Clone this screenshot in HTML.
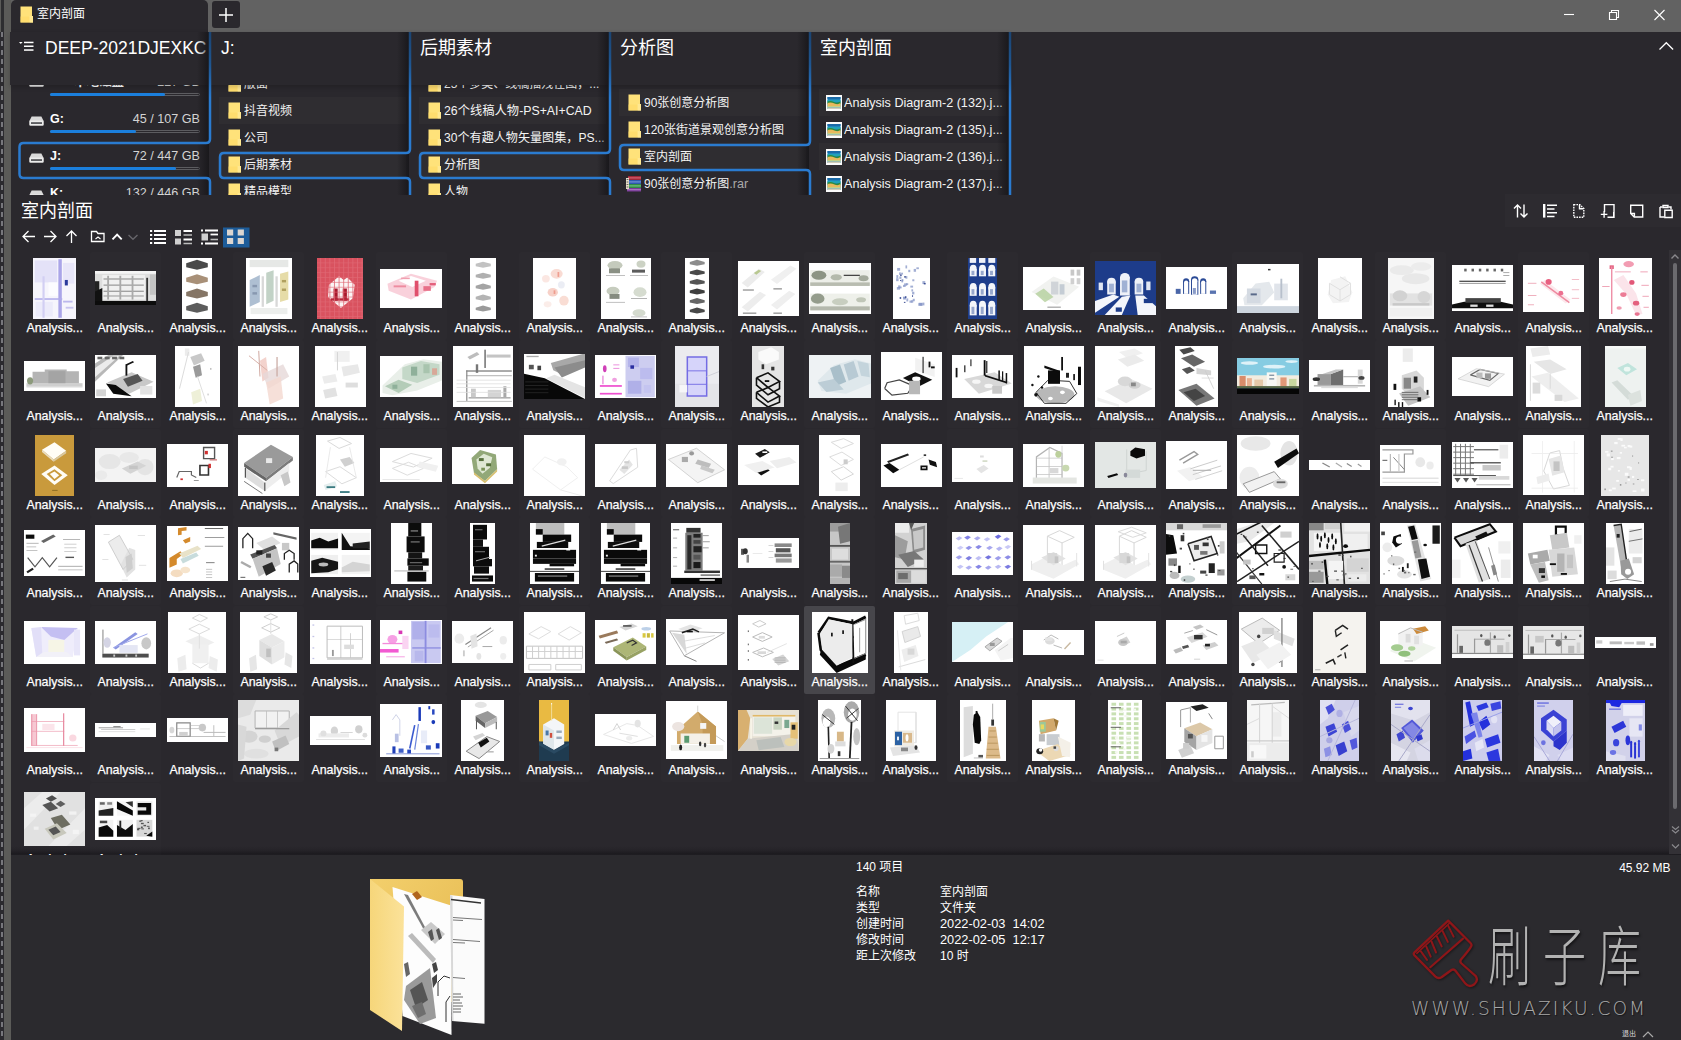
<!DOCTYPE html>
<html lang="zh"><head><meta charset="utf-8"><title>室内剖面</title>
<style>
*{box-sizing:border-box}
html,body{margin:0;padding:0}
body{width:1681px;height:1040px;background:#2a282d;position:relative;overflow:hidden;font-family:"Liberation Sans","Noto Sans CJK SC",sans-serif;color:#fff}
.ab{position:absolute;display:block}
#titlebar{position:absolute;left:0;top:0;width:1681px;height:32px;background:#626262}
#lstrip{position:absolute;left:0;top:0;width:11px;height:1040px;background:#5b5b58}
#lstrip i{position:absolute;left:0;top:32px;width:4px;height:1008px;background:#2b2a2e}
#lstrip b{position:absolute;left:1px;top:32px;width:1.5px;height:1008px;background:repeating-linear-gradient(#77777c 0 5px,#2b2a2e 5px 9px)}
#lstrip u{position:absolute;left:1px;top:0;width:2.5px;height:32px;background:#2e2e30}
#tab{position:absolute;left:11px;top:0;width:197px;height:33px;background:#2a282d;border-radius:5px 5px 0 0}
#tab span{position:absolute;left:26px;top:6px;font-size:12px;line-height:16px;color:#fff}
#plus{position:absolute;left:212px;top:1px;width:28px;height:27px;background:#2a282d;border-radius:3px}
#cols{position:absolute;left:0;top:85px;width:1681px;height:110px;overflow:hidden}
#cols>*{margin-top:-85px}
.crow{position:absolute;width:187px;height:27px}
.crow.z{background:rgba(255,255,255,.025)}
.ctext{position:absolute;font-size:12.6px;line-height:20px;height:20px;white-space:nowrap;overflow:hidden;color:#f4f4f4}
.chead{position:absolute;top:32px;height:53px;background:#2a282d;box-shadow:0 2px 5px rgba(0,0,0,.2)}
.ctitle{position:absolute;top:36px;font-size:17.5px;line-height:24px;white-space:nowrap;color:#fff}
.cshadow{position:absolute;top:32px;width:12px;height:163px;background:linear-gradient(90deg,rgba(20,19,22,0),rgba(20,19,22,.75))}
.dname{position:absolute;font-size:12.5px;font-weight:bold;line-height:16px;color:#fff}
.dsize{position:absolute;font-size:12.6px;line-height:16px;text-align:right;color:#d4d4d4;white-space:nowrap}
.dbar{position:absolute;width:150px;height:3.5px;border:1px solid #5c5c60;border-radius:2px;background:#2a282d}
.dbar i{position:absolute;left:-1px;top:-1px;height:3.5px;background:#1b7fdc;border-radius:2px}
#sectitle{position:absolute;left:21px;top:199px;font-size:18px;line-height:24px}
#grid{position:absolute;left:0;top:250px;width:1668px;height:605px;overflow:hidden}
.cell{position:absolute;width:71.39px;height:88px;border-radius:2px}
.cell.alt{background:rgba(255,255,255,.012)}
.cell.sel{background:#47464b}
.th{position:absolute;display:block}
.lb{position:absolute;left:0;width:100%;top:67px;text-align:center;font-size:12.4px;line-height:18px;color:#fff;white-space:nowrap;-webkit-text-stroke:.25px #fff}
#bottom{position:absolute;left:11px;top:855px;width:1670px;height:185px;background:#2b2a2e}
.info{position:absolute;font-size:12px;line-height:16px;white-space:nowrap;color:#fff}
</style></head>
<body>
<div id="titlebar"></div>
<div id="lstrip"><u></u><i></i><b></b></div>
<div id="tab"><svg class="ab" style="left:9px;top:5.5px" width="14" height="17" viewBox="0 0 14 17"><path d="M0.5 0.5h11.5v9.5h1v6.5h-12.500z" fill="#ffe27a"/><path d="M9.5 10h3.500v6.5h-3.500z" fill="#ffe892"/><path d="M0.5 10.5h9v6h-9z" fill="#ffdc6a" opacity=".7"/></svg><span>室内剖面</span></div>
<div id="plus"><svg class="ab" style="left:0;top:0" width="28" height="27" viewBox="0 0 28 27" stroke="#fff" stroke-width="1.5"><path d="M14 7v14M7 14h14"/></svg></div>
<svg class="ab" style="left:1550px;top:0" width="131" height="32" viewBox="1550 0 131 32" fill="none" stroke="#fff" stroke-width="1.1"><path d="M1564 14.500h10"/><path d="M1609.500 12.500h7v7h-7zM1611.500 12.500v-2h7v7h-2"/><path d="M1654.500 10l10 10M1664.500 10l-10 10"/></svg>
<svg class="ab" style="left:1655px;top:38px" width="22" height="16" viewBox="1655 38 22 16" fill="none" stroke="#fff" stroke-width="1.3"><path d="M1659.500 49.500l6.800-6.800 6.800 6.800"/></svg>
<div id="cols">
<svg class="ab" style="left:29px;top:77px" width="15" height="10" viewBox="0 0 15 10"><path d="M2.6 0.6h9.8l2.1 4.2v4.6h-14V4.8z" fill="#d9d9d9"/><rect x="0.5" y="4.6" width="14" height="4.8" rx="0.8" fill="#ececec"/><rect x="2" y="6.3" width="11" height="1.5" fill="#3a3a3e"/></svg>
<div class="dname" style="left:74px;top:74px">本地磁盘</div>
<div class="dsize" style="left:90px;top:74px;width:110px">227 GB</div>
<div class="dbar" style="left:50px;top:92.5px"><i style="width:115px"></i></div>
<svg class="ab" style="left:29px;top:115.5px" width="15" height="10" viewBox="0 0 15 10"><path d="M2.6 0.6h9.8l2.1 4.2v4.6h-14V4.8z" fill="#d9d9d9"/><rect x="0.5" y="4.6" width="14" height="4.8" rx="0.8" fill="#ececec"/><rect x="2" y="6.3" width="11" height="1.5" fill="#3a3a3e"/></svg>
<div class="dname" style="left:50px;top:111px">G:</div>
<div class="dsize" style="left:90px;top:111px;width:110px">45 / 107 GB</div>
<div class="dbar" style="left:50px;top:129.5px"><i style="width:86px"></i></div>
<svg class="ab" style="left:29px;top:152.5px" width="15" height="10" viewBox="0 0 15 10"><path d="M2.6 0.6h9.8l2.1 4.2v4.6h-14V4.8z" fill="#d9d9d9"/><rect x="0.5" y="4.6" width="14" height="4.8" rx="0.8" fill="#ececec"/><rect x="2" y="6.3" width="11" height="1.5" fill="#3a3a3e"/></svg>
<div class="dname" style="left:50px;top:148px">J:</div>
<div class="dsize" style="left:90px;top:148px;width:110px">72 / 447 GB</div>
<div class="dbar" style="left:50px;top:166.5px"><i style="width:126px"></i></div>
<svg class="ab" style="left:29px;top:189.5px" width="15" height="10" viewBox="0 0 15 10"><path d="M2.6 0.6h9.8l2.1 4.2v4.6h-14V4.8z" fill="#d9d9d9"/><rect x="0.5" y="4.6" width="14" height="4.8" rx="0.8" fill="#ececec"/><rect x="2" y="6.3" width="11" height="1.5" fill="#3a3a3e"/></svg>
<div class="dname" style="left:50px;top:185px">K:</div>
<div class="dsize" style="left:90px;top:185px;width:110px">132 / 446 GB</div>
<div class="dbar" style="left:50px;top:203.5px"><i style="width:90px"></i></div>
<div class="crow" style="left:219px;top:70px"></div>
<svg class="ab" style="left:228px;top:75px" width="14" height="17" viewBox="0 0 14 17"><path d="M0.5 0.5h11.5v9.5h1v6.5h-12.500z" fill="#ffe27a"/><path d="M9.5 10h3.500v6.5h-3.500z" fill="#ffe892"/><path d="M0.5 10.5h9v6h-9z" fill="#ffdc6a" opacity=".7"/></svg>
<div class="ctext" style="left:244px;top:73.5px;width:162px;font-size:12px">版面</div>
<div class="crow z" style="left:219px;top:97px"></div>
<svg class="ab" style="left:228px;top:102px" width="14" height="17" viewBox="0 0 14 17"><path d="M0.5 0.5h11.5v9.5h1v6.5h-12.500z" fill="#ffe27a"/><path d="M9.5 10h3.500v6.5h-3.500z" fill="#ffe892"/><path d="M0.5 10.5h9v6h-9z" fill="#ffdc6a" opacity=".7"/></svg>
<div class="ctext" style="left:244px;top:100.5px;width:162px;font-size:12px">抖音视频</div>
<div class="crow" style="left:219px;top:124px"></div>
<svg class="ab" style="left:228px;top:129px" width="14" height="17" viewBox="0 0 14 17"><path d="M0.5 0.5h11.5v9.5h1v6.5h-12.500z" fill="#ffe27a"/><path d="M9.5 10h3.500v6.5h-3.500z" fill="#ffe892"/><path d="M0.5 10.5h9v6h-9z" fill="#ffdc6a" opacity=".7"/></svg>
<div class="ctext" style="left:244px;top:127.5px;width:162px;font-size:12px">公司</div>
<div class="crow z" style="left:219px;top:151px"></div>
<svg class="ab" style="left:228px;top:156px" width="14" height="17" viewBox="0 0 14 17"><path d="M0.5 0.5h11.5v9.5h1v6.5h-12.500z" fill="#ffe27a"/><path d="M9.5 10h3.500v6.5h-3.500z" fill="#ffe892"/><path d="M0.5 10.5h9v6h-9z" fill="#ffdc6a" opacity=".7"/></svg>
<div class="ctext" style="left:244px;top:154.5px;width:162px;font-size:12px">后期素材</div>
<div class="crow" style="left:219px;top:178px"></div>
<svg class="ab" style="left:228px;top:183px" width="14" height="17" viewBox="0 0 14 17"><path d="M0.5 0.5h11.5v9.5h1v6.5h-12.500z" fill="#ffe27a"/><path d="M9.5 10h3.500v6.5h-3.500z" fill="#ffe892"/><path d="M0.5 10.5h9v6h-9z" fill="#ffdc6a" opacity=".7"/></svg>
<div class="ctext" style="left:244px;top:181.5px;width:162px;font-size:12px">精品模型</div>
<div class="crow" style="left:419px;top:70px"></div>
<svg class="ab" style="left:428px;top:75px" width="14" height="17" viewBox="0 0 14 17"><path d="M0.5 0.5h11.5v9.5h1v6.5h-12.500z" fill="#ffe27a"/><path d="M9.5 10h3.500v6.5h-3.500z" fill="#ffe892"/><path d="M0.5 10.5h9v6h-9z" fill="#ffdc6a" opacity=".7"/></svg>
<div class="ctext" style="left:444px;top:73.5px;width:162px;font-size:12px">25个多类、线稿插残在图，...</div>
<div class="crow z" style="left:419px;top:97px"></div>
<svg class="ab" style="left:428px;top:102px" width="14" height="17" viewBox="0 0 14 17"><path d="M0.5 0.5h11.5v9.5h1v6.5h-12.500z" fill="#ffe27a"/><path d="M9.5 10h3.500v6.5h-3.500z" fill="#ffe892"/><path d="M0.5 10.5h9v6h-9z" fill="#ffdc6a" opacity=".7"/></svg>
<div class="ctext" style="left:444px;top:100.5px;width:162px;font-size:12.3px">26个线稿人物-PS+AI+CAD</div>
<div class="crow" style="left:419px;top:124px"></div>
<svg class="ab" style="left:428px;top:129px" width="14" height="17" viewBox="0 0 14 17"><path d="M0.5 0.5h11.5v9.5h1v6.5h-12.500z" fill="#ffe27a"/><path d="M9.5 10h3.500v6.5h-3.500z" fill="#ffe892"/><path d="M0.5 10.5h9v6h-9z" fill="#ffdc6a" opacity=".7"/></svg>
<div class="ctext" style="left:444px;top:127.5px;width:162px;font-size:12.1px">30个有趣人物矢量图集，PS...</div>
<div class="crow z" style="left:419px;top:151px"></div>
<svg class="ab" style="left:428px;top:156px" width="14" height="17" viewBox="0 0 14 17"><path d="M0.5 0.5h11.5v9.5h1v6.5h-12.500z" fill="#ffe27a"/><path d="M9.5 10h3.500v6.5h-3.500z" fill="#ffe892"/><path d="M0.5 10.5h9v6h-9z" fill="#ffdc6a" opacity=".7"/></svg>
<div class="ctext" style="left:444px;top:154.5px;width:162px;font-size:12px">分析图</div>
<div class="crow" style="left:419px;top:178px"></div>
<svg class="ab" style="left:428px;top:183px" width="14" height="17" viewBox="0 0 14 17"><path d="M0.5 0.5h11.5v9.5h1v6.5h-12.500z" fill="#ffe27a"/><path d="M9.5 10h3.500v6.5h-3.500z" fill="#ffe892"/><path d="M0.5 10.5h9v6h-9z" fill="#ffdc6a" opacity=".7"/></svg>
<div class="ctext" style="left:444px;top:181.5px;width:162px;font-size:12px">人物</div>
<div class="crow z" style="left:619px;top:89px"></div>
<svg class="ab" style="left:628px;top:94px" width="14" height="17" viewBox="0 0 14 17"><path d="M0.5 0.5h11.5v9.5h1v6.5h-12.500z" fill="#ffe27a"/><path d="M9.5 10h3.500v6.5h-3.500z" fill="#ffe892"/><path d="M0.5 10.5h9v6h-9z" fill="#ffdc6a" opacity=".7"/></svg>
<div class="ctext" style="left:644px;top:92.5px;width:162px;font-size:12px">90张创意分析图</div>
<div class="crow" style="left:619px;top:116px"></div>
<svg class="ab" style="left:628px;top:121px" width="14" height="17" viewBox="0 0 14 17"><path d="M0.5 0.5h11.5v9.5h1v6.5h-12.500z" fill="#ffe27a"/><path d="M9.5 10h3.500v6.5h-3.500z" fill="#ffe892"/><path d="M0.5 10.5h9v6h-9z" fill="#ffdc6a" opacity=".7"/></svg>
<div class="ctext" style="left:644px;top:119.5px;width:162px;font-size:12px">120张街道景观创意分析图</div>
<div class="crow z" style="left:619px;top:143px"></div>
<svg class="ab" style="left:628px;top:148px" width="14" height="17" viewBox="0 0 14 17"><path d="M0.5 0.5h11.5v9.5h1v6.5h-12.500z" fill="#ffe27a"/><path d="M9.5 10h3.500v6.5h-3.500z" fill="#ffe892"/><path d="M0.5 10.5h9v6h-9z" fill="#ffdc6a" opacity=".7"/></svg>
<div class="ctext" style="left:644px;top:146.5px;width:162px;font-size:12px">室内剖面</div>
<div class="crow" style="left:619px;top:170px"></div>
<svg class="ab" style="left:626px;top:174.5px" width="16" height="17" viewBox="0 0 16 17"><rect x="2" y="1" width="13" height="4" fill="#a02838"/><rect x="2" y="2.3" width="13" height="1.2" fill="#d86070"/><rect x="1" y="5" width="14" height="4" fill="#3058b0"/><rect x="1" y="6.3" width="14" height="1.2" fill="#7090d8"/><rect x="2" y="9" width="13" height="4" fill="#2f8a48"/><rect x="2" y="10.3" width="13" height="1.2" fill="#70c080"/><rect x="1" y="13" width="14" height="3.5" fill="#7a3a98"/><rect x="1" y="14.2" width="14" height="1" fill="#b080c8"/><rect x="0" y="3" width="3" height="11" fill="#e8e0c8"/><rect x="0.6" y="4" width="1.8" height="1" fill="#666"/><rect x="0.6" y="6.5" width="1.8" height="1" fill="#666"/><rect x="0.6" y="9" width="1.8" height="1" fill="#666"/><rect x="0.6" y="11.5" width="1.8" height="1" fill="#666"/></svg>
<div class="ctext" style="left:644px;top:173.5px;width:162px;font-size:12px">90张创意分析图<span style="color:#aaa;font-size:12.6px">.rar</span></div>
<div class="crow z" style="left:819px;top:89px"></div>
<svg class="ab" style="left:826px;top:95px" width="16" height="16" viewBox="0 0 16 16"><rect x="0" y="0" width="16" height="16" fill="#fbfbfb"/><rect x="1.5" y="2" width="13" height="12" fill="#1f86bd"/><rect x="1.5" y="2" width="13" height="2" fill="#1a6aa8"/><rect x="1.5" y="5" width="13" height="2" fill="#20a2b8"/><path d="M1.5 6.500Q5 5.500 8 7T14.500 6.500V9H1.500z" fill="#2d8c3c"/><path d="M1.5 8Q5 7 8.500 8.500T14.500 8V12H1.500z" fill="#e9b95c"/><rect x="1.5" y="11.300" width="13" height="1.200" fill="#b4dc98"/><rect x="1.5" y="12.500" width="13" height="1.500" fill="#d2ccb8"/></svg>
<div class="ctext" style="left:844px;top:92.5px;width:162px;font-size:12.6px">Analysis Diagram-2 (132).j...</div>
<div class="crow" style="left:819px;top:116px"></div>
<svg class="ab" style="left:826px;top:122px" width="16" height="16" viewBox="0 0 16 16"><rect x="0" y="0" width="16" height="16" fill="#fbfbfb"/><rect x="1.5" y="2" width="13" height="12" fill="#1f86bd"/><rect x="1.5" y="2" width="13" height="2" fill="#1a6aa8"/><rect x="1.5" y="5" width="13" height="2" fill="#20a2b8"/><path d="M1.5 6.500Q5 5.500 8 7T14.500 6.500V9H1.500z" fill="#2d8c3c"/><path d="M1.5 8Q5 7 8.500 8.500T14.500 8V12H1.500z" fill="#e9b95c"/><rect x="1.5" y="11.300" width="13" height="1.200" fill="#b4dc98"/><rect x="1.5" y="12.500" width="13" height="1.500" fill="#d2ccb8"/></svg>
<div class="ctext" style="left:844px;top:119.5px;width:162px;font-size:12.6px">Analysis Diagram-2 (135).j...</div>
<div class="crow z" style="left:819px;top:143px"></div>
<svg class="ab" style="left:826px;top:149px" width="16" height="16" viewBox="0 0 16 16"><rect x="0" y="0" width="16" height="16" fill="#fbfbfb"/><rect x="1.5" y="2" width="13" height="12" fill="#1f86bd"/><rect x="1.5" y="2" width="13" height="2" fill="#1a6aa8"/><rect x="1.5" y="5" width="13" height="2" fill="#20a2b8"/><path d="M1.5 6.500Q5 5.500 8 7T14.500 6.500V9H1.500z" fill="#2d8c3c"/><path d="M1.5 8Q5 7 8.500 8.500T14.500 8V12H1.500z" fill="#e9b95c"/><rect x="1.5" y="11.300" width="13" height="1.200" fill="#b4dc98"/><rect x="1.5" y="12.500" width="13" height="1.500" fill="#d2ccb8"/></svg>
<div class="ctext" style="left:844px;top:146.5px;width:162px;font-size:12.6px">Analysis Diagram-2 (136).j...</div>
<div class="crow" style="left:819px;top:170px"></div>
<svg class="ab" style="left:826px;top:176px" width="16" height="16" viewBox="0 0 16 16"><rect x="0" y="0" width="16" height="16" fill="#fbfbfb"/><rect x="1.5" y="2" width="13" height="12" fill="#1f86bd"/><rect x="1.5" y="2" width="13" height="2" fill="#1a6aa8"/><rect x="1.5" y="5" width="13" height="2" fill="#20a2b8"/><path d="M1.5 6.500Q5 5.500 8 7T14.500 6.500V9H1.500z" fill="#2d8c3c"/><path d="M1.5 8Q5 7 8.500 8.500T14.500 8V12H1.500z" fill="#e9b95c"/><rect x="1.5" y="11.300" width="13" height="1.200" fill="#b4dc98"/><rect x="1.5" y="12.500" width="13" height="1.500" fill="#d2ccb8"/></svg>
<div class="ctext" style="left:844px;top:173.5px;width:162px;font-size:12.6px">Analysis Diagram-2 (137).j...</div>
</div>
<div class="chead" style="left:10px;width:200px"></div>
<div class="chead" style="left:210px;width:200px"></div>
<div class="chead" style="left:410px;width:200px"></div>
<div class="chead" style="left:610px;width:200px"></div>
<div class="chead" style="left:810px;width:200px"></div>
<div class="ctitle" style="left:45px;font-size:17.5px">DEEP-2021DJEXKC</div>
<div class="ctitle" style="left:221px;font-size:17.5px">J:</div>
<div class="ctitle" style="left:420px;font-size:18px">后期素材</div>
<div class="ctitle" style="left:620px;font-size:18px">分析图</div>
<div class="ctitle" style="left:820px;font-size:18px">室内剖面</div>
<svg class="ab" style="left:17px;top:38px" width="20" height="16" viewBox="17 38 20 16" fill="#fff"><path d="M19 42h3.600l-1.800 2z"/><rect x="24" y="41.700" width="9.500" height="1.500"/><rect x="24" y="45.500" width="9.500" height="1.500"/><rect x="24" y="49.300" width="9.500" height="1.500"/></svg>
<div class="cshadow" style="left:197px"></div>
<div class="cshadow" style="left:397px"></div>
<div class="cshadow" style="left:597px"></div>
<div class="cshadow" style="left:797px"></div>
<div class="cshadow" style="left:997px"></div>
<svg class="ab" style="left:0;top:32px" width="1020" height="163" viewBox="0 32 1020 163" fill="none" stroke="url(#bl)" stroke-width="2.5"><defs><linearGradient id="bl" gradientUnits="userSpaceOnUse" x1="0" y1="32" x2="0" y2="196"><stop offset="0" stop-color="#1b4472"/><stop offset=".2" stop-color="#1f5690"/><stop offset=".4" stop-color="#2a7bd0"/><stop offset="1" stop-color="#2a7bd0"/></linearGradient></defs><path d="M210 32V139Q210 143 206 143H23.5Q19.5 143 19.5 147V174Q19.5 178 23.5 178H206Q210 178 210 182V196"/><path d="M410 32V149Q410 153 406 153H224Q220 153 220 157V174Q220 178 224 178H406Q410 178 410 182V196"/><path d="M610 32V149Q610 153 606 153H424Q420 153 420 157V174Q420 178 424 178H606Q610 178 610 182V196"/><path d="M810 32V141Q810 145 806 145H624Q620 145 620 149V166Q620 170 624 170H806Q810 170 810 174V196"/><path d="M1010 32V196"/></svg>
<div id="sectitle">室内剖面</div>
<svg class="ab" style="left:18px;top:224px" width="236" height="26" viewBox="18 224 236 26" fill="none" stroke="#fff" stroke-width="1.3">
<path d="M35 236.5H23M28.5 231l-5.5 5.5 5.5 5.5"/>
<path d="M44 236.5H56M50.5 231l5.5 5.5-5.5 5.5"/>
<path d="M71.5 243V231M66.5 236l5-5 5 5"/>
<path d="M91.5 231.5h5l1.5 2h6v8h-12.5z"/><path d="M95.5 239l2.5-2 2.5 2" stroke-width="1.1"/>
<path d="M112.5 239.3l4.6-4.6 4.6 4.6" stroke-width="1.9"/>
<path d="M128.5 235l4.5 4.3 4.5-4.3" stroke="#66656a" stroke-width="1.4"/>
<path d="M150 231h2.2M154 231h12" stroke-width="2"/>
<path d="M150 235h2.2M154 235h12" stroke-width="2"/>
<path d="M150 239h2.2M154 239h12" stroke-width="2"/>
<path d="M150 243h2.2M154 243h12" stroke-width="2"/>
<rect x="175" y="230" width="6" height="6" fill="#d0d0d0" stroke="none"/><rect x="175" y="238.5" width="6" height="6" fill="#d0d0d0" stroke="none"/>
<path d="M183.5 231h8.5M183.5 239.5h8.5" stroke-width="1.8"/><path d="M183.5 235h8.5M183.5 243.5h8.5" stroke="#bdbdbd" stroke-width="1.6"/>
<path d="M201 230.5h2M205 230.5h13M201 243.5h2M205 243.5h13" stroke-width="2"/><rect x="201.5" y="233.5" width="6.5" height="7" fill="#cfcfcf" stroke="none"/><path d="M210.5 234.5h7.5" stroke-width="1.8"/><path d="M210.5 239.5h7.5" stroke="#bdbdbd" stroke-width="1.6"/>
<rect x="223" y="227.5" width="26.5" height="20" fill="#1d5c99" stroke="none"/>
<rect x="227" y="229.5" width="6.2" height="6" fill="#dcd6d0" stroke="none"/>
<rect x="237.7" y="229.5" width="6.2" height="6" fill="#dcd6d0" stroke="none"/>
<rect x="227" y="238" width="6.2" height="6" fill="#dcd6d0" stroke="none"/>
<rect x="237.7" y="238" width="6.2" height="6" fill="#dcd6d0" stroke="none"/>
</svg>
<div class="ab" style="left:1505px;top:194px;width:176px;height:33px;background:rgba(255,255,255,.015)"></div>
<svg class="ab" style="left:1508px;top:200px" width="170" height="22" viewBox="1508 200 170 22" fill="none" stroke="#fff" stroke-width="1.4">
<path d="M1517.5 217.5V205M1514 208.5l3.5-3.5 3.5 3.5M1524 204.5V217M1520.500 213.5l3.5 3.5 3.5-3.5"/>
<path d="M1544.2 204v13.6" stroke-width="2.4"/><path d="M1547 205.200h10M1547 209h7.5M1547 212.800h10M1547 216.600h7.500" stroke-width="1.5"/>
<path d="M1573.8 204.600h6l4 4v8.600h-10z" stroke-dasharray="1.6 1"/><path d="M1579.500 204.800v4h4"/>
<path d="M1604.500 212V204.600h9.500v12.600h-6.500M1600.800 214.400h6.600M1604.100 211.100v6.600"/><path d="M1613.500 212v5" stroke-width="1"/>
<path d="M1630.700 205.200h12v11.800h-8.500l-3.500-3.500z"/><path d="M1631 213.500h3.400v3.300"/>
<path d="M1660 207h2.500M1668.500 207h2.500v2.500M1660 207v10h4"/><path d="M1663 207.500v-2h5v2z"/><path d="M1664.800 210.200h7.400v7.300h-7.400z"/>
</svg>
<div class="ab" style="left:11px;top:846px;width:1670px;height:9px;background:linear-gradient(rgba(24,23,27,0),rgba(24,23,27,.25) 45%,rgba(24,23,27,.8) 88%,rgba(24,23,27,.55))"></div>
<div id="grid">
<div class="cell" style="left:19px;top:2px"><svg class="th" style="left:14px;top:6px;background:#f6f5fc" width="43" height="61" viewBox="0 0 100 100" preserveAspectRatio="none"><rect x="4" y="4" width="52" height="36" fill="#e4e2f8"/><rect x="70" y="8" width="26" height="34" fill="#e8e6f9"/><rect x="6" y="72" width="40" height="24" fill="#ecebfa"/><rect x="36" y="40" width="22" height="22" fill="#fcfcff"/><rect x="59" y="2" width="8" height="96" fill="#aaa5e8"/><rect x="4" y="66" width="64" height="2.5" fill="#b0abea"/><rect x="22" y="30" width="5" height="68" fill="#d2cff3"/><rect x="74" y="36" width="7" height="9" fill="#2b3a9a"/><rect x="70" y="70" width="22" height="3" fill="#bcb8ec"/><rect x="76" y="80" width="18" height="3" fill="#c8c4f0"/></svg><span class="lb">Analysis...</span></div>
<div class="cell alt" style="left:90px;top:2px"><svg class="th" style="left:5px;top:19px;background:#dedede" width="61" height="34" viewBox="0 0 100 100" preserveAspectRatio="none"><rect x="0" y="0" width="100" height="8" fill="#f4f4f4"/><rect x="0" y="30" width="7" height="70" fill="#222"/><rect x="12" y="12" width="70" height="72" fill="#f0f0f0"/><rect x="14" y="22" width="66" height="3" fill="#888"/><rect x="14" y="40" width="66" height="3" fill="#888"/><rect x="14" y="58" width="66" height="3" fill="#888"/><rect x="14" y="72" width="66" height="3" fill="#999"/><rect x="84" y="20" width="3" height="68" fill="#333"/><rect x="90" y="10" width="10" height="60" fill="#c4c4c4"/><rect x="0" y="88" width="100" height="12" fill="#0c0c0c"/><polygon points="0,60 12,50 12,88 0,88" fill="#111"/><rect x="20" y="14" width="3" height="70" fill="#aaa"/><rect x="40" y="14" width="3" height="70" fill="#aaa"/><rect x="60" y="14" width="3" height="70" fill="#aaa"/></svg><span class="lb">Analysis...</span></div>
<div class="cell" style="left:162px;top:2px"><svg class="th" style="left:20px;top:6px;background:#ffffff" width="30" height="61" viewBox="0 0 100 100" preserveAspectRatio="none"><polygon points="50,3.0 86,8.7575 86,15.337499999999999 50,19.45 14,15.337499999999999 14,8.7575" fill="#4a4a4a"/><polygon points="50,26.5 86,32.2575 86,38.8375 50,42.95 14,38.8375 14,32.2575" fill="#a89078"/><polygon points="50,50.0 86,55.7575 86,62.3375 50,66.45 14,62.3375 14,55.7575" fill="#857565"/><polygon points="50,73.5 86,79.2575 86,85.8375 50,89.95 14,85.8375 14,79.2575" fill="#5c5c5c"/></svg><span class="lb">Analysis...</span></div>
<div class="cell alt" style="left:233px;top:2px"><svg class="th" style="left:13px;top:6px;background:#ffffff" width="46" height="61" viewBox="0 0 100 100" preserveAspectRatio="none"><rect x="8" y="3" width="84" height="12" fill="#e6e8e6"/><polygon points="8,36 30,28 30,72 8,80" fill="#aebfd2"/><polygon points="44,24 60,20 60,70 44,76" fill="#c2d2c6"/><polygon points="74,26 92,22 92,68 74,72" fill="#e6dca8"/><rect x="10" y="82" width="80" height="10" fill="#eceeec"/><rect x="34" y="30" width="5" height="50" fill="#d8d8d8"/><rect x="64" y="30" width="5" height="50" fill="#d8d8d8"/><rect x="14" y="44" width="10" height="4" fill="#8898b0"/><rect x="14" y="56" width="10" height="4" fill="#8898b0"/><rect x="78" y="36" width="9" height="4" fill="#b0a060"/><rect x="78" y="50" width="9" height="4" fill="#b0a060"/></svg><span class="lb">Analysis...</span></div>
<div class="cell" style="left:304px;top:2px"><svg class="th" style="left:13px;top:6px;background:#d9525f" width="46" height="61" viewBox="0 0 100 100" preserveAspectRatio="none"><polygon points="26,44 48,30 58,36 66,32 82,44 78,66 52,82 24,64" fill="#fbf4f4"/><rect x="36" y="50" width="9" height="20" fill="#a8182c"/><rect x="56" y="50" width="9" height="20" fill="#a8182c"/><rect x="30" y="66" width="40" height="4" fill="#b8283c"/><line x1="0" y1="8" x2="100" y2="8" stroke="#e06a76" stroke-width="0.6" vector-effect="non-scaling-stroke"/><line x1="0" y1="16" x2="100" y2="16" stroke="#e06a76" stroke-width="0.6" vector-effect="non-scaling-stroke"/><line x1="0" y1="24" x2="100" y2="24" stroke="#e06a76" stroke-width="0.6" vector-effect="non-scaling-stroke"/><line x1="0" y1="32" x2="100" y2="32" stroke="#e06a76" stroke-width="0.6" vector-effect="non-scaling-stroke"/><line x1="0" y1="40" x2="100" y2="40" stroke="#e06a76" stroke-width="0.6" vector-effect="non-scaling-stroke"/><line x1="0" y1="48" x2="100" y2="48" stroke="#e06a76" stroke-width="0.6" vector-effect="non-scaling-stroke"/><line x1="0" y1="56" x2="100" y2="56" stroke="#e06a76" stroke-width="0.6" vector-effect="non-scaling-stroke"/><line x1="0" y1="64" x2="100" y2="64" stroke="#e06a76" stroke-width="0.6" vector-effect="non-scaling-stroke"/><line x1="0" y1="72" x2="100" y2="72" stroke="#e06a76" stroke-width="0.6" vector-effect="non-scaling-stroke"/><line x1="0" y1="80" x2="100" y2="80" stroke="#e06a76" stroke-width="0.6" vector-effect="non-scaling-stroke"/><line x1="0" y1="88" x2="100" y2="88" stroke="#e06a76" stroke-width="0.6" vector-effect="non-scaling-stroke"/><line x1="0" y1="96" x2="100" y2="96" stroke="#e06a76" stroke-width="0.6" vector-effect="non-scaling-stroke"/><line x1="8" y1="0" x2="8" y2="100" stroke="#e06a76" stroke-width="0.8" vector-effect="non-scaling-stroke"/><line x1="18" y1="0" x2="18" y2="100" stroke="#e06a76" stroke-width="0.8" vector-effect="non-scaling-stroke"/><line x1="28" y1="0" x2="28" y2="100" stroke="#e06a76" stroke-width="0.8" vector-effect="non-scaling-stroke"/><line x1="38" y1="0" x2="38" y2="100" stroke="#e06a76" stroke-width="0.8" vector-effect="non-scaling-stroke"/><line x1="48" y1="0" x2="48" y2="100" stroke="#e06a76" stroke-width="0.8" vector-effect="non-scaling-stroke"/><line x1="58" y1="0" x2="58" y2="100" stroke="#e06a76" stroke-width="0.8" vector-effect="non-scaling-stroke"/><line x1="68" y1="0" x2="68" y2="100" stroke="#e06a76" stroke-width="0.8" vector-effect="non-scaling-stroke"/><line x1="78" y1="0" x2="78" y2="100" stroke="#e06a76" stroke-width="0.8" vector-effect="non-scaling-stroke"/><line x1="88" y1="0" x2="88" y2="100" stroke="#e06a76" stroke-width="0.8" vector-effect="non-scaling-stroke"/><line x1="98" y1="0" x2="98" y2="100" stroke="#e06a76" stroke-width="0.8" vector-effect="non-scaling-stroke"/></svg><span class="lb">Analysis...</span></div>
<div class="cell alt" style="left:376px;top:2px"><svg class="th" style="left:4px;top:17px;background:#ffffff" width="62" height="39" viewBox="0 0 100 100" preserveAspectRatio="none"><polygon points="12,38 50,12 92,30 88,46 50,78 14,56" fill="#f7c6d2" opacity="0.8"/><polygon points="30,30 50,18 74,30 52,46" fill="#ffffff"/><rect x="56" y="30" width="6" height="40" fill="#e0506c"/><rect x="70" y="44" width="12" height="12" fill="#e87088"/><rect x="22" y="42" width="20" height="5" fill="#ee8ca0"/><rect x="34" y="22" width="14" height="4" fill="#f0a0b0"/><rect x="80" y="36" width="10" height="6" fill="#e4607c"/></svg><span class="lb">Analysis...</span></div>
<div class="cell" style="left:447px;top:2px"><svg class="th" style="left:23px;top:6px;background:#ffffff" width="26" height="61" viewBox="0 0 100 100" preserveAspectRatio="none"><polygon points="50,6.0 80,9.465 80,13.425 50,15.9 22,13.425 22,9.465" fill="#c2c2c2"/><polygon points="50,24.0 80,27.465 80,31.425 50,33.9 22,31.425 22,27.465" fill="#b0b0b0"/><polygon points="50,42.0 80,45.465 80,49.425 50,51.9 22,49.425 22,45.465" fill="#a4a4a4"/><polygon points="50,60.0 80,63.465 80,67.425 50,69.9 22,67.425 22,63.465" fill="#b4b4b4"/><polygon points="50,78.0 80,81.465 80,85.425 50,87.9 22,85.425 22,81.465" fill="#9a9a9a"/></svg><span class="lb">Analysis...</span></div>
<div class="cell alt" style="left:519px;top:2px"><svg class="th" style="left:14px;top:6px;background:#ffffff" width="43" height="61" viewBox="0 0 100 100" preserveAspectRatio="none"><ellipse cx="55" cy="26" rx="14" ry="8" fill="#f6ccc0" opacity="0.7"/><ellipse cx="30" cy="34" rx="9" ry="6" fill="#f9ddd6" opacity="0.7"/><ellipse cx="46" cy="56" rx="12" ry="7" fill="#f4beb0" opacity="0.7"/><ellipse cx="72" cy="70" rx="11" ry="8" fill="#f6cec2" opacity="0.7"/><ellipse cx="34" cy="76" rx="9" ry="5" fill="#fae6e0" opacity="0.7"/><ellipse cx="66" cy="44" rx="8" ry="6" fill="#e2e6f0" opacity="0.7"/><rect x="57" y="23" width="4" height="8" fill="#ec9080" opacity="0.8"/><rect x="48" y="53" width="4" height="6" fill="#ec9080" opacity="0.8"/></svg><span class="lb">Analysis...</span></div>
<div class="cell" style="left:590px;top:2px"><svg class="th" style="left:11px;top:6px;background:#ffffff" width="50" height="61" viewBox="0 0 100 100" preserveAspectRatio="none"><ellipse cx="28" cy="12" rx="15" ry="7" fill="#c4cabc"/><rect x="16" y="17" width="22" height="8" fill="#8a9084"/><rect x="10" y="28" width="38" height="1.2" fill="#aaa"/><ellipse cx="80" cy="10" rx="9" ry="6" fill="#ccd2c4"/><rect x="62" y="19" width="26" height="5" fill="#5c5c5c"/><rect x="58" y="28" width="36" height="1.2" fill="#aaa"/><ellipse cx="24" cy="54" rx="13" ry="7" fill="#c6ccbe"/><rect x="17" y="59" width="20" height="8" fill="#868c80"/><rect x="10" y="72" width="38" height="1.2" fill="#aaa"/><ellipse cx="78" cy="56" rx="13" ry="8" fill="#d6dcd0"/><rect x="60" y="66" width="32" height="1.2" fill="#999"/><ellipse cx="76" cy="90" rx="13" ry="6" fill="#d4dace"/><rect x="60" y="96" width="32" height="1.2" fill="#aaa"/></svg><span class="lb">Analysis...</span></div>
<div class="cell alt" style="left:661px;top:2px"><svg class="th" style="left:24px;top:6px;background:#ffffff" width="24" height="61" viewBox="0 0 100 100" preserveAspectRatio="none"><polygon points="50,3.0 82,6.399666666666667 82,10.285 50,12.713333333333333 20,10.285 20,6.399666666666667" fill="#8c8c8c"/><polygon points="50,18.666666666666664 82,22.06633333333333 82,25.951666666666664 50,28.379999999999995 20,25.951666666666664 20,22.06633333333333" fill="#4a4a4a"/><polygon points="50,34.33333333333333 82,37.733 82,41.618333333333325 50,44.04666666666666 20,41.618333333333325 20,37.733" fill="#555"/><polygon points="50,50.0 82,53.39966666666667 82,57.285 50,59.71333333333333 20,57.285 20,53.39966666666667" fill="#3e3e3e"/><polygon points="50,65.66666666666666 82,69.06633333333332 82,72.95166666666665 50,75.38 20,72.95166666666665 20,69.06633333333332" fill="#666"/><polygon points="50,81.33333333333333 82,84.73299999999999 82,88.61833333333333 50,91.04666666666667 20,88.61833333333333 20,84.73299999999999" fill="#484848"/></svg><span class="lb">Analysis...</span></div>
<div class="cell" style="left:733px;top:2px"><svg class="th" style="left:5px;top:9px;background:#ffffff" width="61" height="55" viewBox="0 0 100 100" preserveAspectRatio="none"><polygon points="6,40 34,14 44,20 16,48" fill="#ececec"/><polygon points="26,22 34,16 38,18 30,25" fill="#b8c890"/><polygon points="54,34 86,8 96,14 64,42" fill="#f0f0f0"/><polygon points="6,84 36,56 46,62 16,92" fill="#ededed"/><polygon points="54,80 84,54 94,60 64,88" fill="#efefef"/><rect x="8" y="52" width="18" height="1.5" fill="#555"/><rect x="58" y="50" width="14" height="1.5" fill="#555"/><rect x="8" y="94" width="22" height="1.5" fill="#555"/><rect x="58" y="94" width="14" height="1.5" fill="#555"/></svg><span class="lb">Analysis...</span></div>
<div class="cell alt" style="left:804px;top:2px"><svg class="th" style="left:5px;top:11px;background:#ffffff" width="62" height="51" viewBox="0 0 100 100" preserveAspectRatio="none"><rect x="2" y="14" width="96" height="30" fill="#eceee8"/><ellipse cx="16" cy="24" rx="12" ry="9" fill="#8c9484"/><ellipse cx="44" cy="28" rx="9" ry="6" fill="#b4baac"/><rect x="56" y="23" width="26" height="2.5" fill="#444"/><ellipse cx="88" cy="30" rx="8" ry="6" fill="#a4aa9c"/><rect x="2" y="38" width="96" height="7" fill="#b8bcb0"/><rect x="2" y="60" width="96" height="32" fill="#eef0ea"/><ellipse cx="14" cy="70" rx="11" ry="10" fill="#949c8c"/><ellipse cx="50" cy="76" rx="13" ry="7" fill="#c8cec0"/><rect x="2" y="85" width="96" height="8" fill="#b4b8ac"/><ellipse cx="84" cy="72" rx="8" ry="5" fill="#c0c6b8"/></svg><span class="lb">Analysis...</span></div>
<div class="cell" style="left:875px;top:2px"><svg class="th" style="left:18px;top:6px;background:#ffffff" width="37" height="61" viewBox="0 0 100 100" preserveAspectRatio="none"><rect x="27.4" y="63.6" width="7.6" height="4.6" fill="#8494c6" opacity="0.75"/><rect x="21.9" y="24.1" width="5.2" height="3.1" fill="#8494c6" opacity="0.75"/><rect x="63.1" y="15.3" width="6.9" height="3" fill="#8494c6" opacity="0.75"/><rect x="30.1" y="41.5" width="8.3" height="4" fill="#8494c6" opacity="0.75"/><rect x="9.1" y="28" width="5.2" height="4.7" fill="#8494c6" opacity="0.75"/><rect x="68.7" y="74.1" width="8.2" height="4.4" fill="#8494c6" opacity="0.75"/><rect x="79.2" y="73.1" width="5.7" height="4.6" fill="#8494c6" opacity="0.75"/><rect x="44.5" y="69.7" width="7" height="3.6" fill="#8494c6" opacity="0.75"/><rect x="35.3" y="41.4" width="5.9" height="2.8" fill="#8494c6" opacity="0.75"/><rect x="69.5" y="73.4" width="8.9" height="4.2" fill="#8494c6" opacity="0.75"/><rect x="49.6" y="69.1" width="5.1" height="4.2" fill="#8494c6" opacity="0.75"/><rect x="41.3" y="19.4" width="5.4" height="3.8" fill="#8494c6" opacity="0.75"/><rect x="27" y="44" width="7.2" height="3.5" fill="#8494c6" opacity="0.75"/><rect x="17.8" y="46.7" width="5.6" height="3.1" fill="#8494c6" opacity="0.75"/><rect x="22.6" y="35.9" width="4.8" height="4.1" fill="#8494c6" opacity="0.75"/><rect x="79.5" y="37.9" width="7.7" height="4.8" fill="#8494c6" opacity="0.75"/><rect x="11.2" y="16.3" width="8.1" height="4.6" fill="#8494c6" opacity="0.75"/><rect x="55.9" y="17.9" width="6.4" height="4.7" fill="#8494c6" opacity="0.75"/><rect x="74.5" y="73.9" width="5.4" height="4.6" fill="#8494c6" opacity="0.75"/><rect x="36.1" y="66.3" width="5.1" height="4.9" fill="#8494c6" opacity="0.75"/><rect x="53.3" y="66.9" width="5.5" height="4" fill="#8494c6" opacity="0.75"/><rect x="51.6" y="55.4" width="6.1" height="4.3" fill="#8494c6" opacity="0.75"/><rect x="33.6" y="29.7" width="5.2" height="4.2" fill="#8494c6" opacity="0.75"/><rect x="16.4" y="23.6" width="4.8" height="4.1" fill="#8494c6" opacity="0.75"/><rect x="49.7" y="51.3" width="4.7" height="3.6" fill="#8494c6" opacity="0.75"/><rect x="33.7" y="12.1" width="4.5" height="5" fill="#8494c6" opacity="0.75"/><rect x="17.1" y="30.2" width="5.7" height="4" fill="#8494c6" opacity="0.75"/><rect x="13.8" y="44.9" width="6.2" height="4.6" fill="#8494c6" opacity="0.75"/><rect x="8.4" y="33.1" width="6.7" height="4.9" fill="#8494c6" opacity="0.75"/><rect x="46.8" y="45.3" width="7.5" height="3.2" fill="#8494c6" opacity="0.75"/><rect x="10.4" y="47.6" width="8.6" height="4.3" fill="#8494c6" opacity="0.75"/><rect x="27.4" y="63.5" width="8.3" height="3.1" fill="#8494c6" opacity="0.75"/><rect x="52.1" y="34.9" width="5.6" height="3.2" fill="#8494c6" opacity="0.75"/><rect x="23.3" y="34.5" width="4.7" height="3.5" fill="#8494c6" opacity="0.75"/><rect x="18" y="64.1" width="4.1" height="2.9" fill="#2a3e8a" opacity="0.9"/><rect x="30.3" y="29.7" width="4.3" height="2.5" fill="#2a3e8a" opacity="0.9"/><rect x="32.7" y="62.7" width="3.5" height="2.7" fill="#2a3e8a" opacity="0.9"/><rect x="18.9" y="27.2" width="4.8" height="2" fill="#2a3e8a" opacity="0.9"/><rect x="29.5" y="71.9" width="4.1" height="1.7" fill="#2a3e8a" opacity="0.9"/><rect x="51.3" y="61.1" width="2.9" height="2.5" fill="#2a3e8a" opacity="0.9"/><rect x="19.2" y="36" width="2.7" height="1.8" fill="#2a3e8a" opacity="0.9"/><rect x="83.3" y="41.1" width="5" height="2.2" fill="#2a3e8a" opacity="0.9"/></svg><span class="lb">Analysis...</span></div>
<div class="cell alt" style="left:947px;top:2px"><svg class="th" style="left:21px;top:6px;background:#1e3e8c" width="29" height="61" viewBox="0 0 100 100" preserveAspectRatio="none"><rect x="6" y="0" width="22" height="8" fill="#f0f2f8"/><rect x="38" y="0" width="22" height="8" fill="#f0f2f8"/><rect x="70" y="0" width="24" height="8" fill="#f0f2f8"/><ellipse cx="18" cy="18" rx="12" ry="7" fill="#f4f6fa"/><rect x="6" y="18" width="24" height="12" fill="#f4f6fa"/><rect x="12" y="21" width="10" height="7" fill="#6f86b8" opacity="0.7"/><ellipse cx="50" cy="18" rx="12" ry="7" fill="#f4f6fa"/><rect x="38" y="18" width="24" height="12" fill="#f4f6fa"/><rect x="44" y="21" width="10" height="7" fill="#6f86b8" opacity="0.7"/><ellipse cx="82" cy="18" rx="12" ry="7" fill="#f4f6fa"/><rect x="70" y="18" width="24" height="12" fill="#f4f6fa"/><rect x="76" y="21" width="10" height="7" fill="#6f86b8" opacity="0.7"/><ellipse cx="18" cy="48" rx="12" ry="7" fill="#f4f6fa"/><rect x="6" y="48" width="24" height="14" fill="#f4f6fa"/><rect x="12" y="51" width="10" height="9" fill="#6f86b8" opacity="0.7"/><ellipse cx="50" cy="48" rx="12" ry="7" fill="#f4f6fa"/><rect x="38" y="48" width="24" height="14" fill="#f4f6fa"/><rect x="44" y="51" width="10" height="9" fill="#6f86b8" opacity="0.7"/><ellipse cx="82" cy="48" rx="12" ry="7" fill="#f4f6fa"/><rect x="70" y="48" width="24" height="14" fill="#f4f6fa"/><rect x="76" y="51" width="10" height="9" fill="#6f86b8" opacity="0.7"/><ellipse cx="18" cy="77" rx="12" ry="7" fill="#f4f6fa"/><rect x="6" y="77" width="24" height="17" fill="#f4f6fa"/><rect x="12" y="80" width="10" height="12" fill="#6f86b8" opacity="0.7"/><ellipse cx="50" cy="77" rx="12" ry="7" fill="#f4f6fa"/><rect x="38" y="77" width="24" height="17" fill="#f4f6fa"/><rect x="44" y="80" width="10" height="12" fill="#6f86b8" opacity="0.7"/><ellipse cx="82" cy="77" rx="12" ry="7" fill="#f4f6fa"/><rect x="70" y="77" width="24" height="17" fill="#f4f6fa"/><rect x="76" y="80" width="10" height="12" fill="#6f86b8" opacity="0.7"/></svg><span class="lb">Analysis...</span></div>
<div class="cell" style="left:1018px;top:2px"><svg class="th" style="left:5px;top:15px;background:#ffffff" width="61" height="43" viewBox="0 0 100 100" preserveAspectRatio="none"><polygon points="14,58 50,22 92,46 56,88" fill="#f1f2f0"/><polygon points="20,62 34,50 50,70 36,82" fill="#b4d09c" opacity="0.8"/><rect x="46" y="34" width="12" height="30" fill="#d0d4d8"/><rect x="60" y="40" width="8" height="24" fill="#c4ccd4"/><rect x="78" y="6" width="6" height="14" fill="#c8c8c8"/><rect x="88" y="6" width="6" height="14" fill="#c8c8c8"/><rect x="78" y="26" width="6" height="14" fill="#d0d0d0"/><rect x="88" y="26" width="6" height="14" fill="#d0d0d0"/><rect x="40" y="92" width="22" height="3" fill="#aaa"/></svg><span class="lb">Analysis...</span></div>
<div class="cell alt" style="left:1090px;top:2px"><svg class="th" style="left:5px;top:9px;background:#1d3c8a" width="61" height="54" viewBox="0 0 100 100" preserveAspectRatio="none"><ellipse cx="27" cy="38" rx="7" ry="7" fill="#eef1f8"/><rect x="20" y="38" width="14" height="24" fill="#eef1f8"/><ellipse cx="49" cy="30" rx="8" ry="8" fill="#eef1f8"/><rect x="41" y="30" width="16" height="34" fill="#eef1f8"/><ellipse cx="72" cy="38" rx="7" ry="7" fill="#eef1f8"/><rect x="65" y="38" width="14" height="24" fill="#eef1f8"/><rect x="84" y="38" width="7" height="16" fill="#dfe5f2"/><rect x="6" y="40" width="7" height="14" fill="#dfe5f2"/><polygon points="0,74 30,62 40,66 0,96" fill="#f4f6fb"/><polygon points="44,66 58,64 44,100 16,100" fill="#f4f6fb"/><polygon points="66,64 80,64 100,84 100,100 70,100" fill="#f4f6fb"/><rect x="44" y="36" width="9" height="22" fill="#7f95c4" opacity="0.7"/><rect x="23" y="42" width="8" height="16" fill="#7f95c4" opacity="0.7"/><rect x="68" y="42" width="8" height="16" fill="#7f95c4" opacity="0.7"/><rect x="80" y="70" width="14" height="8" fill="#1d3c8a"/><rect x="34" y="86" width="10" height="8" fill="#1d3c8a"/></svg><span class="lb">Analysis...</span></div>
<div class="cell" style="left:1161px;top:2px"><svg class="th" style="left:5px;top:15px;background:#ffffff" width="61" height="42" viewBox="0 0 100 100" preserveAspectRatio="none"><ellipse cx="33" cy="34" rx="5" ry="7" fill="#2a4a96"/><rect x="28" y="34" width="10" height="30" fill="#2a4a96"/><ellipse cx="33" cy="37" rx="3.4" ry="5" fill="#fff"/><rect x="29.6" y="37" width="6.8" height="27" fill="#fff"/><ellipse cx="47" cy="30" rx="6" ry="8" fill="#2a4a96"/><rect x="41" y="30" width="12" height="36" fill="#2a4a96"/><ellipse cx="47" cy="33" rx="4.4" ry="6" fill="#fff"/><rect x="42.6" y="33" width="8.8" height="33" fill="#fff"/><ellipse cx="61" cy="34" rx="5" ry="7" fill="#2a4a96"/><rect x="56" y="34" width="10" height="30" fill="#2a4a96"/><ellipse cx="61" cy="37" rx="3.4" ry="5" fill="#fff"/><rect x="57.6" y="37" width="6.8" height="27" fill="#fff"/><rect x="16" y="52" width="8" height="12" fill="#4a66a8"/><rect x="72" y="56" width="10" height="8" fill="#5a74b0"/><rect x="44" y="50" width="5" height="14" fill="#8a9cc8"/></svg><span class="lb">Analysis...</span></div>
<div class="cell alt" style="left:1232px;top:2px"><svg class="th" style="left:5px;top:12px;background:#ffffff" width="62" height="49" viewBox="0 0 100 100" preserveAspectRatio="none"><rect x="0" y="86" width="100" height="14" fill="#cdd5de"/><polygon points="10,70 30,40 52,36 60,58 40,84 12,84" fill="#e4e8ec"/><rect x="16" y="50" width="22" height="30" fill="#d4dae2"/><rect x="60" y="40" width="22" height="34" fill="#e0e4ea"/><rect x="70" y="30" width="3" height="40" fill="#b8c0cc"/><rect x="22" y="60" width="10" height="4" fill="#5a6a8a"/><rect x="50" y="10" width="4" height="3" fill="#333"/></svg><span class="lb">Analysis...</span></div>
<div class="cell" style="left:1304px;top:2px"><svg class="th" style="left:14px;top:6px;background:#ffffff" width="44" height="61" viewBox="0 0 100 100" preserveAspectRatio="none"><polygon points="30,36 62,30 78,56 70,72 34,74 22,60" fill="#f3f3f3"/><polyline points="50,30.879999999999995 74,41.44 50,52 26,41.44" fill="none" stroke="#e0e0e0" stroke-width="1" vector-effect="non-scaling-stroke"/><polyline points="26,41.44 26,59.92 50,70.48 50,52" fill="none" stroke="#e0e0e0" stroke-width="1" vector-effect="non-scaling-stroke"/><polyline points="74,41.44 74,59.92 50,70.48" fill="none" stroke="#e0e0e0" stroke-width="1" vector-effect="non-scaling-stroke"/></svg><span class="lb">Analysis...</span></div>
<div class="cell alt" style="left:1375px;top:2px"><svg class="th" style="left:13px;top:6px;background:#f6f6f6" width="46" height="61" viewBox="0 0 100 100" preserveAspectRatio="none"><ellipse cx="30" cy="20" rx="26" ry="8" fill="#eaeaea"/><ellipse cx="72" cy="14" rx="22" ry="7" fill="#ececec"/><ellipse cx="60" cy="34" rx="30" ry="9" fill="#e8e8e8"/><rect x="4" y="58" width="92" height="20" fill="#e2e2e2"/><ellipse cx="26" cy="62" rx="16" ry="9" fill="#d2d2d2"/><ellipse cx="78" cy="64" rx="14" ry="10" fill="#d6d6d6"/><rect x="10" y="74" width="80" height="4" fill="#c8c8c8"/><rect x="4" y="82" width="92" height="14" fill="#f0f0f0"/></svg><span class="lb">Analysis...</span></div>
<div class="cell" style="left:1447px;top:2px"><svg class="th" style="left:5px;top:13px;background:#ffffff" width="61" height="46" viewBox="0 0 100 100" preserveAspectRatio="none"><rect x="20" y="8" width="4" height="6" fill="#666"/><rect x="32" y="8" width="4" height="6" fill="#666"/><rect x="44" y="8" width="4" height="6" fill="#666"/><rect x="56" y="8" width="4" height="6" fill="#666"/><rect x="68" y="8" width="4" height="6" fill="#666"/><rect x="80" y="8" width="4" height="6" fill="#666"/><rect x="12" y="34" width="76" height="3" fill="#555"/><rect x="12" y="39" width="76" height="2" fill="#999"/><rect x="84" y="16" width="10" height="1.5" fill="#888"/><rect x="84" y="22" width="10" height="1.5" fill="#888"/><polygon points="0,86 20,80 80,80 100,86 100,94 0,94" fill="#0e0e0e"/><rect x="22" y="72" width="58" height="10" fill="#444"/><rect x="30" y="86" width="12" height="5" fill="#ddd"/><rect x="56" y="86" width="12" height="5" fill="#ddd"/></svg><span class="lb">Analysis...</span></div>
<div class="cell alt" style="left:1518px;top:2px"><svg class="th" style="left:5px;top:13px;background:#ffffff" width="61" height="47" viewBox="0 0 100 100" preserveAspectRatio="none"><polygon points="28,40 36,32 78,74 70,82" fill="#fce8ec"/><line x1="30" y1="36" x2="76" y2="80" stroke="#ee8aa0" stroke-width="1.5" vector-effect="non-scaling-stroke"/><ellipse cx="42" cy="36" rx="5" ry="6" fill="#e86080"/><ellipse cx="62" cy="60" rx="4" ry="5" fill="#ec7090"/><rect x="8" y="38" width="14" height="1.5" fill="#e890a4"/><rect x="8" y="64" width="14" height="1.5" fill="#e890a4"/><rect x="8" y="84" width="10" height="1.5" fill="#e890a4"/><rect x="80" y="30" width="12" height="1.5" fill="#eea0b0"/><rect x="80" y="52" width="12" height="1.5" fill="#eea0b0"/><rect x="80" y="70" width="12" height="1.5" fill="#eea0b0"/></svg><span class="lb">Analysis...</span></div>
<div class="cell" style="left:1589px;top:2px"><svg class="th" style="left:10px;top:6px;background:#ffffff" width="53" height="61" viewBox="0 0 100 100" preserveAspectRatio="none"><ellipse cx="56" cy="10" rx="10" ry="5" fill="#f29cb2"/><rect x="20" y="12" width="8" height="6" fill="#e46482"/><line x1="24" y1="14" x2="24" y2="92" stroke="#ee8ea6" stroke-width="1.4" vector-effect="non-scaling-stroke"/><polygon points="28,36 46,28 70,58 82,92 70,94 52,60" fill="#fbe4ea"/><ellipse cx="62" cy="40" rx="5" ry="4" fill="#e25878"/><ellipse cx="46" cy="60" rx="6" ry="4" fill="#ec7c96"/><ellipse cx="70" cy="74" rx="6" ry="4" fill="#e4607e"/><ellipse cx="38" cy="82" rx="5" ry="3" fill="#f09cb0"/><ellipse cx="72" cy="92" rx="5" ry="3" fill="#e87490"/><rect x="78" y="22" width="14" height="1.5" fill="#ee9eb2"/><rect x="80" y="44" width="14" height="1.5" fill="#ee9eb2"/><rect x="82" y="62" width="12" height="1.5" fill="#ee9eb2"/><rect x="84" y="80" width="10" height="1.5" fill="#ee9eb2"/><rect x="30" y="22" width="30" height="1.5" fill="#f0a8ba"/><rect x="6" y="46" width="14" height="1.5" fill="#ee9eb2"/></svg><span class="lb">Analysis...</span></div>
<div class="cell" style="left:19px;top:90px"><svg class="th" style="left:5px;top:21px;background:#ffffff" width="61" height="30" viewBox="0 0 100 100" preserveAspectRatio="none"><rect x="4" y="74" width="92" height="12" fill="#cfcfcf"/><polygon points="14,74 14,36 34,36 34,28 70,28 70,34 90,34 90,74" fill="#b4b4b4"/><rect x="40" y="34" width="28" height="40" fill="#a4a4a4"/><ellipse cx="10" cy="66" rx="5" ry="12" fill="#8c9a7c"/><rect x="4" y="86" width="92" height="3" fill="#e4e4e4"/></svg><span class="lb">Analysis...</span></div>
<div class="cell alt" style="left:90px;top:90px"><svg class="th" style="left:5px;top:15px;background:#ffffff" width="61" height="43" viewBox="0 0 100 100" preserveAspectRatio="none"><polygon points="0,20 22,0 46,0 0,62" fill="#b8b8b8"/><polygon points="0,30 30,2 40,2 0,52" fill="#ececec"/><polygon points="20,64 60,40 96,62 56,90" fill="#c8c8c8"/><rect x="50" y="22" width="3" height="26" fill="#111"/><polygon points="50,22 62,14 64,17 52,25" fill="#111"/><polygon points="46,56 70,44 78,60 54,74" fill="#555"/><polygon points="18,66 34,70 60,96 30,90" fill="#0a0a0a"/><rect x="4" y="4" width="8" height="6" fill="#666"/><rect x="16" y="4" width="8" height="6" fill="#666"/><rect x="28" y="4" width="8" height="6" fill="#666"/><rect x="40" y="4" width="8" height="6" fill="#666"/><rect x="74" y="72" width="20" height="20" fill="#e2e2e2"/><rect x="2" y="80" width="16" height="16" fill="#d4d4d4"/></svg><span class="lb">Analysis...</span></div>
<div class="cell" style="left:162px;top:90px"><svg class="th" style="left:13px;top:6px;background:#ffffff" width="45" height="61" viewBox="0 0 100 100" preserveAspectRatio="none"><rect x="22" y="4" width="10" height="12" fill="#ececec"/><polygon points="34,18 58,12 66,24 42,32" fill="#c8c8c8"/><polygon points="40,34 56,30 60,48 46,52" fill="#9a9a9a"/><line x1="30" y1="10" x2="10" y2="70" stroke="#dcdcdc" stroke-width="1" vector-effect="non-scaling-stroke"/><line x1="50" y1="50" x2="70" y2="94" stroke="#e0e0e0" stroke-width="1" vector-effect="non-scaling-stroke"/><polygon points="36,76 56,70 60,90 40,96" fill="#eef0d8"/><rect x="78" y="36" width="3" height="3" fill="#bbb"/><rect x="72" y="78" width="3" height="3" fill="#ccc"/></svg><span class="lb">Analysis...</span></div>
<div class="cell alt" style="left:233px;top:90px"><svg class="th" style="left:5px;top:6px;background:#ffffff" width="61" height="61" viewBox="0 0 100 100" preserveAspectRatio="none"><polygon points="36,24 46,18 50,52 40,58" fill="#f0c8c0" opacity="0.8"/><polygon points="40,46 74,30 84,50 50,70" fill="#e6d8d8" opacity="0.8"/><polygon points="46,60 70,50 74,86 52,96" fill="#f4d8d0" opacity="0.8"/><line x1="18" y1="16" x2="48" y2="40" stroke="#d8b0a8" stroke-width="1" vector-effect="non-scaling-stroke"/><line x1="64" y1="18" x2="64" y2="50" stroke="#c8a8a0" stroke-width="1.2" vector-effect="non-scaling-stroke"/><line x1="34" y1="8" x2="36" y2="50" stroke="#d0a8a0" stroke-width="1" vector-effect="non-scaling-stroke"/></svg><span class="lb">Analysis...</span></div>
<div class="cell" style="left:304px;top:90px"><svg class="th" style="left:11px;top:6px;background:#ffffff" width="51" height="61" viewBox="0 0 100 100" preserveAspectRatio="none"><rect x="38" y="8" width="30" height="18" fill="#f0f0f0"/><polygon points="52,34 84,30 88,44 56,50" fill="#e8e8e8"/><polygon points="14,50 40,46 44,58 18,62" fill="#ececec"/><polygon points="16,72 40,68 44,82 20,86" fill="#e2e2e2"/><rect x="60" y="60" width="24" height="8" fill="#dedede"/><line x1="44" y1="10" x2="44" y2="40" stroke="#d4d4d4" stroke-width="1" vector-effect="non-scaling-stroke"/></svg><span class="lb">Analysis...</span></div>
<div class="cell alt" style="left:376px;top:90px"><svg class="th" style="left:4px;top:16px;background:#ffffff" width="62" height="41" viewBox="0 0 100 100" preserveAspectRatio="none"><polygon points="4,72 40,20 70,8 100,14 100,60 60,84 20,96 4,90" fill="#e9efe9"/><polygon points="36,28 66,12 96,20 96,46 60,66 36,56" fill="#c4d8c8"/><polygon points="8,74 30,58 52,70 30,90" fill="#b4ccb8"/><rect x="50" y="26" width="10" height="22" fill="#8fb09a"/><rect x="70" y="20" width="10" height="22" fill="#a8c4ae"/><rect x="20" y="70" width="8" height="10" fill="#8fb09a"/><rect x="84" y="30" width="8" height="16" fill="#d8a898"/></svg><span class="lb">Analysis...</span></div>
<div class="cell" style="left:447px;top:90px"><svg class="th" style="left:6px;top:6px;background:#ffffff" width="60" height="61" viewBox="0 0 100 100" preserveAspectRatio="none"><rect x="52" y="6" width="3" height="30" fill="#888"/><rect x="56" y="14" width="40" height="5" fill="#c4c4c4"/><rect x="22" y="40" width="76" height="2" fill="#777"/><rect x="22" y="48" width="76" height="1.5" fill="#aaa"/><rect x="22" y="40" width="2" height="50" fill="#888"/><polygon points="24,18 40,10 44,14 28,22" fill="#bdbdbd"/><rect x="38" y="30" width="4" height="14" fill="#777"/><rect x="26" y="84" width="70" height="2" fill="#999"/><rect x="6" y="90" width="92" height="1.5" fill="#bbb"/><rect x="30" y="70" width="8" height="14" fill="#c8c8c8"/><rect x="58" y="72" width="22" height="12" fill="#d4d4d4"/><rect x="84" y="66" width="5" height="18" fill="#aaa"/><line x1="6" y1="56" x2="96" y2="56" stroke="#dedede" stroke-width="0.8" vector-effect="non-scaling-stroke"/><line x1="6" y1="62" x2="96" y2="62" stroke="#dedede" stroke-width="0.8" vector-effect="non-scaling-stroke"/><line x1="6" y1="68" x2="96" y2="68" stroke="#dedede" stroke-width="0.8" vector-effect="non-scaling-stroke"/><line x1="6" y1="76" x2="96" y2="76" stroke="#dedede" stroke-width="0.8" vector-effect="non-scaling-stroke"/></svg><span class="lb">Analysis...</span></div>
<div class="cell alt" style="left:519px;top:90px"><svg class="th" style="left:5px;top:14px;background:#ffffff" width="61" height="45" viewBox="0 0 100 100" preserveAspectRatio="none"><polygon points="44,20 96,0 100,0 100,20 60,44 48,36" fill="#a8a8a8"/><polygon points="50,30 100,14 100,30 62,52" fill="#8c8c8c"/><polygon points="0,44 34,54 100,100 0,100" fill="#080808"/><polygon points="36,54 50,46 100,74 100,98" fill="#e4e4e4"/><rect x="8" y="24" width="8" height="10" fill="#555"/><rect x="22" y="26" width="6" height="10" fill="#444"/><rect x="4" y="4" width="20" height="3" fill="#aaa"/><line x1="2" y1="62" x2="40" y2="62" stroke="#2a2a2a" stroke-width="0.8" vector-effect="non-scaling-stroke"/><line x1="2" y1="70" x2="40" y2="70" stroke="#2a2a2a" stroke-width="0.8" vector-effect="non-scaling-stroke"/><line x1="2" y1="78" x2="40" y2="78" stroke="#2a2a2a" stroke-width="0.8" vector-effect="non-scaling-stroke"/><line x1="2" y1="86" x2="40" y2="86" stroke="#2a2a2a" stroke-width="0.8" vector-effect="non-scaling-stroke"/></svg><span class="lb">Analysis...</span></div>
<div class="cell" style="left:590px;top:90px"><svg class="th" style="left:5px;top:15px;background:#ffffff" width="61" height="43" viewBox="0 0 100 100" preserveAspectRatio="none"><rect x="50" y="2" width="48" height="96" fill="#cdcdf0"/><rect x="54" y="6" width="18" height="22" fill="#b4b4ea"/><rect x="74" y="30" width="20" height="26" fill="#bcbcee"/><rect x="54" y="60" width="22" height="30" fill="#b0b0e8"/><rect x="58" y="24" width="6" height="8" fill="#2a2ea0"/><rect x="80" y="70" width="12" height="18" fill="#c4c4f0"/><rect x="8" y="70" width="36" height="4" fill="#ee50d0"/><rect x="8" y="88" width="36" height="4" fill="#ee50d0"/><ellipse cx="16" cy="32" rx="3" ry="8" fill="#d040b8"/><rect x="12" y="48" width="2" height="20" fill="#e880d8"/><rect x="30" y="22" width="10" height="2" fill="#e880d8"/><rect x="30" y="30" width="10" height="2" fill="#e880d8"/><ellipse cx="32" cy="58" rx="4" ry="5" fill="#f0a0e0"/></svg><span class="lb">Analysis...</span></div>
<div class="cell alt" style="left:661px;top:90px"><svg class="th" style="left:14px;top:6px;background:#ebebef" width="44" height="61" viewBox="0 0 100 100" preserveAspectRatio="none"><rect x="0" y="62" width="100" height="38" fill="#e4e4e8"/><rect x="28" y="18" width="44" height="64" fill="#d6d4fa"/><rect x="28" y="18" width="44" height="64" fill="none" stroke="#746ce4" stroke-width="1.5" vector-effect="non-scaling-stroke"/><rect x="28" y="40" width="44" height="1.5" fill="#746ce4"/><rect x="28" y="62" width="44" height="1.5" fill="#746ce4"/><rect x="10" y="64" width="18" height="12" fill="#f6f6f8"/><line x1="72" y1="50" x2="100" y2="42" stroke="#d0d0d8" stroke-width="1" vector-effect="non-scaling-stroke"/></svg><span class="lb">Analysis...</span></div>
<div class="cell" style="left:733px;top:90px"><svg class="th" style="left:19px;top:6px;background:#e5e5e5" width="32" height="61" viewBox="0 0 100 100" preserveAspectRatio="none"><polygon points="20,10 60,2 84,10 84,22 44,30 20,22" fill="#fafafa"/><polyline points="14,52 50,44 86,58 50,68 14,52" fill="none" stroke="#111" stroke-width="1.6" vector-effect="non-scaling-stroke"/><polyline points="14,52 14,64 50,80 86,70 86,58" fill="none" stroke="#111" stroke-width="1.6" vector-effect="non-scaling-stroke"/><polyline points="14,76 50,68 86,82 50,92 14,76" fill="none" stroke="#111" stroke-width="1.6" vector-effect="non-scaling-stroke"/><polyline points="14,76 14,86 50,100 86,92 86,82" fill="none" stroke="#111" stroke-width="1.6" vector-effect="non-scaling-stroke"/><rect x="30" y="30" width="8" height="8" fill="#333"/><rect x="60" y="34" width="10" height="6" fill="#333"/><rect x="40" y="56" width="14" height="3" fill="#111"/></svg><span class="lb">Analysis...</span></div>
<div class="cell alt" style="left:804px;top:90px"><svg class="th" style="left:5px;top:15px;background:#eef2f4" width="62" height="43" viewBox="0 0 100 100" preserveAspectRatio="none"><polygon points="14,60 40,24 74,10 100,20 100,66 60,90 20,84" fill="#dfe8ec"/><polygon points="34,30 50,22 60,62 44,72" fill="#a9bfca"/><polygon points="56,22 72,14 80,50 64,60" fill="#b8cad4"/><polygon points="78,14 96,20 98,52 84,48" fill="#c4d4dc"/><polygon points="14,64 40,56 56,80 28,86" fill="#bccdd6"/></svg><span class="lb">Analysis...</span></div>
<div class="cell" style="left:875px;top:90px"><svg class="th" style="left:6px;top:12px;background:#ffffff" width="61" height="48" viewBox="0 0 100 100" preserveAspectRatio="none"><ellipse cx="34" cy="70" rx="30" ry="18" fill="#ffffff"/><polyline points="6,76 10,64 30,58 52,70 44,86 18,90 6,76" fill="none" stroke="#444" stroke-width="1.2" vector-effect="non-scaling-stroke"/><polygon points="36,54 56,42 84,58 62,72" fill="#111"/><ellipse cx="58" cy="56" rx="7" ry="5" fill="#fff"/><rect x="46" y="60" width="18" height="28" fill="#b8b8b8"/><polygon points="56,12 88,26 88,52 56,38" fill="#f2f2f2"/><rect x="68" y="10" width="2" height="34" fill="#333"/><rect x="78" y="20" width="3" height="12" fill="#111"/><rect x="82" y="30" width="6" height="4" fill="#111"/></svg><span class="lb">Analysis...</span></div>
<div class="cell alt" style="left:947px;top:90px"><svg class="th" style="left:5px;top:15px;background:#ffffff" width="61" height="43" viewBox="0 0 100 100" preserveAspectRatio="none"><polygon points="20,56 70,40 98,66 44,90" fill="#d8d8d8"/><rect x="6" y="30" width="3" height="22" fill="#111"/><rect x="20" y="24" width="2" height="16" fill="#222"/><rect x="30" y="10" width="2" height="16" fill="#333"/><rect x="52" y="12" width="3" height="36" fill="#0a0a0a"/><rect x="56" y="14" width="2" height="28" fill="#222"/><rect x="76" y="36" width="2.5" height="22" fill="#111"/><rect x="82" y="38" width="2" height="22" fill="#111"/><rect x="88" y="42" width="2.5" height="24" fill="#111"/><polygon points="54,46 90,62 90,66 54,50" fill="#111"/><ellipse cx="40" cy="62" rx="7" ry="5" fill="#f6f6f6"/><ellipse cx="60" cy="72" rx="7" ry="5" fill="#f6f6f6"/><rect x="66" y="72" width="16" height="18" fill="#c8c8c8"/></svg><span class="lb">Analysis...</span></div>
<div class="cell" style="left:1018px;top:90px"><svg class="th" style="left:6px;top:6px;background:#ffffff" width="60" height="61" viewBox="0 0 100 100" preserveAspectRatio="none"><ellipse cx="52" cy="80" rx="32" ry="14" fill="#b8b8b8"/><polyline points="20,76 40,56 76,58 88,78 70,94 34,94 20,76" fill="none" stroke="#333" stroke-width="1" vector-effect="non-scaling-stroke"/><rect x="40" y="40" width="20" height="22" fill="#0c0c0c"/><polygon points="34,32 58,40 58,44 34,36" fill="#0c0c0c"/><rect x="62" y="18" width="3" height="22" fill="#111"/><rect x="90" y="34" width="5" height="30" fill="#0c0c0c"/><rect x="70" y="44" width="5" height="8" fill="#222"/><rect x="82" y="46" width="3" height="10" fill="#222"/><ellipse cx="24" cy="50" rx="2" ry="2" fill="#111"/><ellipse cx="14" cy="64" rx="2" ry="2" fill="#111"/><ellipse cx="30" cy="68" rx="2" ry="2" fill="#111"/><ellipse cx="20" cy="80" rx="3" ry="3" fill="#111"/><ellipse cx="44" cy="86" rx="4" ry="3" fill="#fff"/><ellipse cx="64" cy="76" rx="4" ry="3" fill="#fff"/></svg><span class="lb">Analysis...</span></div>
<div class="cell alt" style="left:1090px;top:90px"><svg class="th" style="left:5px;top:6px;background:#ffffff" width="60" height="61" viewBox="0 0 100 100" preserveAspectRatio="none"><polygon points="40,10 66,4 80,12 54,20" fill="#f0f0f0"/><polygon points="38,22 66,14 82,24 54,34" fill="#ebebeb"/><polygon points="16,74 60,54 96,70 52,94" fill="#e8e8e8"/><ellipse cx="50" cy="58" rx="12" ry="8" fill="#d8d8d8"/><ellipse cx="66" cy="64" rx="10" ry="6" fill="#cfcfcf"/><rect x="60" y="60" width="8" height="6" fill="#888"/><polygon points="4,84 40,96 40,100 4,90" fill="#f0f0f0"/></svg><span class="lb">Analysis...</span></div>
<div class="cell" style="left:1161px;top:90px"><svg class="th" style="left:14px;top:6px;background:#ffffff" width="43" height="61" viewBox="0 0 100 100" preserveAspectRatio="none"><polygon points="10,6 36,2 46,8 20,14" fill="#4a4a4a"/><polygon points="14,20 40,14 70,26 44,34" fill="#666"/><polygon points="16,38 34,34 46,40 28,46" fill="#555"/><polygon points="50,36 84,40 84,48 50,46" fill="#d4d4d4"/><polygon points="8,72 50,62 92,86 50,98" fill="#777"/><polygon points="20,76 48,70 70,82 44,90" fill="#444"/><line x1="70" y1="40" x2="90" y2="70" stroke="#ccc" stroke-width="0.8" vector-effect="non-scaling-stroke"/><rect x="62" y="52" width="28" height="1" fill="#ccc"/></svg><span class="lb">Analysis...</span></div>
<div class="cell alt" style="left:1232px;top:90px"><svg class="th" style="left:5px;top:18px;background:#86cce2" width="62" height="36" viewBox="0 0 100 100" preserveAspectRatio="none"><ellipse cx="20" cy="14" rx="14" ry="5" fill="#dff2f8"/><ellipse cx="60" cy="24" rx="18" ry="5" fill="#dff2f8"/><ellipse cx="88" cy="10" rx="10" ry="4" fill="#dff2f8"/><rect x="0" y="48" width="100" height="34" fill="#f2ece0"/><rect x="4" y="50" width="10" height="30" fill="#d88c6a"/><rect x="16" y="56" width="8" height="24" fill="#e8b090"/><rect x="48" y="40" width="16" height="40" fill="#f8f8f4"/><rect x="52" y="46" width="8" height="4" fill="#8a9aa8"/><rect x="52" y="56" width="8" height="4" fill="#8a9aa8"/><rect x="70" y="54" width="10" height="26" fill="#e09878"/><rect x="84" y="58" width="12" height="22" fill="#c8d8a0"/><rect x="28" y="60" width="14" height="20" fill="#e4c8a8"/><rect x="0" y="78" width="100" height="6" fill="#586848"/><rect x="0" y="84" width="100" height="16" fill="#060606"/></svg><span class="lb">Analysis...</span></div>
<div class="cell" style="left:1304px;top:90px"><svg class="th" style="left:5px;top:20px;background:#ffffff" width="61" height="32" viewBox="0 0 100 100" preserveAspectRatio="none"><polygon points="14,44 36,44 36,78 14,78" fill="#9a9a9a"/><polygon points="36,44 56,30 56,78 36,78" fill="#6e6e6e"/><polygon points="22,44 44,30 56,30 36,44" fill="#c4c4c4"/><rect x="56" y="50" width="30" height="4" fill="#bbb"/><rect x="80" y="30" width="8" height="44" fill="#d8d8d8"/><ellipse cx="12" cy="60" rx="6" ry="6" fill="#333"/><ellipse cx="86" cy="56" rx="5" ry="6" fill="#444"/><rect x="8" y="78" width="84" height="5" fill="#b4b4b4"/><rect x="20" y="84" width="60" height="4" fill="#dcdcdc"/></svg><span class="lb">Analysis...</span></div>
<div class="cell alt" style="left:1375px;top:90px"><svg class="th" style="left:13px;top:6px;background:#ffffff" width="46" height="61" viewBox="0 0 100 100" preserveAspectRatio="none"><rect x="32" y="4" width="22" height="22" fill="#ececec"/><polygon points="30,48 62,40 78,52 78,72 46,82 30,70" fill="#d8d8d8"/><rect x="34" y="52" width="16" height="18" fill="#888"/><rect x="56" y="50" width="8" height="10" fill="#222"/><polygon points="24,78 70,66 92,84 44,98" fill="#c4c4c4"/><rect x="12" y="62" width="6" height="10" fill="#111"/><rect x="64" y="84" width="8" height="7" fill="#111"/><rect x="84" y="72" width="4" height="8" fill="#111"/><rect x="14" y="88" width="3" height="9" fill="#111"/><rect x="22" y="92" width="3" height="8" fill="#111"/><rect x="30" y="92" width="3" height="8" fill="#111"/><line x1="30" y1="76" x2="66" y2="76" stroke="#555" stroke-width="0.8" vector-effect="non-scaling-stroke"/><line x1="30" y1="80" x2="66" y2="80" stroke="#555" stroke-width="0.8" vector-effect="non-scaling-stroke"/><line x1="30" y1="84" x2="66" y2="84" stroke="#555" stroke-width="0.8" vector-effect="non-scaling-stroke"/><line x1="30" y1="88" x2="66" y2="88" stroke="#555" stroke-width="0.8" vector-effect="non-scaling-stroke"/></svg><span class="lb">Analysis...</span></div>
<div class="cell" style="left:1447px;top:90px"><svg class="th" style="left:5px;top:17px;background:#ffffff" width="61" height="39" viewBox="0 0 100 100" preserveAspectRatio="none"><polygon points="10,56 40,30 86,44 60,76" fill="#f2f2f2"/><polyline points="30,46 46,32 76,42 62,60 30,46" fill="none" stroke="#666" stroke-width="1.2" vector-effect="non-scaling-stroke"/><rect x="40" y="40" width="10" height="14" fill="#bbb"/><rect x="54" y="42" width="10" height="14" fill="#999"/><polyline points="10,56 40,30 86,44 60,76 10,56" fill="none" stroke="#d0d0d0" stroke-width="0.8" vector-effect="non-scaling-stroke"/></svg><span class="lb">Analysis...</span></div>
<div class="cell alt" style="left:1518px;top:90px"><svg class="th" style="left:8px;top:6px;background:#ffffff" width="55" height="61" viewBox="0 0 100 100" preserveAspectRatio="none"><polygon points="8,4 40,0 44,14 12,18" fill="#ececec"/><polygon points="14,26 44,22 74,38 44,46" fill="#e6e6e6"/><polygon points="10,50 40,44 96,86 70,92" fill="#eeeeee"/><rect x="12" y="60" width="14" height="18" fill="#dcdcdc"/><rect x="52" y="80" width="14" height="10" fill="#d8d8d8"/><line x1="8" y1="30" x2="8" y2="90" stroke="#dadada" stroke-width="1" vector-effect="non-scaling-stroke"/><line x1="44" y1="46" x2="44" y2="70" stroke="#dadada" stroke-width="1" vector-effect="non-scaling-stroke"/></svg><span class="lb">Analysis...</span></div>
<div class="cell" style="left:1589px;top:90px"><svg class="th" style="left:16px;top:6px;background:#eef2f0" width="41" height="61" viewBox="0 0 100 100" preserveAspectRatio="none"><polygon points="30,36 56,28 78,38 52,48" fill="#c0e4dc"/><ellipse cx="54" cy="38" rx="8" ry="4" fill="#eef8f4"/><polygon points="16,60 30,56 70,82 56,88" fill="#d4dcd8"/><polygon points="56,80 86,72 90,90 62,98" fill="#dce2de"/><rect x="0" y="0" width="100" height="4" fill="#f6f8f6"/></svg><span class="lb">Analysis...</span></div>
<div class="cell" style="left:19px;top:179px"><svg class="th" style="left:16px;top:6px;background:#c99a3c" width="39" height="61" viewBox="0 0 100 100" preserveAspectRatio="none"><polygon points="18,24 50,12 80,26 48,40" fill="#fffdf6"/><polygon points="18,24 48,40 48,44 18,28" fill="#e8dcc0"/><polygon points="48,40 80,26 80,30 48,44" fill="#d8c8a0"/><polygon points="16,64 50,50 84,66 50,82" fill="#fffdf6"/><polygon points="30,64 50,56 70,66 50,76" fill="#c99a3c"/><polygon points="38,64 50,60 62,66 50,72" fill="#fffdf6"/><rect x="44" y="90" width="14" height="1.5" fill="#8a6a20"/></svg><span class="lb">Analysis...</span></div>
<div class="cell alt" style="left:90px;top:179px"><svg class="th" style="left:5px;top:19px;background:#f3f3f3" width="61" height="34" viewBox="0 0 100 100" preserveAspectRatio="none"><ellipse cx="24" cy="40" rx="18" ry="22" fill="#e6e6e6"/><ellipse cx="56" cy="28" rx="16" ry="16" fill="#e8e8e8"/><ellipse cx="82" cy="56" rx="14" ry="24" fill="#e4e4e4"/><polygon points="44,60 70,40 84,52 58,76" fill="#d4d4d4"/><rect x="56" y="52" width="14" height="10" fill="#c4c4c4"/><ellipse cx="10" cy="80" rx="10" ry="14" fill="#eaeaea"/></svg><span class="lb">Analysis...</span></div>
<div class="cell" style="left:162px;top:179px"><svg class="th" style="left:5px;top:15px;background:#ffffff" width="61" height="43" viewBox="0 0 100 100" preserveAspectRatio="none"><rect x="60" y="8" width="18" height="26" fill="none" stroke="#555" stroke-width="1.4" vector-effect="non-scaling-stroke"/><rect x="62" y="16" width="5" height="8" fill="#d03030"/><rect x="54" y="50" width="14" height="22" fill="none" stroke="#333" stroke-width="1.6" vector-effect="non-scaling-stroke"/><rect x="68" y="46" width="4" height="10" fill="#d03030"/><polyline points="16,78 20,64 40,64 40,72 48,78" fill="none" stroke="#666" stroke-width="1.2" vector-effect="non-scaling-stroke"/><rect x="22" y="80" width="4" height="4" fill="#d03030"/><rect x="70" y="36" width="12" height="2" fill="#c04040"/><rect x="44" y="84" width="8" height="2" fill="#888"/></svg><span class="lb">Analysis...</span></div>
<div class="cell alt" style="left:233px;top:179px"><svg class="th" style="left:5px;top:6px;background:#ffffff" width="61" height="61" viewBox="0 0 100 100" preserveAspectRatio="none"><polygon points="10,46 54,16 90,36 46,70" fill="#9a9a9a"/><polygon points="10,46 46,70 46,76 10,52" fill="#666"/><polygon points="46,70 90,36 90,42 46,76" fill="#7c7c7c"/><polygon points="12,54 44,78 44,92 12,70" fill="#dedede"/><polygon points="44,78 84,46 84,60 44,92" fill="#eeeeee"/><rect x="46" y="38" width="10" height="8" fill="#e8e8e8"/><line x1="12" y1="70" x2="12" y2="54" stroke="#333" stroke-width="1" vector-effect="non-scaling-stroke"/><line x1="44" y1="92" x2="44" y2="78" stroke="#333" stroke-width="1" vector-effect="non-scaling-stroke"/><line x1="10" y1="76" x2="40" y2="96" stroke="#555" stroke-width="0.8" vector-effect="non-scaling-stroke"/><polygon points="70,66 82,60 86,78 76,84" fill="#c8c8c8"/></svg><span class="lb">Analysis...</span></div>
<div class="cell" style="left:304px;top:179px"><svg class="th" style="left:12px;top:6px;background:#ffffff" width="48" height="61" viewBox="0 0 100 100" preserveAspectRatio="none"><polyline points="24,10 50,4 74,14 48,22 24,10" fill="none" stroke="#dadada" stroke-width="1" vector-effect="non-scaling-stroke"/><polygon points="50,40 70,36 80,46 60,52" fill="#d0d0d0"/><polyline points="20,60 50,52 84,70 54,80 20,60" fill="none" stroke="#dcdcdc" stroke-width="1" vector-effect="non-scaling-stroke"/><polygon points="16,82 40,76 44,84 20,90" fill="#e4eeee"/><rect x="22" y="84" width="18" height="3" fill="#3a7a80"/><rect x="50" y="92" width="20" height="3" fill="#3a7a80"/><line x1="30" y1="20" x2="20" y2="70" stroke="#e4e4e4" stroke-width="0.8" vector-effect="non-scaling-stroke"/><line x1="70" y1="20" x2="84" y2="70" stroke="#e4e4e4" stroke-width="0.8" vector-effect="non-scaling-stroke"/></svg><span class="lb">Analysis...</span></div>
<div class="cell alt" style="left:376px;top:179px"><svg class="th" style="left:4px;top:19px;background:#ffffff" width="62" height="34" viewBox="0 0 100 100" preserveAspectRatio="none"><polyline points="20,40 50,16 84,30 54,56 20,40" fill="none" stroke="#dcdcdc" stroke-width="1" vector-effect="non-scaling-stroke"/><polyline points="20,60 46,42 70,60 44,80 20,60" fill="none" stroke="#dedede" stroke-width="1" vector-effect="non-scaling-stroke"/><polygon points="64,40 94,52 90,70 60,56" fill="#f0f0f0"/><rect x="4" y="92" width="60" height="2" fill="#ddd"/></svg><span class="lb">Analysis...</span></div>
<div class="cell" style="left:447px;top:179px"><svg class="th" style="left:5px;top:18px;background:#ffffff" width="61" height="37" viewBox="0 0 100 100" preserveAspectRatio="none"><polygon points="32,30 46,8 72,20 74,60 54,92 36,70" fill="#92a878"/><polygon points="40,34 52,18 66,28 62,56 50,72 42,58" fill="#dfe8d4"/><polygon points="36,68 54,92 74,60 74,66 54,98 36,74" fill="#d8c070"/><rect x="44" y="30" width="8" height="8" fill="#56703c"/><rect x="56" y="44" width="8" height="8" fill="#56703c"/><rect x="48" y="56" width="6" height="8" fill="#7a9458"/></svg><span class="lb">Analysis...</span></div>
<div class="cell alt" style="left:519px;top:179px"><svg class="th" style="left:5px;top:6px;background:#ffffff" width="61" height="61" viewBox="0 0 100 100" preserveAspectRatio="none"><polyline points="14,56 34,36 70,52 88,70 60,90 14,56" fill="none" stroke="#f0f0f0" stroke-width="1" vector-effect="non-scaling-stroke"/><ellipse cx="62" cy="44" rx="8" ry="6" fill="#f1f1f1"/><line x1="60" y1="90" x2="96" y2="100" stroke="#ececec" stroke-width="1" vector-effect="non-scaling-stroke"/></svg><span class="lb">Analysis...</span></div>
<div class="cell" style="left:590px;top:179px"><svg class="th" style="left:5px;top:15px;background:#ffffff" width="61" height="43" viewBox="0 0 100 100" preserveAspectRatio="none"><polyline points="24,86 58,14 68,10 70,54 30,92 24,86" fill="none" stroke="#dcdcdc" stroke-width="1" vector-effect="non-scaling-stroke"/><polygon points="40,60 56,36 62,48 48,70" fill="#e4e4e4"/><rect x="44" y="52" width="10" height="6" fill="#c8c8c8"/><rect x="48" y="40" width="8" height="5" fill="#cfcfcf"/></svg><span class="lb">Analysis...</span></div>
<div class="cell alt" style="left:661px;top:179px"><svg class="th" style="left:5px;top:15px;background:#ffffff" width="61" height="43" viewBox="0 0 100 100" preserveAspectRatio="none"><polygon points="4,36 50,10 96,60 52,90" fill="#f4f4f4"/><polyline points="4,36 50,10 96,60 52,90 4,36" fill="none" stroke="#d4d4d4" stroke-width="1" vector-effect="non-scaling-stroke"/><rect x="26" y="30" width="10" height="12" fill="#aaa"/><ellipse cx="42" cy="22" rx="4" ry="5" fill="#999"/><polygon points="52,36 74,46 70,56 48,46" fill="#bdbdbd"/><polygon points="58,50 80,60 76,68 56,58" fill="#c8c8c8"/></svg><span class="lb">Analysis...</span></div>
<div class="cell" style="left:733px;top:179px"><svg class="th" style="left:5px;top:16px;background:#ffffff" width="61" height="40" viewBox="0 0 100 100" preserveAspectRatio="none"><polygon points="28,22 44,10 52,18 36,32" fill="#1a1a1a"/><polygon points="30,66 46,56 52,64 38,76" fill="#111"/><polygon points="10,50 40,40 60,56 30,70" fill="#f0f0f0"/><polygon points="52,40 84,30 96,44 64,58" fill="#eeeeee"/><rect x="40" y="16" width="8" height="4" fill="#fff"/></svg><span class="lb">Analysis...</span></div>
<div class="cell alt" style="left:804px;top:179px"><svg class="th" style="left:15px;top:6px;background:#ffffff" width="41" height="61" viewBox="0 0 100 100" preserveAspectRatio="none"><polyline points="30,12 60,6 84,14 54,22 30,12" fill="none" stroke="#dcdcdc" stroke-width="1" vector-effect="non-scaling-stroke"/><polyline points="26,36 56,28 84,40 54,50 26,36" fill="none" stroke="#dddddd" stroke-width="1" vector-effect="non-scaling-stroke"/><polyline points="30,60 60,52 84,64 54,74 30,60" fill="none" stroke="#d8d8d8" stroke-width="1" vector-effect="non-scaling-stroke"/><rect x="40" y="78" width="30" height="14" fill="#ededed"/><rect x="60" y="40" width="10" height="8" fill="#ccc"/></svg><span class="lb">Analysis...</span></div>
<div class="cell" style="left:875px;top:179px"><svg class="th" style="left:6px;top:15px;background:#ffffff" width="61" height="43" viewBox="0 0 100 100" preserveAspectRatio="none"><polygon points="4,50 14,44 30,60 20,68" fill="#0c0c0c"/><polygon points="10,40 44,22 46,26 12,44" fill="#222"/><polygon points="78,36 90,42 92,54 80,48" fill="#111"/><rect x="66" y="52" width="9" height="7" fill="none" stroke="#111" stroke-width="1.6" vector-effect="non-scaling-stroke"/><rect x="70" y="24" width="4" height="4" fill="#333"/><polyline points="30,60 70,30" fill="none" stroke="#e0e0e0" stroke-width="1" vector-effect="non-scaling-stroke"/></svg><span class="lb">Analysis...</span></div>
<div class="cell alt" style="left:947px;top:179px"><svg class="th" style="left:5px;top:19px;background:#ffffff" width="61" height="34" viewBox="0 0 100 100" preserveAspectRatio="none"><polygon points="40,62 52,50 60,60 48,74" fill="#e4e4e4"/><rect x="46" y="22" width="6" height="6" fill="#ddd"/><rect x="50" y="36" width="8" height="5" fill="#d4dcc8"/><rect x="4" y="88" width="14" height="2" fill="#ddd"/></svg><span class="lb">Analysis...</span></div>
<div class="cell" style="left:1018px;top:179px"><svg class="th" style="left:5px;top:15px;background:#ffffff" width="61" height="43" viewBox="0 0 100 100" preserveAspectRatio="none"><polyline points="22,90 22,30 44,8 64,22 64,90" fill="none" stroke="#b4b4b4" stroke-width="1.2" vector-effect="non-scaling-stroke"/><rect x="22" y="32" width="42" height="1.5" fill="#bbb"/><rect x="22" y="52" width="42" height="1.5" fill="#bbb"/><rect x="22" y="70" width="42" height="1.5" fill="#bbb"/><rect x="42" y="10" width="1.5" height="80" fill="#c4c4c4"/><ellipse cx="58" cy="24" rx="5" ry="8" fill="#bcd09c"/><ellipse cx="70" cy="56" rx="6" ry="8" fill="#c8d8b0"/><rect x="16" y="78" width="72" height="14" fill="#e4e6e2"/><rect x="44" y="56" width="14" height="12" fill="#d8d8d8"/><line x1="64" y1="22" x2="64" y2="4" stroke="#d0d0d0" stroke-width="0.8" vector-effect="non-scaling-stroke"/></svg><span class="lb">Analysis...</span></div>
<div class="cell alt" style="left:1090px;top:179px"><svg class="th" style="left:5px;top:13px;background:#e3e7e5" width="61" height="46" viewBox="0 0 100 100" preserveAspectRatio="none"><polygon points="58,20 66,12 82,16 82,30 68,36 58,30" fill="#0a0a0a"/><polygon points="20,74 36,68 38,72 22,78" fill="#0a0a0a"/><polyline points="52,16 52,70 84,62 84,20" fill="none" stroke="#cfd4d2" stroke-width="1" vector-effect="non-scaling-stroke"/><rect x="50" y="60" width="24" height="18" fill="#d4dad8"/><ellipse cx="50" cy="72" rx="3" ry="5" fill="#889"/></svg><span class="lb">Analysis...</span></div>
<div class="cell" style="left:1161px;top:179px"><svg class="th" style="left:5px;top:12px;background:#ffffff" width="61" height="48" viewBox="0 0 100 100" preserveAspectRatio="none"><polyline points="22,40 46,22 52,28 28,46" fill="none" stroke="#999" stroke-width="1.4" vector-effect="non-scaling-stroke"/><polygon points="18,62 40,54 60,74 38,84" fill="#f2f2f2"/><polyline points="40,58 84,40" fill="none" stroke="#ccc" stroke-width="1" vector-effect="non-scaling-stroke"/><polyline points="44,70 90,52" fill="none" stroke="#ccc" stroke-width="1" vector-effect="non-scaling-stroke"/><polyline points="48,80 92,62" fill="none" stroke="#d4d4d4" stroke-width="1" vector-effect="non-scaling-stroke"/><rect x="44" y="60" width="30" height="2" fill="#aaa"/></svg><span class="lb">Analysis...</span></div>
<div class="cell alt" style="left:1232px;top:179px"><svg class="th" style="left:5px;top:6px;background:#ffffff" width="62" height="61" viewBox="0 0 100 100" preserveAspectRatio="none"><ellipse cx="30" cy="14" rx="24" ry="12" fill="#e8e8e8"/><ellipse cx="84" cy="30" rx="14" ry="20" fill="#e4e4e4"/><ellipse cx="20" cy="70" rx="16" ry="18" fill="#ececec"/><polygon points="60,44 96,22 100,30 66,54" fill="#0c0c0c"/><polygon points="10,80 60,60 70,72 20,94" fill="#f2f2f2"/><polyline points="10,80 60,60 70,72 20,94 10,80" fill="none" stroke="#999" stroke-width="1" vector-effect="non-scaling-stroke"/><ellipse cx="70" cy="80" rx="12" ry="8" fill="#dcdcdc"/><rect x="64" y="76" width="14" height="3" fill="#666"/></svg><span class="lb">Analysis...</span></div>
<div class="cell" style="left:1304px;top:179px"><svg class="th" style="left:5px;top:31px;background:#ffffff" width="61" height="10" viewBox="0 0 100 100" preserveAspectRatio="none"><line x1="22" y1="30" x2="34" y2="70" stroke="#888" stroke-width="1.4" vector-effect="non-scaling-stroke"/><line x1="44" y1="30" x2="54" y2="70" stroke="#aaa" stroke-width="1.2" vector-effect="non-scaling-stroke"/><line x1="62" y1="34" x2="70" y2="66" stroke="#888" stroke-width="1.2" vector-effect="non-scaling-stroke"/><line x1="80" y1="40" x2="86" y2="64" stroke="#999" stroke-width="1.2" vector-effect="non-scaling-stroke"/></svg><span class="lb">Analysis...</span></div>
<div class="cell alt" style="left:1375px;top:179px"><svg class="th" style="left:5px;top:16px;background:#ffffff" width="61" height="41" viewBox="0 0 100 100" preserveAspectRatio="none"><polyline points="4,12 54,12 54,22 40,22 40,66 4,66" fill="none" stroke="#999" stroke-width="1.2" vector-effect="non-scaling-stroke"/><line x1="22" y1="30" x2="40" y2="60" stroke="#888" stroke-width="1" vector-effect="non-scaling-stroke"/><rect x="4" y="36" width="8" height="3" fill="#777"/><ellipse cx="66" cy="42" rx="8" ry="12" fill="#e8e8e8"/><ellipse cx="82" cy="50" rx="6" ry="10" fill="#ececec"/><rect x="4" y="80" width="92" height="1.5" fill="#bbb"/><rect x="4" y="90" width="92" height="1.5" fill="#ccc"/><rect x="16" y="22" width="2" height="44" fill="#bbb"/><rect x="30" y="22" width="2" height="44" fill="#ccc"/></svg><span class="lb">Analysis...</span></div>
<div class="cell" style="left:1447px;top:179px"><svg class="th" style="left:5px;top:13px;background:#ffffff" width="61" height="46" viewBox="0 0 100 100" preserveAspectRatio="none"><line x1="2" y1="10" x2="36" y2="10" stroke="#777" stroke-width="1" vector-effect="non-scaling-stroke"/><line x1="2" y1="22" x2="36" y2="22" stroke="#777" stroke-width="1" vector-effect="non-scaling-stroke"/><line x1="2" y1="34" x2="36" y2="34" stroke="#777" stroke-width="1" vector-effect="non-scaling-stroke"/><line x1="2" y1="46" x2="36" y2="46" stroke="#777" stroke-width="1" vector-effect="non-scaling-stroke"/><line x1="2" y1="58" x2="36" y2="58" stroke="#777" stroke-width="1" vector-effect="non-scaling-stroke"/><line x1="2" y1="70" x2="36" y2="70" stroke="#777" stroke-width="1" vector-effect="non-scaling-stroke"/><line x1="6" y1="4" x2="6" y2="72" stroke="#777" stroke-width="1" vector-effect="non-scaling-stroke"/><line x1="14" y1="4" x2="14" y2="72" stroke="#777" stroke-width="1" vector-effect="non-scaling-stroke"/><line x1="22" y1="4" x2="22" y2="72" stroke="#777" stroke-width="1" vector-effect="non-scaling-stroke"/><line x1="30" y1="4" x2="30" y2="72" stroke="#777" stroke-width="1" vector-effect="non-scaling-stroke"/><rect x="36" y="16" width="40" height="2" fill="#222"/><rect x="30" y="44" width="50" height="2.5" fill="#333"/><rect x="2" y="72" width="70" height="2" fill="#444"/><polygon points="4,78 14,78 9,88" fill="#555"/><polygon points="18,78 28,78 23,88" fill="#555"/><polygon points="32,78 42,78 37,88" fill="#555"/><rect x="50" y="50" width="30" height="12" fill="#c8c8c8"/><rect x="44" y="74" width="50" height="8" fill="#d8d8d8"/><rect x="40" y="92" width="56" height="2" fill="#aaa"/><rect x="78" y="6" width="14" height="30" fill="#ececec"/></svg><span class="lb">Analysis...</span></div>
<div class="cell alt" style="left:1518px;top:179px"><svg class="th" style="left:5px;top:6px;background:#ffffff" width="61" height="60" viewBox="0 0 100 100" preserveAspectRatio="none"><polyline points="44,30 60,26 66,56 76,84 50,90 34,60 44,30" fill="none" stroke="#d8d8d8" stroke-width="1" vector-effect="non-scaling-stroke"/><polygon points="42,40 62,34 68,62 48,68" fill="#e6e6e6"/><rect x="50" y="44" width="10" height="16" fill="#c4c4c4"/><rect x="14" y="30" width="76" height="1" fill="#e4e4e4"/><rect x="14" y="88" width="76" height="1" fill="#e4e4e4"/><line x1="32" y1="10" x2="32" y2="96" stroke="#ececec" stroke-width="0.8" vector-effect="non-scaling-stroke"/><line x1="84" y1="10" x2="84" y2="96" stroke="#ececec" stroke-width="0.8" vector-effect="non-scaling-stroke"/><polygon points="22,70 42,64 44,76 24,82" fill="#ededed"/></svg><span class="lb">Analysis...</span></div>
<div class="cell" style="left:1589px;top:179px"><svg class="th" style="left:12px;top:6px;background:#e7e7e7" width="48" height="61" viewBox="0 0 100 100" preserveAspectRatio="none"><rect x="64.6" y="67.1" width="4.5" height="3.3" fill="#fbfbfb"/><rect x="49.5" y="61.9" width="7.6" height="4.9" fill="#fbfbfb"/><rect x="31.7" y="73.7" width="5.7" height="3" fill="#fbfbfb"/><rect x="8.6" y="26.3" width="6.9" height="2.7" fill="#fbfbfb"/><rect x="39.2" y="28" width="4.6" height="2.6" fill="#fbfbfb"/><rect x="19.7" y="50.5" width="6.4" height="3" fill="#fbfbfb"/><rect x="65.9" y="90.7" width="8" height="2.8" fill="#fbfbfb"/><rect x="27.6" y="11.4" width="7.1" height="3.6" fill="#fbfbfb"/><rect x="21.1" y="37.7" width="5.4" height="3.4" fill="#fbfbfb"/><rect x="16.3" y="89.2" width="6.2" height="2.9" fill="#fbfbfb"/><rect x="23.3" y="86.2" width="7.4" height="3" fill="#fbfbfb"/><rect x="34.7" y="4.9" width="7.6" height="3.2" fill="#fbfbfb"/><rect x="15.1" y="53.8" width="6.2" height="4" fill="#fbfbfb"/><rect x="33" y="36" width="7.7" height="3.5" fill="#fbfbfb"/><rect x="55.2" y="72.1" width="5" height="3.1" fill="#fbfbfb"/><rect x="11.8" y="30.2" width="6.7" height="4.9" fill="#fbfbfb"/><rect x="59.5" y="17.4" width="5.6" height="3.2" fill="#fbfbfb"/><rect x="35.2" y="57.4" width="4.2" height="2.7" fill="#fbfbfb"/><rect x="42.5" y="16.1" width="7.7" height="2.9" fill="#fbfbfb"/><rect x="40.4" y="5.4" width="4.8" height="4.4" fill="#fbfbfb"/><rect x="83.5" y="87.8" width="7.1" height="4.8" fill="#fbfbfb"/><rect x="54.1" y="51.2" width="7.2" height="3.2" fill="#fbfbfb"/><rect x="48" y="19.3" width="5.6" height="2.6" fill="#fbfbfb"/><rect x="83.3" y="72.7" width="6.9" height="3" fill="#fbfbfb"/><rect x="59.5" y="52.4" width="4.6" height="4.8" fill="#fbfbfb"/><rect x="55.4" y="16.4" width="5.8" height="3.5" fill="#fbfbfb"/><rect x="55.6" y="67.8" width="3.9" height="2.2" fill="#9a9a9a"/><rect x="50.9" y="77.8" width="2.1" height="1.9" fill="#9a9a9a"/><rect x="21.6" y="35.4" width="2.7" height="2.4" fill="#9a9a9a"/><rect x="39.3" y="80.4" width="3.1" height="2.7" fill="#9a9a9a"/><rect x="77.1" y="44.9" width="2.3" height="1.8" fill="#9a9a9a"/><rect x="66.2" y="79.5" width="3.3" height="1.6" fill="#9a9a9a"/><rect x="7" y="87.7" width="3.2" height="2.7" fill="#9a9a9a"/><rect x="75.2" y="72.1" width="3.6" height="1.5" fill="#9a9a9a"/><rect x="64.8" y="33.5" width="2.1" height="2" fill="#9a9a9a"/><rect x="20.5" y="25.5" width="3.5" height="2" fill="#9a9a9a"/></svg><span class="lb">Analysis...</span></div>
<div class="cell" style="left:19px;top:267px"><svg class="th" style="left:5px;top:13px;background:#ffffff" width="61" height="46" viewBox="0 0 100 100" preserveAspectRatio="none"><rect x="3" y="10" width="14" height="9" fill="#0c0c0c"/><polygon points="28,24 48,10 52,14 32,28" fill="#666"/><rect x="4" y="28" width="20" height="1.5" fill="#999"/><rect x="4" y="36" width="16" height="1.5" fill="#aaa"/><rect x="4" y="44" width="18" height="1.5" fill="#aaa"/><polyline points="6,60 18,80 30,60 42,80 54,60" fill="none" stroke="#555" stroke-width="1.2" vector-effect="non-scaling-stroke"/><rect x="64" y="20" width="28" height="1.5" fill="#999"/><rect x="66" y="30" width="20" height="1.5" fill="#bbb"/><rect x="66" y="38" width="20" height="1.5" fill="#bbb"/><rect x="66" y="46" width="20" height="1.5" fill="#bbb"/><rect x="68" y="58" width="14" height="3" fill="#555"/><rect x="56" y="78" width="40" height="1.5" fill="#888"/><rect x="56" y="86" width="40" height="1.5" fill="#aaa"/><polygon points="4,90 14,82 16,86 6,94" fill="#222"/></svg><span class="lb">Analysis...</span></div>
<div class="cell alt" style="left:90px;top:267px"><svg class="th" style="left:5px;top:8px;background:#ffffff" width="61" height="57" viewBox="0 0 100 100" preserveAspectRatio="none"><polygon points="22,30 40,18 62,60 46,78" fill="#ececec"/><polygon points="42,70 56,40 66,44 66,78 52,92" fill="#e2e2e2"/><polyline points="22,30 40,18 62,60 46,78 22,30" fill="none" stroke="#cfcfcf" stroke-width="1" vector-effect="non-scaling-stroke"/><rect x="14" y="16" width="10" height="1" fill="#ccc"/><rect x="70" y="18" width="12" height="1" fill="#ccc"/><rect x="12" y="60" width="10" height="1" fill="#ccc"/><rect x="72" y="70" width="12" height="1" fill="#ccc"/><rect x="44" y="96" width="10" height="1" fill="#ccc"/><polygon points="50,56 60,50 62,76 52,84" fill="#cdcdcd"/></svg><span class="lb">Analysis...</span></div>
<div class="cell" style="left:162px;top:267px"><svg class="th" style="left:5px;top:9px;background:#ffffff" width="61" height="55" viewBox="0 0 100 100" preserveAspectRatio="none"><polygon points="18,4 32,2 32,8 24,9 24,16 18,17" fill="#d48a2c"/><polygon points="26,26 38,20 38,28 30,32" fill="#d48a2c"/><polygon points="4,58 22,46 26,52 16,60 16,70 4,76" fill="#d48a2c"/><polygon points="20,50 50,36 56,42 26,58" fill="#e8e2c8"/><polygon points="22,60 48,48 52,54 26,68" fill="#c8dcdc"/><ellipse cx="16" cy="86" rx="10" ry="7" fill="#f4dcc0"/><ellipse cx="30" cy="80" rx="8" ry="6" fill="#f6e4cc"/><rect x="62" y="4" width="30" height="1.5" fill="#444"/><rect x="62" y="20" width="32" height="1.5" fill="#888"/><rect x="62" y="36" width="30" height="1.5" fill="#888"/><rect x="64" y="66" width="14" height="1.5" fill="#666"/><rect x="64" y="78" width="10" height="1.2" fill="#aaa"/><rect x="64" y="83" width="10" height="1.2" fill="#aaa"/><rect x="64" y="88" width="10" height="1.2" fill="#aaa"/><rect x="64" y="93" width="10" height="1.2" fill="#aaa"/></svg><span class="lb">Analysis...</span></div>
<div class="cell alt" style="left:233px;top:267px"><svg class="th" style="left:5px;top:10px;background:#ffffff" width="61" height="53" viewBox="0 0 100 100" preserveAspectRatio="none"><polyline points="8,40 8,22 16,12 24,22 24,40" fill="none" stroke="#222" stroke-width="1.3" vector-effect="non-scaling-stroke"/><polygon points="30,30 56,18 70,30 44,44" fill="#e0e0e0"/><polygon points="20,52 60,34 64,40 24,60" fill="#555"/><polygon points="24,60 64,40 70,70 34,94" fill="#c4c4c4"/><polygon points="40,74 56,66 62,82 46,92" fill="#2a2a2a"/><polygon points="58,10 96,20 96,24 58,14" fill="#666"/><rect x="72" y="30" width="12" height="14" fill="#c8c8c8"/><polyline points="76,62 76,50 84,44 92,50 92,62" fill="none" stroke="#222" stroke-width="1.3" vector-effect="non-scaling-stroke"/><polyline points="84,86 84,70 92,64 98,70 98,86" fill="none" stroke="#222" stroke-width="1.3" vector-effect="non-scaling-stroke"/><polygon points="6,64 22,74 20,78 4,68" fill="#aaa"/><rect x="4" y="94" width="8" height="2" fill="#666"/><rect x="30" y="44" width="10" height="8" fill="#222"/><rect x="46" y="50" width="8" height="8" fill="#444"/></svg><span class="lb">Analysis...</span></div>
<div class="cell" style="left:304px;top:267px"><svg class="th" style="left:6px;top:12px;background:#ffffff" width="61" height="48" viewBox="0 0 100 100" preserveAspectRatio="none"><rect x="2" y="8" width="44" height="36" fill="#f2f2f2"/><polygon points="2,24 16,18 30,26 46,20 46,40 2,40" fill="#0c0c0c"/><rect x="52" y="8" width="46" height="36" fill="#f4f4f4"/><polygon points="52,8 66,36 98,40 98,44 52,44" fill="#111"/><polygon points="70,30 98,26 98,40 70,40" fill="#222"/><rect x="2" y="54" width="44" height="40" fill="#efefef"/><polygon points="2,66 20,60 46,68 46,84 30,90 2,92" fill="#161616"/><ellipse cx="22" cy="74" rx="8" ry="4" fill="#bbb"/><rect x="52" y="54" width="46" height="40" fill="#f3f3f3"/><polygon points="52,80 70,68 98,74 98,88 52,90" fill="#d4d4d4"/></svg><span class="lb">Analysis...</span></div>
<div class="cell alt" style="left:376px;top:267px"><svg class="th" style="left:15px;top:6px;background:#ffffff" width="41" height="61" viewBox="0 0 100 100" preserveAspectRatio="none"><rect x="42" y="0" width="32" height="22" fill="#0c0c0c"/><rect x="38" y="22" width="44" height="26" fill="#0c0c0c"/><rect x="42" y="48" width="34" height="10" fill="#141414"/><rect x="40" y="58" width="52" height="12" fill="#0c0c0c"/><rect x="42" y="70" width="36" height="8" fill="#1c1c1c"/><rect x="40" y="80" width="46" height="16" fill="#0c0c0c"/><rect x="8" y="78" width="84" height="1.2" fill="#999"/><rect x="48" y="12" width="18" height="2" fill="#888"/><rect x="48" y="30" width="22" height="2" fill="#777"/><rect x="46" y="64" width="30" height="2" fill="#666"/></svg><span class="lb">Analysis...</span></div>
<div class="cell" style="left:447px;top:267px"><svg class="th" style="left:23px;top:6px;background:#ffffff" width="25" height="61" viewBox="0 0 100 100" preserveAspectRatio="none"><rect x="12" y="3" width="56" height="24" fill="#0a0a0a"/><rect x="12" y="27" width="40" height="12" fill="#111"/><rect x="12" y="39" width="64" height="20" fill="#0a0a0a"/><rect x="12" y="59" width="76" height="12" fill="#0c0c0c"/><rect x="16" y="71" width="60" height="12" fill="#0e0e0e"/><rect x="8" y="86" width="84" height="10" fill="#0a0a0a"/><rect x="20" y="10" width="30" height="2" fill="#666"/><rect x="20" y="46" width="40" height="2" fill="#666"/><rect x="14" y="90" width="60" height="2" fill="#777"/><line x1="24" y1="62" x2="80" y2="56" stroke="#aaa" stroke-width="1" vector-effect="non-scaling-stroke"/></svg><span class="lb">Analysis...</span></div>
<div class="cell alt" style="left:519px;top:267px"><svg class="th" style="left:11px;top:6px;background:#ffffff" width="49" height="61" viewBox="0 0 100 100" preserveAspectRatio="none"><rect x="12" y="0" width="58" height="19" fill="#bdbdbd"/><rect x="12" y="10" width="14" height="9" fill="#0a0a0a"/><rect x="26" y="19" width="58" height="12" fill="#0a0a0a"/><rect x="14" y="31" width="64" height="10" fill="#0c0c0c"/><rect x="6" y="44" width="88" height="14" fill="#0a0a0a"/><rect x="6" y="58" width="88" height="9" fill="#0e0e0e"/><rect x="40" y="67" width="50" height="4" fill="#0a0a0a"/><line x1="24" y1="38" x2="72" y2="28" stroke="#ddd" stroke-width="1.2" vector-effect="non-scaling-stroke"/><rect x="74" y="42" width="8" height="3" fill="#fff"/><rect x="0" y="78.5" width="100" height="1.5" fill="#333"/><rect x="10" y="82" width="80" height="14" fill="#0a0a0a"/><rect x="16" y="86" width="60" height="2" fill="#888"/><rect x="10" y="52" width="4" height="3" fill="#eee"/><rect x="30" y="74" width="40" height="3" fill="#555"/></svg><span class="lb">Analysis...</span></div>
<div class="cell" style="left:590px;top:267px"><svg class="th" style="left:11px;top:6px;background:#ffffff" width="49" height="61" viewBox="0 0 100 100" preserveAspectRatio="none"><rect x="12" y="0" width="58" height="19" fill="#bdbdbd"/><rect x="12" y="10" width="14" height="9" fill="#0a0a0a"/><rect x="26" y="19" width="58" height="12" fill="#0a0a0a"/><rect x="14" y="31" width="64" height="10" fill="#0c0c0c"/><rect x="6" y="44" width="88" height="14" fill="#0a0a0a"/><rect x="6" y="58" width="88" height="9" fill="#0e0e0e"/><rect x="40" y="67" width="50" height="4" fill="#0a0a0a"/><line x1="24" y1="38" x2="72" y2="28" stroke="#ddd" stroke-width="1.2" vector-effect="non-scaling-stroke"/><rect x="74" y="42" width="8" height="3" fill="#fff"/><rect x="0" y="78.5" width="100" height="1.5" fill="#333"/><rect x="10" y="82" width="80" height="14" fill="#0a0a0a"/><rect x="16" y="86" width="60" height="2" fill="#888"/><rect x="10" y="52" width="4" height="3" fill="#eee"/><rect x="30" y="74" width="40" height="3" fill="#555"/></svg><span class="lb">Analysis...</span></div>
<div class="cell alt" style="left:661px;top:267px"><svg class="th" style="left:10px;top:6px;background:#ffffff" width="51" height="61" viewBox="0 0 100 100" preserveAspectRatio="none"><rect x="30" y="8" width="28" height="8" fill="#333"/><rect x="28" y="16" width="34" height="62" fill="#7c7c7c"/><rect x="32" y="20" width="8" height="56" fill="#2a2a2a"/><rect x="44" y="18" width="14" height="6" fill="#222"/><rect x="44" y="28" width="14" height="6" fill="#444"/><rect x="44" y="38" width="16" height="10" fill="#222"/><rect x="44" y="52" width="14" height="8" fill="#555"/><rect x="44" y="64" width="14" height="10" fill="#1a1a1a"/><rect x="62" y="20" width="12" height="1.5" fill="#999"/><rect x="62" y="30" width="14" height="1.5" fill="#999"/><rect x="62" y="40" width="12" height="1.5" fill="#999"/><rect x="4" y="10" width="12" height="2" fill="#777"/><rect x="4" y="24" width="8" height="1.5" fill="#aaa"/><rect x="4" y="40" width="8" height="1.5" fill="#aaa"/><rect x="4" y="56" width="8" height="1.5" fill="#aaa"/><rect x="4" y="70" width="8" height="1.5" fill="#aaa"/><rect x="26" y="78" width="70" height="4" fill="#333"/><rect x="58" y="84" width="38" height="3" fill="#888"/><rect x="0" y="90" width="100" height="10" fill="#080808"/><rect x="56" y="92" width="30" height="3" fill="#ccc"/></svg><span class="lb">Analysis...</span></div>
<div class="cell" style="left:733px;top:267px"><svg class="th" style="left:5px;top:21px;background:#ffffff" width="61" height="30" viewBox="0 0 100 100" preserveAspectRatio="none"><rect x="5" y="36" width="5" height="20" fill="#555"/><ellipse cx="12" cy="44" rx="4" ry="10" fill="#333"/><rect x="14" y="56" width="4" height="26" fill="#888"/><rect x="60" y="18" width="28" height="12" fill="#888"/><rect x="62" y="34" width="24" height="14" fill="#555"/><rect x="60" y="52" width="28" height="12" fill="#777"/><rect x="62" y="68" width="26" height="14" fill="#999"/><rect x="50" y="24" width="8" height="2" fill="#bbb"/><rect x="50" y="44" width="8" height="2" fill="#bbb"/><rect x="50" y="64" width="8" height="2" fill="#bbb"/><rect x="24" y="50" width="16" height="2" fill="#ddd"/></svg><span class="lb">Analysis...</span></div>
<div class="cell alt" style="left:804px;top:267px"><svg class="th" style="left:26px;top:6px;background:#c6c6c6" width="20" height="61" viewBox="0 0 100 100" preserveAspectRatio="none"><rect x="0" y="0" width="100" height="14" fill="#9c9c9c"/><polygon points="40,6 100,0 100,30 50,34" fill="#777"/><rect x="0" y="36" width="100" height="3" fill="#555"/><rect x="10" y="42" width="80" height="18" fill="#ddd"/><rect x="0" y="62" width="100" height="3" fill="#666"/><rect x="0" y="68" width="60" height="20" fill="#aaa"/><rect x="60" y="70" width="40" height="26" fill="#8a8a8a"/><rect x="0" y="90" width="100" height="10" fill="#b4b4b4"/></svg><span class="lb">Analysis...</span></div>
<div class="cell" style="left:875px;top:267px"><svg class="th" style="left:20px;top:6px;background:#d2d2d2" width="32" height="61" viewBox="0 0 100 100" preserveAspectRatio="none"><polygon points="50,10 94,4 94,44 56,50" fill="#8c8c8c"/><polygon points="56,14 88,10 88,40 60,44" fill="#c8c8c8"/><polygon points="0,20 40,30 30,60 0,56" fill="#9c9c9c"/><polygon points="10,52 60,46 90,60 40,72" fill="#777"/><rect x="0" y="0" width="44" height="16" fill="#ececec"/><rect x="0" y="74" width="100" height="2" fill="#444"/><rect x="4" y="78" width="46" height="20" fill="#a8a8a8"/><rect x="52" y="78" width="44" height="20" fill="#dcdcdc"/><rect x="10" y="82" width="30" height="10" fill="#6c6c6c"/><rect x="60" y="60" width="30" height="12" fill="#eee"/><polygon points="44,0 60,0 50,12" fill="#555"/></svg><span class="lb">Analysis...</span></div>
<div class="cell alt" style="left:947px;top:267px"><svg class="th" style="left:5px;top:15px;background:#ffffff" width="61" height="43" viewBox="0 0 100 100" preserveAspectRatio="none"><polygon points="6,15 12,10 17,14 11,20" fill="#b0b0f0" opacity="0.85"/><polygon points="20,13 26,8 31,12 25,18" fill="#6c6ce0" opacity="0.85"/><polygon points="36,15 42,10 47,14 41,20" fill="#9c9cec" opacity="0.85"/><polygon points="52,17 58,12 63,16 57,22" fill="#b8b8f4" opacity="0.85"/><polygon points="70,11 76,6 81,10 75,16" fill="#5454d8" opacity="0.85"/><polygon points="84,17 90,12 95,16 89,22" fill="#8888e8" opacity="0.85"/><polygon points="8,37 14,32 19,36 13,42" fill="#c4c4f6" opacity="0.85"/><polygon points="22,37 28,32 33,36 27,42" fill="#8080e4" opacity="0.85"/><polygon points="38,35 44,30 49,34 43,40" fill="#7474e0" opacity="0.85"/><polygon points="56,37 62,32 67,36 61,42" fill="#9898ec" opacity="0.85"/><polygon points="72,39 78,34 83,38 77,44" fill="#a8a8f0" opacity="0.85"/><polygon points="86,35 92,30 97,34 91,40" fill="#c0c0f4" opacity="0.85"/><polygon points="6,59 12,54 17,58 11,64" fill="#9090e8" opacity="0.85"/><polygon points="22,61 28,56 33,60 27,66" fill="#6868dc" opacity="0.85"/><polygon points="38,61 44,56 49,60 43,66" fill="#b4b4f2" opacity="0.85"/><polygon points="54,59 60,54 65,58 59,64" fill="#5c5cd8" opacity="0.85"/><polygon points="70,61 76,56 81,60 75,66" fill="#8c8ce8" opacity="0.85"/><polygon points="86,59 92,54 97,58 91,64" fill="#7878e2" opacity="0.85"/><polygon points="8,81 14,76 19,80 13,86" fill="#bcbcf4" opacity="0.85"/><polygon points="22,83 28,78 33,82 27,88" fill="#a0a0ee" opacity="0.85"/><polygon points="38,81 44,76 49,80 43,86" fill="#7070e0" opacity="0.85"/><polygon points="54,83 60,78 65,82 59,88" fill="#9494ea" opacity="0.85"/><polygon points="70,81 76,76 81,80 75,86" fill="#acacf0" opacity="0.85"/><polygon points="86,81 92,76 97,80 91,86" fill="#6464dc" opacity="0.85"/></svg><span class="lb">Analysis...</span></div>
<div class="cell" style="left:1018px;top:267px"><svg class="th" style="left:5px;top:8px;background:#ffffff" width="61" height="56" viewBox="0 0 100 100" preserveAspectRatio="none"><polyline points="40,20 60,10 84,22 64,32 40,20" fill="none" stroke="#d8d8d8" stroke-width="1" vector-effect="non-scaling-stroke"/><polyline points="40,20 40,60" fill="none" stroke="#d8d8d8" stroke-width="1" vector-effect="non-scaling-stroke"/><polyline points="64,32 64,76" fill="none" stroke="#d4d4d4" stroke-width="1" vector-effect="non-scaling-stroke"/><polygon points="14,70 40,56 66,72 86,62 92,70 50,96 14,80" fill="#efefef"/><polygon points="30,58 50,48 70,60 50,72" fill="#e2e2e2"/><rect x="40" y="50" width="16" height="18" fill="#d8d8d8"/><line x1="14" y1="80" x2="14" y2="64" stroke="#e0e0e0" stroke-width="1" vector-effect="non-scaling-stroke"/><line x1="88" y1="74" x2="88" y2="50" stroke="#e4e4e4" stroke-width="1" vector-effect="non-scaling-stroke"/><rect x="52" y="56" width="6" height="12" fill="#c4c4c4"/></svg><span class="lb">Analysis...</span></div>
<div class="cell alt" style="left:1090px;top:267px"><svg class="th" style="left:5px;top:8px;background:#ffffff" width="61" height="56" viewBox="0 0 100 100" preserveAspectRatio="none"><polyline points="40,20 60,10 84,22 64,32 40,20" fill="none" stroke="#d8d8d8" stroke-width="1" vector-effect="non-scaling-stroke"/><polyline points="40,20 40,60" fill="none" stroke="#d8d8d8" stroke-width="1" vector-effect="non-scaling-stroke"/><polyline points="64,32 64,76" fill="none" stroke="#d4d4d4" stroke-width="1" vector-effect="non-scaling-stroke"/><polygon points="14,70 40,56 66,72 86,62 92,70 50,96 14,80" fill="#efefef"/><polygon points="30,58 50,48 70,60 50,72" fill="#e2e2e2"/><rect x="40" y="50" width="16" height="18" fill="#d8d8d8"/><line x1="14" y1="80" x2="14" y2="64" stroke="#e0e0e0" stroke-width="1" vector-effect="non-scaling-stroke"/><line x1="88" y1="74" x2="88" y2="50" stroke="#e4e4e4" stroke-width="1" vector-effect="non-scaling-stroke"/><rect x="52" y="56" width="6" height="12" fill="#c4c4c4"/><polyline points="38,12 60,4 84,14 62,22 38,12" fill="none" stroke="#dcdcdc" stroke-width="1" vector-effect="non-scaling-stroke"/></svg><span class="lb">Analysis...</span></div>
<div class="cell" style="left:1161px;top:267px"><svg class="th" style="left:5px;top:6px;background:#ffffff" width="61" height="61" viewBox="0 0 100 100" preserveAspectRatio="none"><rect x="0" y="0" width="100" height="12" fill="#d8d8d8"/><rect x="18" y="2" width="10" height="8" fill="#666"/><rect x="60" y="2" width="30" height="6" fill="#999"/><polygon points="0,18 12,20 18,50 0,52" fill="#0c0c0c"/><polygon points="36,34 74,22 84,50 46,62" fill="#ececec"/><polyline points="36,34 74,22 84,50 46,62 36,34" fill="none" stroke="#222" stroke-width="1.5" vector-effect="non-scaling-stroke"/><rect x="46" y="36" width="8" height="8" fill="#555"/><rect x="60" y="32" width="10" height="6" fill="#333"/><rect x="56" y="46" width="12" height="6" fill="#777"/><ellipse cx="36" cy="92" rx="12" ry="6" fill="#c4d0d0"/><rect x="4" y="58" width="14" height="12" fill="#888"/><rect x="70" y="66" width="10" height="16" fill="#222"/><rect x="20" y="70" width="4" height="12" fill="#111"/><rect x="84" y="76" width="12" height="10" fill="#999"/><ellipse cx="14" cy="86" rx="8" ry="6" fill="#bbb"/><rect x="56" y="78" width="10" height="5" fill="#444"/><rect x="24" y="20" width="6" height="10" fill="#333"/><rect x="88" y="30" width="8" height="20" fill="#ccc"/><rect x="85.9" y="77.3" width="3.4" height="1.6" fill="#444"/><rect x="38.1" y="66.3" width="2.1" height="1.5" fill="#444"/><rect x="44.7" y="74.7" width="2.2" height="2" fill="#444"/><rect x="4.5" y="20.5" width="2.5" height="2" fill="#444"/><rect x="83.7" y="51.1" width="2.1" height="2.4" fill="#444"/><rect x="65.8" y="22.8" width="3" height="2.1" fill="#444"/><rect x="67" y="25.7" width="2.8" height="2.3" fill="#444"/><rect x="85" y="36.1" width="2.7" height="2.7" fill="#444"/><rect x="29.1" y="92.2" width="2.4" height="2.7" fill="#444"/><rect x="6.7" y="78.5" width="3.5" height="2.3" fill="#444"/><rect x="27.4" y="16.2" width="2.7" height="2.5" fill="#444"/><rect x="22.4" y="40.5" width="3.8" height="3" fill="#444"/><rect x="64.6" y="84.4" width="3.5" height="2" fill="#444"/><rect x="12.9" y="67.6" width="2.6" height="3" fill="#444"/></svg><span class="lb">Analysis...</span></div>
<div class="cell alt" style="left:1232px;top:267px"><svg class="th" style="left:5px;top:6px;background:#ffffff" width="62" height="61" viewBox="0 0 100 100" preserveAspectRatio="none"><polygon points="0,10 30,0 60,0 20,30 0,34" fill="#e8e8e8"/><polyline points="-4,20 44,-4" fill="none" stroke="#111" stroke-width="1.6" vector-effect="non-scaling-stroke"/><polyline points="-4,60 70,4" fill="none" stroke="#111" stroke-width="2" vector-effect="non-scaling-stroke"/><polyline points="0,96 100,30" fill="none" stroke="#222" stroke-width="1.4" vector-effect="non-scaling-stroke"/><polyline points="10,20 50,70" fill="none" stroke="#222" stroke-width="1.4" vector-effect="non-scaling-stroke"/><polyline points="40,4 100,76" fill="none" stroke="#222" stroke-width="1.6" vector-effect="non-scaling-stroke"/><polyline points="-4,44 40,100" fill="none" stroke="#333" stroke-width="1.2" vector-effect="non-scaling-stroke"/><rect x="30" y="36" width="18" height="14" fill="none" stroke="#111" stroke-width="1.4" vector-effect="non-scaling-stroke"/><rect x="60" y="50" width="16" height="14" fill="none" stroke="#222" stroke-width="1.2" vector-effect="non-scaling-stroke"/><rect x="36" y="82" width="8" height="4" fill="#111"/><rect x="20" y="86" width="10" height="6" fill="#555"/><ellipse cx="76" cy="72" rx="3" ry="3" fill="#111"/><rect x="70" y="14" width="18" height="10" fill="#d0d0d0"/><rect x="10" y="60" width="12" height="8" fill="#c4c4c4"/><rect x="78" y="84" width="16" height="10" fill="#d8d8d8"/><rect x="32.1" y="14.2" width="2.9" height="1.7" fill="#333"/><rect x="24.3" y="74.3" width="2.6" height="1.4" fill="#333"/><rect x="75.2" y="57.2" width="3.3" height="1.9" fill="#333"/><rect x="59.3" y="52.9" width="2.5" height="1.1" fill="#333"/><rect x="81.3" y="87.9" width="2.7" height="1.6" fill="#333"/><rect x="5.8" y="17.7" width="2.8" height="1.8" fill="#333"/><rect x="91" y="70.7" width="3.1" height="1.1" fill="#333"/><rect x="66.7" y="43.3" width="4.9" height="2" fill="#333"/><rect x="10.7" y="22.4" width="5" height="1.2" fill="#333"/><rect x="86.1" y="75.1" width="4.4" height="1.2" fill="#333"/></svg><span class="lb">Analysis...</span></div>
<div class="cell" style="left:1304px;top:267px"><svg class="th" style="left:5px;top:6px;background:#e2e2e2" width="61" height="61" viewBox="0 0 100 100" preserveAspectRatio="none"><rect x="0" y="0" width="24" height="12" fill="#888"/><rect x="26" y="0" width="28" height="10" fill="#cfcfcf"/><rect x="58" y="0" width="42" height="14" fill="#f2f2f2"/><rect x="8" y="16" width="44" height="30" fill="#f6f6f6"/><rect x="56" y="18" width="40" height="28" fill="#f0f0f0"/><polyline points="0,54 100,44" fill="none" stroke="#0c0c0c" stroke-width="2.4" vector-effect="non-scaling-stroke"/><polyline points="26,60 30,100" fill="none" stroke="#0c0c0c" stroke-width="2.4" vector-effect="non-scaling-stroke"/><polyline points="52,0 58,100" fill="none" stroke="#222" stroke-width="1.6" vector-effect="non-scaling-stroke"/><rect x="32" y="62" width="24" height="30" fill="#f4f4f4"/><rect x="62" y="58" width="36" height="22" fill="#d4d4d4"/><rect x="0" y="62" width="24" height="14" fill="#bdbdbd"/><rect x="0" y="80" width="24" height="18" fill="#999"/><ellipse cx="60" cy="38" rx="4" ry="3" fill="#0a0a0a"/><rect x="64" y="84" width="30" height="12" fill="#ececec"/><ellipse cx="14" cy="22" rx="1.6" ry="5" fill="#0c0c0c"/><ellipse cx="20" cy="26" rx="1.6" ry="5" fill="#0c0c0c"/><ellipse cx="26" cy="20" rx="1.6" ry="5" fill="#0c0c0c"/><ellipse cx="32" cy="28" rx="1.6" ry="5" fill="#0c0c0c"/><ellipse cx="38" cy="22" rx="1.6" ry="5" fill="#0c0c0c"/><ellipse cx="44" cy="30" rx="1.6" ry="5" fill="#0c0c0c"/><ellipse cx="18" cy="36" rx="1.6" ry="5" fill="#0c0c0c"/><ellipse cx="30" cy="38" rx="1.6" ry="5" fill="#0c0c0c"/><ellipse cx="40" cy="40" rx="1.6" ry="5" fill="#0c0c0c"/><rect x="58.8" y="82.5" width="2.8" height="1.9" fill="#555"/><rect x="67.2" y="53.7" width="2.5" height="2.7" fill="#555"/><rect x="85.4" y="73.4" width="2.7" height="1.9" fill="#555"/><rect x="5.2" y="94.9" width="2.5" height="1.6" fill="#555"/><rect x="28.6" y="86.6" width="3.7" height="2" fill="#555"/><rect x="64.9" y="89.8" width="4.1" height="1.8" fill="#555"/><rect x="20.6" y="62.9" width="2.8" height="2.5" fill="#555"/><rect x="54.7" y="52.3" width="2.5" height="1.9" fill="#555"/><rect x="78.7" y="89" width="3.3" height="2.8" fill="#555"/><rect x="55" y="84.4" width="4.5" height="1.5" fill="#555"/><rect x="44.8" y="92.4" width="4" height="1.7" fill="#555"/><rect x="41.1" y="77.8" width="4.8" height="2.2" fill="#555"/><rect x="15.2" y="78" width="3.7" height="1.8" fill="#555"/><rect x="3.6" y="65.5" width="2.7" height="2.7" fill="#555"/><rect x="52.9" y="78" width="4" height="1.9" fill="#555"/><rect x="48.1" y="51.1" width="4" height="2.8" fill="#555"/></svg><span class="lb">Analysis...</span></div>
<div class="cell alt" style="left:1375px;top:267px"><svg class="th" style="left:5px;top:6px;background:#ffffff" width="61" height="61" viewBox="0 0 100 100" preserveAspectRatio="none"><polygon points="44,4 58,2 84,92 66,96" fill="#e4e4e4"/><polygon points="46,6 56,4 62,26 52,28" fill="#0c0c0c"/><polygon points="62,60 76,58 82,88 68,92" fill="#111"/><polygon points="52,30 62,28 68,56 58,58" fill="#999"/><polygon points="22,22 34,18 36,34 26,40 20,32" fill="#0c0c0c"/><ellipse cx="32" cy="28" rx="6" ry="6" fill="#fff"/><rect x="86" y="4" width="12" height="30" fill="#1c1c1c"/><ellipse cx="26" cy="62" rx="14" ry="8" fill="#dcdcdc"/><ellipse cx="40" cy="84" rx="12" ry="7" fill="#e4e4e4"/><ellipse cx="12" cy="40" rx="8" ry="8" fill="#ececec"/><rect x="36" y="72" width="3" height="8" fill="#111"/><rect x="44" y="66" width="3" height="8" fill="#222"/><ellipse cx="74" cy="36" rx="3" ry="2" fill="#111"/><rect x="2" y="14" width="6" height="6" fill="#444"/><rect x="5.4" y="82.7" width="2.5" height="1.6" fill="#666"/><rect x="38.5" y="76.8" width="2.1" height="2" fill="#666"/><rect x="55.9" y="46.9" width="3.6" height="1.7" fill="#666"/><rect x="21.2" y="66.3" width="2.2" height="2.9" fill="#666"/><rect x="18.1" y="52.9" width="2.2" height="1.9" fill="#666"/><rect x="13.6" y="77.4" width="2.5" height="1.5" fill="#666"/><rect x="54.5" y="83.4" width="3.9" height="2.3" fill="#666"/><rect x="39.2" y="79.7" width="3.8" height="3" fill="#666"/><rect x="30.3" y="73.3" width="2.6" height="2.3" fill="#666"/><rect x="45.8" y="80.8" width="2.8" height="1.5" fill="#666"/></svg><span class="lb">Analysis...</span></div>
<div class="cell" style="left:1447px;top:267px"><svg class="th" style="left:5px;top:6px;background:#ffffff" width="61" height="61" viewBox="0 0 100 100" preserveAspectRatio="none"><polygon points="4,24 62,2 72,14 14,38" fill="#d8d8d8"/><polyline points="4,24 62,2 72,14 14,38 4,24" fill="none" stroke="#0c0c0c" stroke-width="2" vector-effect="non-scaling-stroke"/><polygon points="22,34 40,28 62,92 44,98" fill="#e0e0e0"/><polyline points="28,36 50,96" fill="none" stroke="#333" stroke-width="1.2" vector-effect="non-scaling-stroke"/><polyline points="38,30 62,92" fill="none" stroke="#555" stroke-width="1" vector-effect="non-scaling-stroke"/><polygon points="38,22 56,14 60,20 42,28" fill="#111"/><rect x="76" y="30" width="20" height="20" fill="#f0f0f0"/><rect x="80" y="60" width="16" height="30" fill="#ececec"/><polyline points="60,40 76,96" fill="none" stroke="#999" stroke-width="1" vector-effect="non-scaling-stroke"/><polygon points="64,70 70,68 74,84 68,86" fill="#888"/><rect x="0" y="60" width="14" height="30" fill="#f2f2f2"/></svg><span class="lb">Analysis...</span></div>
<div class="cell alt" style="left:1518px;top:267px"><svg class="th" style="left:5px;top:6px;background:#ffffff" width="61" height="61" viewBox="0 0 100 100" preserveAspectRatio="none"><rect x="54" y="6" width="16" height="14" fill="none" stroke="#0c0c0c" stroke-width="2.2" vector-effect="non-scaling-stroke"/><polygon points="44,20 72,16 76,40 48,44" fill="#c8c8c8"/><polygon points="8,50 40,44 44,62 12,68" fill="#aaaaaa"/><polygon points="42,44 84,40 90,84 48,88" fill="#d8d8d8"/><rect x="56" y="50" width="12" height="30" fill="#b4b4b4"/><rect x="72" y="52" width="10" height="22" fill="#c4c4c4"/><polygon points="12,68 36,64 42,94 26,98" fill="#bdbdbd"/><rect x="16" y="52" width="8" height="6" fill="#fff"/><rect x="44" y="66" width="10" height="3" fill="#111"/><rect x="62" y="82" width="10" height="3" fill="#111"/><rect x="30" y="86" width="6" height="4" fill="#0c0c0c"/><rect x="26" y="74" width="10" height="8" fill="#333"/><rect x="84" y="20" width="12" height="14" fill="#f0f0f0"/></svg><span class="lb">Analysis...</span></div>
<div class="cell" style="left:1589px;top:267px"><svg class="th" style="left:17px;top:6px;background:#ffffff" width="38" height="61" viewBox="0 0 100 100" preserveAspectRatio="none"><polygon points="20,4 40,2 56,70 40,74" fill="#b8b8b8"/><polyline points="20,4 40,2 56,70" fill="none" stroke="#222" stroke-width="1.4" vector-effect="non-scaling-stroke"/><polygon points="38,62 60,58 74,84 56,92 40,84" fill="#999"/><ellipse cx="58" cy="80" rx="8" ry="5" fill="#fff"/><rect x="60" y="10" width="36" height="40" fill="#ececec"/><polyline points="62,14 94,10" fill="none" stroke="#666" stroke-width="1" vector-effect="non-scaling-stroke"/><polyline points="60,30 96,26" fill="none" stroke="#777" stroke-width="1" vector-effect="non-scaling-stroke"/><rect x="0" y="40" width="22" height="30" fill="#e4e4e4"/><rect x="28" y="18" width="8" height="6" fill="#222"/><rect x="70" y="56" width="24" height="10" fill="#d4d4d4"/><polyline points="10,96 50,92 94,96" fill="none" stroke="#888" stroke-width="1" vector-effect="non-scaling-stroke"/><rect x="4" y="78" width="24" height="14" fill="#dcdcdc"/></svg><span class="lb">Analysis...</span></div>
<div class="cell" style="left:19px;top:356px"><svg class="th" style="left:5px;top:15px;background:#ffffff" width="61" height="43" viewBox="0 0 100 100" preserveAspectRatio="none"><polygon points="12,16 88,16 80,84 20,84" fill="#efedfb"/><polygon points="28,14 88,16 66,44 44,36" fill="#c4bff2"/><polygon points="12,16 28,14 30,78 20,84" fill="#e2dff8"/><polygon points="40,44 66,44 66,72 40,72" fill="#f6f5e6"/><rect x="82" y="20" width="10" height="60" fill="#e8e6f9"/><polygon points="20,84 80,84 70,72 32,72" fill="#f2f1f8"/></svg><span class="lb">Analysis...</span></div>
<div class="cell alt" style="left:90px;top:356px"><svg class="th" style="left:5px;top:15px;background:#ffffff" width="61" height="43" viewBox="0 0 100 100" preserveAspectRatio="none"><polygon points="30,62 66,26 70,30 34,66" fill="#8a94e0"/><polyline points="30,62 86,30" fill="none" stroke="#a4acec" stroke-width="1" vector-effect="non-scaling-stroke"/><rect x="12" y="20" width="2" height="56" fill="#9a9a9a"/><ellipse cx="84" cy="52" rx="8" ry="14" fill="#c8c8c8"/><ellipse cx="20" cy="50" rx="6" ry="12" fill="#d4d4e4"/><rect x="12" y="76" width="76" height="9" fill="#4e4e4e"/><rect x="30" y="78" width="3" height="5" fill="#ccc"/><rect x="50" y="78" width="3" height="5" fill="#ccc"/><rect x="66" y="78" width="3" height="5" fill="#ccc"/><rect x="40" y="56" width="30" height="18" fill="#e4e6f4"/></svg><span class="lb">Analysis...</span></div>
<div class="cell" style="left:162px;top:356px"><svg class="th" style="left:6px;top:6px;background:#ffffff" width="58" height="61" viewBox="0 0 100 100" preserveAspectRatio="none"><polyline points="42,10 54,4 68,10 56,16 42,10" fill="none" stroke="#d8d8d8" stroke-width="1" vector-effect="non-scaling-stroke"/><polyline points="36,28 54,20 72,28 54,36 36,28" fill="none" stroke="#dcdcdc" stroke-width="1" vector-effect="non-scaling-stroke"/><polygon points="30,48 54,38 80,50 56,60" fill="#eeeeee"/><rect x="42" y="54" width="28" height="30" fill="#f0f0f0"/><polygon points="16,76 30,70 32,94 18,98" fill="#ececec"/><polygon points="72,72 86,78 84,98 70,92" fill="#ececec"/><line x1="54" y1="36" x2="54" y2="60" stroke="#e0e0e0" stroke-width="1" vector-effect="non-scaling-stroke"/><polyline points="42,84 56,92 70,84" fill="none" stroke="#dcdcdc" stroke-width="1" vector-effect="non-scaling-stroke"/></svg><span class="lb">Analysis...</span></div>
<div class="cell alt" style="left:233px;top:356px"><svg class="th" style="left:7px;top:6px;background:#ffffff" width="57" height="61" viewBox="0 0 100 100" preserveAspectRatio="none"><polyline points="42,8 54,3 66,8 54,13 42,8" fill="none" stroke="#cfcfcf" stroke-width="1" vector-effect="non-scaling-stroke"/><polyline points="38,26 54,19 70,26 54,33 38,26" fill="none" stroke="#d0d0d0" stroke-width="1" vector-effect="non-scaling-stroke"/><polygon points="34,46 56,36 78,48 56,58" fill="#e8e8e8"/><polygon points="34,46 56,58 56,86 34,72" fill="#dedede"/><polygon points="56,58 78,48 78,74 56,86" fill="#ebebeb"/><rect x="46" y="60" width="8" height="14" fill="#c0c0c0"/><polygon points="16,76 28,70 30,94 18,98" fill="#e6e6e6"/><polygon points="80,66 92,72 90,92 78,86" fill="#e6e6e6"/><line x1="54" y1="13" x2="54" y2="36" stroke="#dcdcdc" stroke-width="0.8" vector-effect="non-scaling-stroke"/></svg><span class="lb">Analysis...</span></div>
<div class="cell" style="left:304px;top:356px"><svg class="th" style="left:6px;top:14px;background:#ffffff" width="61" height="44" viewBox="0 0 100 100" preserveAspectRatio="none"><rect x="28" y="14" width="58" height="72" fill="none" stroke="#bdbdbd" stroke-width="1" vector-effect="non-scaling-stroke"/><rect x="28" y="44" width="58" height="1.2" fill="#bbb"/><rect x="50" y="14" width="1.2" height="72" fill="#bbb"/><rect x="66" y="30" width="1.2" height="56" fill="#c4c4c4"/><rect x="56" y="56" width="16" height="10" fill="#ddd"/><rect x="4" y="10" width="3" height="3" fill="#c4c4e8"/><rect x="4" y="36" width="3" height="3" fill="#c4c4e8"/><rect x="4" y="62" width="3" height="3" fill="#c4c4e8"/><rect x="4" y="86" width="3" height="3" fill="#c4c4e8"/><rect x="36" y="68" width="3" height="14" fill="#999"/><rect x="28" y="88" width="58" height="1.5" fill="#999"/></svg><span class="lb">Analysis...</span></div>
<div class="cell alt" style="left:376px;top:356px"><svg class="th" style="left:4px;top:14px;background:#ffffff" width="62" height="44" viewBox="0 0 100 100" preserveAspectRatio="none"><rect x="50" y="2" width="48" height="96" fill="#c9c9f1"/><rect x="52" y="4" width="20" height="40" fill="#b0b0ea"/><rect x="72" y="2" width="3" height="96" fill="#8c8ce0"/><rect x="52" y="62" width="46" height="3" fill="#8c8ce0"/><rect x="78" y="10" width="18" height="30" fill="#bcbcee"/><rect x="56" y="70" width="14" height="24" fill="#b8b8ec"/><rect x="0" y="66" width="30" height="8" fill="#f25ad2"/><ellipse cx="20" cy="44" rx="8" ry="10" fill="#f6a0e4"/><rect x="4" y="52" width="36" height="3" fill="#f48adc"/><rect x="30" y="24" width="6" height="8" fill="#d838b4"/><rect x="10" y="82" width="30" height="3" fill="#f8b8ea"/><rect x="36" y="36" width="10" height="30" fill="#fad4f2"/></svg><span class="lb">Analysis...</span></div>
<div class="cell" style="left:447px;top:356px"><svg class="th" style="left:5px;top:15px;background:#ffffff" width="61" height="42" viewBox="0 0 100 100" preserveAspectRatio="none"><polyline points="22,56 64,16" fill="none" stroke="#888" stroke-width="1.2" vector-effect="non-scaling-stroke"/><polyline points="26,62 68,22" fill="none" stroke="#aaa" stroke-width="1" vector-effect="non-scaling-stroke"/><polygon points="30,36 40,30 42,60 32,66" fill="#e4e4e4"/><ellipse cx="12" cy="42" rx="8" ry="12" fill="#ececec"/><ellipse cx="84" cy="46" rx="6" ry="10" fill="#ececec"/><ellipse cx="44" cy="84" rx="4" ry="8" fill="#e4e4e4"/><rect x="50" y="60" width="16" height="2" fill="#999"/><rect x="18" y="70" width="3" height="14" fill="#ccc"/><ellipse cx="84" cy="84" rx="5" ry="8" fill="#eee"/></svg><span class="lb">Analysis...</span></div>
<div class="cell alt" style="left:519px;top:356px"><svg class="th" style="left:5px;top:6px;background:#ffffff" width="61" height="61" viewBox="0 0 100 100" preserveAspectRatio="none"><polyline points="8,36 28,24 44,32 24,44 8,36" fill="none" stroke="#dedede" stroke-width="1" vector-effect="non-scaling-stroke"/><polyline points="56,36 76,24 94,34 74,46 56,36" fill="none" stroke="#dedede" stroke-width="1" vector-effect="non-scaling-stroke"/><rect x="4" y="56" width="92" height="20" fill="none" stroke="#c4c4c4" stroke-width="1" vector-effect="non-scaling-stroke"/><rect x="4" y="64" width="92" height="1.2" fill="#c4c4c4"/><line x1="14" y1="56" x2="14" y2="76" stroke="#cfcfcf" stroke-width="1" vector-effect="non-scaling-stroke"/><line x1="24" y1="56" x2="24" y2="76" stroke="#cfcfcf" stroke-width="1" vector-effect="non-scaling-stroke"/><line x1="34" y1="56" x2="34" y2="76" stroke="#cfcfcf" stroke-width="1" vector-effect="non-scaling-stroke"/><line x1="44" y1="56" x2="44" y2="76" stroke="#cfcfcf" stroke-width="1" vector-effect="non-scaling-stroke"/><line x1="54" y1="56" x2="54" y2="76" stroke="#cfcfcf" stroke-width="1" vector-effect="non-scaling-stroke"/><line x1="64" y1="56" x2="64" y2="76" stroke="#cfcfcf" stroke-width="1" vector-effect="non-scaling-stroke"/><line x1="74" y1="56" x2="74" y2="76" stroke="#cfcfcf" stroke-width="1" vector-effect="non-scaling-stroke"/><line x1="84" y1="56" x2="84" y2="76" stroke="#cfcfcf" stroke-width="1" vector-effect="non-scaling-stroke"/><rect x="8" y="86" width="36" height="9" fill="none" stroke="#cfcfcf" stroke-width="1" vector-effect="non-scaling-stroke"/><rect x="52" y="86" width="42" height="9" fill="none" stroke="#cfcfcf" stroke-width="1" vector-effect="non-scaling-stroke"/></svg><span class="lb">Analysis...</span></div>
<div class="cell" style="left:590px;top:356px"><svg class="th" style="left:5px;top:14px;background:#ffffff" width="61" height="44" viewBox="0 0 100 100" preserveAspectRatio="none"><polygon points="30,62 62,40 84,60 52,84" fill="#adb676"/><polygon points="30,62 52,84 52,92 30,70" fill="#8a9458"/><polygon points="52,84 84,60 84,68 52,92" fill="#98a264"/><polyline points="52,52 62,46 68,52 60,58" fill="none" stroke="#333" stroke-width="1.2" vector-effect="non-scaling-stroke"/><polygon points="6,36 36,24 38,30 8,42" fill="#9a7a5c"/><polygon points="16,50 36,42 38,46 18,54" fill="#7a6a58"/><polygon points="40,16 60,8 70,14 50,24" fill="#d4d4d4"/><rect x="46" y="12" width="14" height="3" fill="#333"/><rect x="78" y="30" width="5" height="10" fill="#d8c840"/><rect x="85" y="30" width="5" height="10" fill="#c8b838"/><rect x="92" y="30" width="4" height="10" fill="#d8c840"/><ellipse cx="84" cy="20" rx="8" ry="4" fill="#bcd0e8"/></svg><span class="lb">Analysis...</span></div>
<div class="cell alt" style="left:661px;top:356px"><svg class="th" style="left:5px;top:13px;background:#ffffff" width="61" height="46" viewBox="0 0 100 100" preserveAspectRatio="none"><polyline points="6,26 30,80 96,30 6,26" fill="none" stroke="#b4b4b4" stroke-width="1" vector-effect="non-scaling-stroke"/><polygon points="10,30 30,34 34,76" fill="#d8d8d8"/><polygon points="20,22 40,12 60,20 40,30" fill="#e4e4e4"/><polyline points="26,30 44,22 54,28" fill="none" stroke="#222" stroke-width="1.6" vector-effect="non-scaling-stroke"/><rect x="34" y="26" width="10" height="3" fill="#111"/><polyline points="30,80 50,92" fill="none" stroke="#888" stroke-width="1" vector-effect="non-scaling-stroke"/><polyline points="30,48 80,36" fill="none" stroke="#d4d4d4" stroke-width="0.8" vector-effect="non-scaling-stroke"/><polyline points="30,64 64,52" fill="none" stroke="#d4d4d4" stroke-width="0.8" vector-effect="non-scaling-stroke"/></svg><span class="lb">Analysis...</span></div>
<div class="cell" style="left:733px;top:356px"><svg class="th" style="left:5px;top:9px;background:#ffffff" width="61" height="55" viewBox="0 0 100 100" preserveAspectRatio="none"><polyline points="24,16 36,10 46,16 34,22 24,16" fill="none" stroke="#ccc" stroke-width="1" vector-effect="non-scaling-stroke"/><polyline points="24,40 40,32 56,40 40,48 24,40" fill="none" stroke="#bbb" stroke-width="1" vector-effect="non-scaling-stroke"/><rect x="34" y="38" width="10" height="5" fill="#ddd"/><polyline points="24,68 42,60 58,68 40,76 24,68" fill="none" stroke="#bdbdbd" stroke-width="1" vector-effect="non-scaling-stroke"/><rect x="32" y="66" width="14" height="5" fill="#d8d8d8"/><polygon points="56,80 74,72 84,84 66,92" fill="#d4d4d4"/><rect x="16" y="28" width="2" height="3" fill="#777"/><rect x="16" y="52" width="2" height="3" fill="#777"/><rect x="16" y="64" width="2" height="3" fill="#777"/><rect x="16" y="80" width="2" height="3" fill="#777"/><polyline points="48,68 80,52" fill="none" stroke="#ddd" stroke-width="0.8" vector-effect="non-scaling-stroke"/><line x1="60" y1="78" x2="78" y2="78" stroke="#aaa" stroke-width="0.8" vector-effect="non-scaling-stroke"/><line x1="60" y1="82" x2="78" y2="82" stroke="#aaa" stroke-width="0.8" vector-effect="non-scaling-stroke"/><line x1="60" y1="86" x2="78" y2="86" stroke="#aaa" stroke-width="0.8" vector-effect="non-scaling-stroke"/></svg><span class="lb">Analysis...</span></div>
<div class="cell sel alt" style="left:804px;top:356px"><svg class="th" style="left:8px;top:6px;background:#ffffff" width="56" height="61" viewBox="0 0 100 100" preserveAspectRatio="none"><polyline points="12,34 30,10 74,18 96,8" fill="none" stroke="#0a0a0a" stroke-width="3" vector-effect="non-scaling-stroke"/><polyline points="12,34 16,62 44,90 96,70" fill="none" stroke="#0a0a0a" stroke-width="3" vector-effect="non-scaling-stroke"/><polygon points="16,62 44,90 96,70 96,78 44,100 14,70" fill="#0a0a0a"/><polyline points="22,56 40,62 74,40" fill="none" stroke="#111" stroke-width="2" vector-effect="non-scaling-stroke"/><polyline points="72,12 74,84" fill="none" stroke="#111" stroke-width="2" vector-effect="non-scaling-stroke"/><polygon points="14,36 30,12 72,20 72,74 44,88 18,62" fill="#ececec"/><rect x="34" y="34" width="3" height="6" fill="#111"/><rect x="54" y="30" width="3" height="6" fill="#111"/><polyline points="76,20 96,12 96,68 76,76" fill="none" stroke="#888" stroke-width="1" vector-effect="non-scaling-stroke"/><rect x="84" y="26" width="2" height="40" fill="#aaa"/></svg><span class="lb">Analysis...</span></div>
<div class="cell" style="left:875px;top:356px"><svg class="th" style="left:19px;top:6px;background:#ffffff" width="34" height="61" viewBox="0 0 100 100" preserveAspectRatio="none"><polyline points="30,6 70,2 74,14 34,20 30,6" fill="none" stroke="#dcdcdc" stroke-width="1" vector-effect="non-scaling-stroke"/><polygon points="24,32 70,24 78,40 32,50" fill="#eaeaea"/><polyline points="24,32 70,24 78,40 32,50 24,32" fill="none" stroke="#d4d4d4" stroke-width="1" vector-effect="non-scaling-stroke"/><polygon points="22,62 64,54 72,72 30,82" fill="#ededed"/><polyline points="14,90 92,78" fill="none" stroke="#dcdcdc" stroke-width="1" vector-effect="non-scaling-stroke"/><polyline points="10,30 20,96" fill="none" stroke="#e4e4e4" stroke-width="0.8" vector-effect="non-scaling-stroke"/><rect x="40" y="60" width="20" height="10" fill="#d8d8d8"/></svg><span class="lb">Analysis...</span></div>
<div class="cell alt" style="left:947px;top:356px"><svg class="th" style="left:5px;top:16px;background:#ffffff" width="61" height="40" viewBox="0 0 100 100" preserveAspectRatio="none"><polygon points="0,0 92,0 56,36 30,70 0,100" fill="#d6f0f5"/><polygon points="54,62 74,40 82,48 62,72" fill="#d8d8d8"/><polyline points="54,62 74,40 82,48 62,72 54,62" fill="none" stroke="#aaa" stroke-width="1" vector-effect="non-scaling-stroke"/><rect x="62" y="52" width="8" height="8" fill="#999"/><polygon points="70,70 96,40 100,40 100,90 80,96" fill="#f4f4f4"/><polyline points="76,72 92,56" fill="none" stroke="#ccc" stroke-width="1" vector-effect="non-scaling-stroke"/></svg><span class="lb">Analysis...</span></div>
<div class="cell" style="left:1018px;top:356px"><svg class="th" style="left:5px;top:24px;background:#ffffff" width="61" height="25" viewBox="0 0 100 100" preserveAspectRatio="none"><polyline points="34,40 46,20 58,36" fill="none" stroke="#bbb" stroke-width="1" vector-effect="non-scaling-stroke"/><ellipse cx="44" cy="44" rx="8" ry="14" fill="#dcdcdc"/><polyline points="50,60 64,72" fill="none" stroke="#bbb" stroke-width="1" vector-effect="non-scaling-stroke"/><polyline points="68,76 78,50" fill="none" stroke="#c8b8a0" stroke-width="1.4" vector-effect="non-scaling-stroke"/><rect x="36" y="30" width="12" height="14" fill="#e4e4e4"/></svg><span class="lb">Analysis...</span></div>
<div class="cell alt" style="left:1090px;top:356px"><svg class="th" style="left:5px;top:15px;background:#ffffff" width="61" height="43" viewBox="0 0 100 100" preserveAspectRatio="none"><polygon points="40,44 52,36 58,50 46,58" fill="#d4d4d4"/><ellipse cx="46" cy="50" rx="8" ry="8" fill="#c8c8c8"/><polyline points="36,36 48,28" fill="none" stroke="#ccc" stroke-width="1" vector-effect="non-scaling-stroke"/><rect x="4" y="90" width="10" height="2" fill="#ddd"/><rect x="42" y="46" width="10" height="6" fill="#aaa"/></svg><span class="lb">Analysis...</span></div>
<div class="cell" style="left:1161px;top:356px"><svg class="th" style="left:5px;top:14px;background:#ffffff" width="61" height="44" viewBox="0 0 100 100" preserveAspectRatio="none"><polygon points="44,16 56,10 62,16 50,22" fill="#c4c4c4"/><polygon points="34,40 60,28 68,38 42,52" fill="#d8d8d8"/><rect x="46" y="34" width="14" height="10" fill="#333"/><polygon points="12,68 24,62 28,70 16,76" fill="#bbb"/><polygon points="26,60 36,56 38,62 28,66" fill="#555"/><polygon points="60,58 80,50 86,58 66,68" fill="#cfcfcf"/><rect x="64" y="54" width="8" height="6" fill="#222"/><polyline points="66,22 84,34" fill="none" stroke="#999" stroke-width="1" vector-effect="non-scaling-stroke"/><rect x="46" y="88" width="10" height="2" fill="#ccc"/><polyline points="30,30 44,24" fill="none" stroke="#aaa" stroke-width="1" vector-effect="non-scaling-stroke"/></svg><span class="lb">Analysis...</span></div>
<div class="cell alt" style="left:1232px;top:356px"><svg class="th" style="left:7px;top:6px;background:#ffffff" width="58" height="61" viewBox="0 0 100 100" preserveAspectRatio="none"><polygon points="4,28 40,10 70,30 34,52" fill="#ececec"/><polyline points="4,28 40,10 70,30 34,52 4,28" fill="none" stroke="#bbb" stroke-width="1" vector-effect="non-scaling-stroke"/><polygon points="4,56 36,44 60,66 24,84" fill="#e8e8e8"/><polygon points="60,30 96,44 92,56 60,44" fill="#e0e0e0"/><polyline points="74,10 74,90" fill="none" stroke="#888" stroke-width="1.4" vector-effect="non-scaling-stroke"/><ellipse cx="34" cy="40" rx="3" ry="3" fill="#444"/><ellipse cx="24" cy="86" rx="3" ry="3" fill="#444"/><ellipse cx="70" cy="80" rx="3" ry="3" fill="#555"/><rect x="40" y="26" width="20" height="10" fill="#d0d0d0"/><polygon points="30,70 70,50 90,70 50,94" fill="#f2f2f2"/></svg><span class="lb">Analysis...</span></div>
<div class="cell" style="left:1304px;top:356px"><svg class="th" style="left:9px;top:6px;background:#f5f3ef" width="53" height="61" viewBox="0 0 100 100" preserveAspectRatio="none"><polyline points="42,30 56,22 66,28" fill="none" stroke="#222" stroke-width="1.6" vector-effect="non-scaling-stroke"/><polyline points="42,30 44,40 54,34" fill="none" stroke="#222" stroke-width="1.4" vector-effect="non-scaling-stroke"/><polyline points="52,62 66,54" fill="none" stroke="#222" stroke-width="1.6" vector-effect="non-scaling-stroke"/><polyline points="60,66 62,76" fill="none" stroke="#222" stroke-width="1.4" vector-effect="non-scaling-stroke"/><polyline points="24,84 38,78 42,86" fill="none" stroke="#222" stroke-width="1.6" vector-effect="non-scaling-stroke"/><polyline points="46,74 54,70" fill="none" stroke="#333" stroke-width="1.4" vector-effect="non-scaling-stroke"/><rect x="4" y="94" width="10" height="1.5" fill="#aaa"/></svg><span class="lb">Analysis...</span></div>
<div class="cell alt" style="left:1375px;top:356px"><svg class="th" style="left:5px;top:15px;background:#ffffff" width="61" height="43" viewBox="0 0 100 100" preserveAspectRatio="none"><polygon points="16,70 50,40 92,62 56,94" fill="#f0f4ee"/><polygon points="30,30 50,16 70,26 70,56 50,70 30,58" fill="#f2f2f2"/><polygon points="54,18 74,12 80,22 60,30" fill="#cc8a3a"/><ellipse cx="28" cy="62" rx="10" ry="8" fill="#a4cc90"/><ellipse cx="40" cy="76" rx="10" ry="7" fill="#90c07c"/><ellipse cx="52" cy="64" rx="6" ry="5" fill="#b0d49c"/><rect x="42" y="30" width="8" height="20" fill="#dcdcdc"/><rect x="56" y="34" width="8" height="20" fill="#e0e0e0"/><polyline points="30,30 50,16 70,26" fill="none" stroke="#bbb" stroke-width="1" vector-effect="non-scaling-stroke"/><rect x="40" y="92" width="14" height="2" fill="#aaa"/></svg><span class="lb">Analysis...</span></div>
<div class="cell" style="left:1447px;top:356px"><svg class="th" style="left:5px;top:20px;background:#e5e5e5" width="61" height="32" viewBox="0 0 100 100" preserveAspectRatio="none"><rect x="0" y="88" width="100" height="12" fill="#fbfbfb"/><rect x="0" y="84" width="100" height="3" fill="#777"/><rect x="4" y="12" width="92" height="2" fill="#aaa"/><rect x="8" y="26" width="2" height="58" fill="#999"/><rect x="36" y="40" width="50" height="2" fill="#888"/><rect x="36" y="40" width="2" height="44" fill="#999"/><rect x="62" y="20" width="2" height="64" fill="#aaa"/><ellipse cx="58" cy="52" rx="5" ry="10" fill="#777"/><ellipse cx="48" cy="30" rx="2" ry="5" fill="#555"/><ellipse cx="70" cy="34" rx="2" ry="5" fill="#555"/><rect x="12" y="62" width="6" height="22" fill="#666"/><rect x="74" y="60" width="10" height="24" fill="#bdbdbd"/><rect x="88" y="50" width="6" height="34" fill="#d0d0d0"/><ellipse cx="94" cy="30" rx="2" ry="4" fill="#555"/></svg><span class="lb">Analysis...</span></div>
<div class="cell alt" style="left:1518px;top:356px"><svg class="th" style="left:5px;top:20px;background:#e7e7e7" width="61" height="33" viewBox="0 0 100 100" preserveAspectRatio="none"><rect x="0" y="88" width="100" height="12" fill="#fbfbfb"/><rect x="0" y="84" width="100" height="3" fill="#777"/><rect x="4" y="12" width="92" height="2" fill="#aaa"/><rect x="8" y="26" width="2" height="58" fill="#999"/><rect x="36" y="40" width="50" height="2" fill="#888"/><rect x="36" y="40" width="2" height="44" fill="#999"/><rect x="62" y="20" width="2" height="64" fill="#aaa"/><ellipse cx="58" cy="52" rx="5" ry="10" fill="#777"/><ellipse cx="48" cy="30" rx="2" ry="5" fill="#555"/><ellipse cx="70" cy="34" rx="2" ry="5" fill="#555"/><rect x="12" y="62" width="6" height="22" fill="#666"/><rect x="74" y="60" width="10" height="24" fill="#bdbdbd"/><rect x="88" y="50" width="6" height="34" fill="#d0d0d0"/><ellipse cx="94" cy="30" rx="2" ry="4" fill="#555"/><rect x="20" y="30" width="14" height="20" fill="#c8c8c8"/></svg><span class="lb">Analysis...</span></div>
<div class="cell" style="left:1589px;top:356px"><svg class="th" style="left:6px;top:31px;background:#ffffff" width="61" height="11" viewBox="0 0 100 100" preserveAspectRatio="none"><rect x="2" y="30" width="10" height="30" fill="#ccc"/><rect x="24" y="40" width="20" height="26" fill="#bbb"/><rect x="48" y="44" width="16" height="22" fill="#c8c8c8"/><rect x="68" y="40" width="14" height="30" fill="#bdbdbd"/><rect x="90" y="56" width="6" height="24" fill="#999"/></svg><span class="lb">Analysis...</span></div>
<div class="cell" style="left:19px;top:444px"><svg class="th" style="left:5px;top:14px;background:#ffffff" width="61" height="44" viewBox="0 0 100 100" preserveAspectRatio="none"><rect x="12" y="14" width="8" height="72" fill="#f6c8d2"/><rect x="12" y="14" width="1.5" height="72" fill="#e88aa0"/><rect x="20" y="14" width="1.5" height="72" fill="#e88aa0"/><rect x="12" y="30" width="54" height="1.5" fill="#ec98ac"/><rect x="12" y="52" width="54" height="1.5" fill="#ec98ac"/><rect x="12" y="84" width="76" height="1.5" fill="#ec98ac"/><rect x="64" y="12" width="2" height="74" fill="#e88aa0"/><ellipse cx="80" cy="68" rx="6" ry="8" fill="#fad8e0"/><rect x="30" y="36" width="20" height="14" fill="#fbe4ea"/><rect x="4" y="90" width="92" height="1" fill="#f4c0cc"/></svg><span class="lb">Analysis...</span></div>
<div class="cell alt" style="left:90px;top:444px"><svg class="th" style="left:5px;top:29px;background:#ffffff" width="61" height="14" viewBox="0 0 100 100" preserveAspectRatio="none"><rect x="6" y="30" width="40" height="8" fill="#aaa"/><rect x="10" y="44" width="56" height="6" fill="#c4c4c4"/><rect x="6" y="60" width="60" height="5" fill="#d4d4d4"/><rect x="74" y="40" width="16" height="5" fill="#d8d8d8"/><rect x="30" y="22" width="12" height="8" fill="#888"/></svg><span class="lb">Analysis...</span></div>
<div class="cell" style="left:162px;top:444px"><svg class="th" style="left:5px;top:24px;background:#ffffff" width="61" height="24" viewBox="0 0 100 100" preserveAspectRatio="none"><rect x="16" y="20" width="22" height="56" fill="none" stroke="#888" stroke-width="1.2" vector-effect="non-scaling-stroke"/><rect x="16" y="44" width="40" height="2" fill="#999"/><rect x="38" y="30" width="18" height="2" fill="#aaa"/><ellipse cx="58" cy="40" rx="6" ry="16" fill="#c8c8c8"/><rect x="4" y="76" width="92" height="2.5" fill="#999"/><polyline points="60,60 96,60" fill="none" stroke="#bbb" stroke-width="1" vector-effect="non-scaling-stroke"/><rect x="76" y="30" width="1.5" height="46" fill="#bbb"/><ellipse cx="8" cy="50" rx="4" ry="14" fill="#d8d8d8"/><rect x="20" y="58" width="14" height="16" fill="#d0d0d0"/></svg><span class="lb">Analysis...</span></div>
<div class="cell alt" style="left:233px;top:444px"><svg class="th" style="left:5px;top:6px;background:#eaeaea" width="61" height="61" viewBox="0 0 100 100" preserveAspectRatio="none"><polygon points="0,0 30,0 20,24 0,30" fill="#dcdcdc"/><rect x="28" y="18" width="56" height="28" fill="#f2f2f2"/><rect x="28" y="18" width="56" height="28" fill="none" stroke="#b4b4b4" stroke-width="1" vector-effect="non-scaling-stroke"/><rect x="46" y="18" width="1.2" height="28" fill="#bbb"/><rect x="64" y="18" width="1.2" height="28" fill="#bbb"/><polygon points="60,50 96,20 100,24 100,60 70,76" fill="#d8d8d8"/><ellipse cx="18" cy="60" rx="14" ry="10" fill="#d4d4d4"/><ellipse cx="44" cy="64" rx="10" ry="6" fill="#cfcfcf"/><polygon points="56,68 78,58 84,72 62,84" fill="#c0c0c0"/><rect x="60" y="78" width="6" height="6" fill="#777"/><ellipse cx="30" cy="88" rx="20" ry="8" fill="#e0e0e0"/><polygon points="0,40 14,44 10,96 0,100" fill="#d8d8d8"/><rect x="28" y="46" width="56" height="2" fill="#999"/></svg><span class="lb">Analysis...</span></div>
<div class="cell" style="left:304px;top:444px"><svg class="th" style="left:6px;top:22px;background:#ffffff" width="61" height="29" viewBox="0 0 100 100" preserveAspectRatio="none"><ellipse cx="40" cy="52" rx="6" ry="16" fill="#d4d4d4"/><ellipse cx="80" cy="46" rx="6" ry="14" fill="#d0d0d0"/><rect x="14" y="60" width="50" height="14" fill="#ececec"/><rect x="10" y="80" width="80" height="2" fill="#ccc"/><ellipse cx="22" cy="60" rx="5" ry="10" fill="#e0e0e0"/><rect x="50" y="56" width="20" height="2" fill="#bbb"/><ellipse cx="90" cy="66" rx="4" ry="8" fill="#dcdcdc"/></svg><span class="lb">Analysis...</span></div>
<div class="cell alt" style="left:376px;top:444px"><svg class="th" style="left:4px;top:10px;background:#ffffff" width="62" height="53" viewBox="0 0 100 100" preserveAspectRatio="none"><rect x="62" y="6" width="4" height="26" fill="#1a3ab8"/><rect x="78" y="4" width="3" height="6" fill="#1a3ab8"/><rect x="84" y="10" width="4" height="10" fill="#2848c0"/><polyline points="56,40 48,84" fill="none" stroke="#3a5ad0" stroke-width="1.6" vector-effect="non-scaling-stroke"/><polyline points="62,38 56,86" fill="none" stroke="#6a84dc" stroke-width="1.2" vector-effect="non-scaling-stroke"/><rect x="20" y="80" width="5" height="14" fill="#2040b8"/><rect x="30" y="84" width="8" height="8" fill="#4060c8"/><rect x="44" y="86" width="6" height="8" fill="#2848c0"/><rect x="74" y="78" width="8" height="8" fill="#3858c4"/><rect x="90" y="74" width="6" height="10" fill="#1a3ab8"/><polyline points="20,30 26,20 32,30 32,60" fill="none" stroke="#d0d4e8" stroke-width="1" vector-effect="non-scaling-stroke"/><rect x="24" y="56" width="6" height="16" fill="#b8c0e4"/><polyline points="10,94 96,94" fill="none" stroke="#8898d8" stroke-width="1" vector-effect="non-scaling-stroke"/><ellipse cx="86" cy="34" rx="3" ry="4" fill="#1a3ab8"/><rect x="66" y="50" width="10" height="24" fill="#e8ecf8"/></svg><span class="lb">Analysis...</span></div>
<div class="cell" style="left:447px;top:444px"><svg class="th" style="left:14px;top:6px;background:#ffffff" width="43" height="61" viewBox="0 0 100 100" preserveAspectRatio="none"><ellipse cx="46" cy="8" rx="14" ry="5" fill="#e4e4e4"/><polygon points="34,26 62,18 84,28 56,38" fill="#999"/><polygon points="34,26 56,38 56,46 34,34" fill="#666"/><polygon points="56,38 84,28 84,36 56,46" fill="#bbb"/><polyline points="36,34 36,48" fill="none" stroke="#555" stroke-width="1" vector-effect="non-scaling-stroke"/><polyline points="82,36 82,48" fill="none" stroke="#555" stroke-width="1" vector-effect="non-scaling-stroke"/><polygon points="12,84 60,60 90,68 42,96" fill="#e8e8e8"/><polyline points="12,84 60,60 90,68 42,96 12,84" fill="none" stroke="#888" stroke-width="1" vector-effect="non-scaling-stroke"/><polygon points="40,70 60,62 66,68 46,78" fill="#111"/><polygon points="28,60 50,54 56,58 34,66" fill="#d4d4d4"/><rect x="60" y="84" width="16" height="2" fill="#aaa"/></svg><span class="lb">Analysis...</span></div>
<div class="cell alt" style="left:519px;top:444px"><svg class="th" style="left:20px;top:6px;background:#e9ba42" width="30" height="61" viewBox="0 0 100 100" preserveAspectRatio="none"><rect x="0" y="68" width="100" height="32" fill="#1f3b50"/><polygon points="14,40 50,30 84,40 84,72 50,82 14,72" fill="#f4f6f8"/><polygon points="14,40 50,50 50,82 14,72" fill="#dfe6ea"/><rect x="22" y="50" width="10" height="8" fill="#4a78a8"/><rect x="36" y="54" width="8" height="8" fill="#d05040"/><rect x="58" y="50" width="18" height="4" fill="#9ab"/><rect x="58" y="60" width="18" height="4" fill="#9ab"/><polygon points="0,68 50,82 100,70 100,74 50,88 0,74" fill="#2a4a62"/><line x1="42" y1="6" x2="42" y2="34" stroke="#f4e4b0" stroke-width="0.8" vector-effect="non-scaling-stroke"/><ellipse cx="42" cy="6" rx="2" ry="1.2" fill="#fff"/></svg><span class="lb">Analysis...</span></div>
<div class="cell" style="left:590px;top:444px"><svg class="th" style="left:5px;top:20px;background:#ffffff" width="61" height="32" viewBox="0 0 100 100" preserveAspectRatio="none"><polyline points="14,64 52,30 70,36 96,70 60,92 14,64" fill="none" stroke="#e8e8e8" stroke-width="1" vector-effect="non-scaling-stroke"/><polyline points="30,50 36,30 42,50" fill="none" stroke="#d4d4d4" stroke-width="1" vector-effect="non-scaling-stroke"/><ellipse cx="70" cy="30" rx="5" ry="12" fill="#e4e4e4"/><polyline points="40,60 70,70" fill="none" stroke="#e0e0e0" stroke-width="1" vector-effect="non-scaling-stroke"/><ellipse cx="56" cy="76" rx="5" ry="7" fill="#ededed"/></svg><span class="lb">Analysis...</span></div>
<div class="cell alt" style="left:661px;top:444px"><svg class="th" style="left:5px;top:7px;background:#ffffff" width="61" height="58" viewBox="0 0 100 100" preserveAspectRatio="none"><polygon points="18,50 52,18 82,44 82,74 18,74" fill="#d2ab6c"/><polygon points="52,18 82,44 82,74 60,74 60,40" fill="#c49a58"/><rect x="24" y="56" width="48" height="18" fill="#f4f0e8"/><rect x="56" y="38" width="10" height="10" fill="#f6f6f6"/><rect x="30" y="60" width="8" height="12" fill="#5a9a70"/><ellipse cx="20" cy="44" rx="10" ry="8" fill="#ece4e0"/><rect x="8" y="76" width="86" height="10" fill="#f0f0ec"/><ellipse cx="24" cy="80" rx="2.5" ry="5" fill="#222"/><ellipse cx="56" cy="74" rx="2" ry="4" fill="#333"/><ellipse cx="64" cy="76" rx="2" ry="4" fill="#444"/><polyline points="82,60 96,70" fill="none" stroke="#ccc" stroke-width="1" vector-effect="non-scaling-stroke"/><polyline points="52,18 52,8" fill="none" stroke="#ccc" stroke-width="0.8" vector-effect="non-scaling-stroke"/></svg><span class="lb">Analysis...</span></div>
<div class="cell" style="left:733px;top:444px"><svg class="th" style="left:5px;top:16px;background:#e8e2d4" width="61" height="41" viewBox="0 0 100 100" preserveAspectRatio="none"><polygon points="0,0 14,0 20,20 16,70 0,100" fill="#d8b070"/><rect x="24" y="14" width="70" height="50" fill="#f4f2ea"/><rect x="26" y="18" width="30" height="40" fill="#dce4d8"/><rect x="58" y="18" width="14" height="30" fill="#c8d4c0"/><rect x="24" y="12" width="70" height="4" fill="#e0b868"/><polygon points="16,70 96,58 100,100 0,100" fill="#d4d0c8"/><polygon points="30,74 70,66 76,90 34,98" fill="#bcc0bc"/><rect x="86" y="30" width="12" height="40" fill="#e4c078"/><rect x="88" y="36" width="6" height="12" fill="#222"/><rect x="76" y="24" width="8" height="20" fill="#7aa890"/><ellipse cx="86" cy="78" rx="10" ry="10" fill="#e8d8a8"/><rect x="60" y="28" width="6" height="6" fill="#333"/><rect x="20" y="20" width="3" height="50" fill="#f8f4e8"/></svg><span class="lb">Analysis...</span></div>
<div class="cell alt" style="left:804px;top:444px"><svg class="th" style="left:14px;top:6px;background:#ffffff" width="43" height="61" viewBox="0 0 100 100" preserveAspectRatio="none"><ellipse cx="24" cy="30" rx="16" ry="16" fill="#b8b8b8"/><ellipse cx="78" cy="20" rx="18" ry="18" fill="#aaaaaa"/><ellipse cx="20" cy="36" rx="9" ry="9" fill="#fff"/><ellipse cx="80" cy="24" rx="10" ry="10" fill="#fff"/><polyline points="24,44 26,96" fill="none" stroke="#222" stroke-width="1.6" vector-effect="non-scaling-stroke"/><polyline points="78,36 74,96" fill="none" stroke="#222" stroke-width="1.8" vector-effect="non-scaling-stroke"/><polyline points="10,24 38,40" fill="none" stroke="#333" stroke-width="1" vector-effect="non-scaling-stroke"/><polyline points="64,10 92,34" fill="none" stroke="#333" stroke-width="1" vector-effect="non-scaling-stroke"/><polyline points="66,30 94,14" fill="none" stroke="#444" stroke-width="1" vector-effect="non-scaling-stroke"/><rect x="44" y="52" width="16" height="16" fill="#d8b888"/><rect x="40" y="68" width="24" height="8" fill="#ddd"/><ellipse cx="30" cy="80" rx="8" ry="8" fill="#d4d4d4"/><ellipse cx="90" cy="60" rx="8" ry="14" fill="#c4c4c4"/><rect x="46" y="84" width="6" height="8" fill="#333"/><polyline points="4,96 96,96" fill="none" stroke="#999" stroke-width="1" vector-effect="non-scaling-stroke"/></svg><span class="lb">Analysis...</span></div>
<div class="cell" style="left:875px;top:444px"><svg class="th" style="left:11px;top:6px;background:#ffffff" width="50" height="61" viewBox="0 0 100 100" preserveAspectRatio="none"><rect x="24" y="20" width="36" height="50" fill="none" stroke="#e4e4e4" stroke-width="1" vector-effect="non-scaling-stroke"/><rect x="16" y="50" width="40" height="26" fill="#f0ece4"/><rect x="18" y="52" width="14" height="22" fill="#2c62a4"/><rect x="34" y="54" width="18" height="16" fill="#d9b98c"/><ellipse cx="42" cy="62" rx="3" ry="6" fill="#fff"/><polygon points="8,78 60,74 68,86 14,92" fill="#e4e4e4"/><rect x="30" y="78" width="14" height="6" fill="#888"/><ellipse cx="60" cy="78" rx="3" ry="4" fill="#333"/><polyline points="60,20 60,70" fill="none" stroke="#ddd" stroke-width="1" vector-effect="non-scaling-stroke"/><rect x="22" y="60" width="4" height="6" fill="#e8f0f8"/></svg><span class="lb">Analysis...</span></div>
<div class="cell alt" style="left:947px;top:444px"><svg class="th" style="left:13px;top:6px;background:#ffffff" width="46" height="61" viewBox="0 0 100 100" preserveAspectRatio="none"><polygon points="8,12 28,10 28,88 8,94" fill="#dddddd"/><polygon points="30,24 38,20 44,28 46,66 42,72 32,70 28,40" fill="#080808"/><rect x="34" y="18" width="4" height="5" fill="#111"/><polygon points="62,44 78,44 88,96 56,96" fill="#dcba8a"/><rect x="64" y="50" width="14" height="1.5" fill="#b8945c"/><rect x="62" y="60" width="18" height="1.5" fill="#b8945c"/><rect x="60" y="70" width="22" height="1.5" fill="#b8945c"/><rect x="58" y="80" width="26" height="1.5" fill="#b8945c"/><rect x="58" y="90" width="28" height="1.5" fill="#b8945c"/><rect x="68" y="32" width="6" height="10" fill="#333"/><line x1="71" y1="6" x2="71" y2="32" stroke="#999" stroke-width="0.8" vector-effect="non-scaling-stroke"/><rect x="40" y="90" width="10" height="5" fill="#555"/><rect x="30" y="94" width="20" height="2" fill="#ccc"/></svg><span class="lb">Analysis...</span></div>
<div class="cell" style="left:1018px;top:444px"><svg class="th" style="left:14px;top:6px;background:#ffffff" width="43" height="61" viewBox="0 0 100 100" preserveAspectRatio="none"><polygon points="16,34 50,30 56,50 20,56" fill="#d2a96c"/><rect x="18" y="36" width="14" height="16" fill="#9cc89a"/><rect x="20" y="40" width="8" height="8" fill="#e8d860"/><polygon points="50,30 62,34 56,50" fill="#a07838"/><rect x="34" y="56" width="30" height="18" fill="#c8ccd0"/><rect x="16" y="56" width="14" height="12" fill="#b8b8b8"/><polygon points="10,84 60,72 90,90 40,100" fill="#ecd8b4"/><ellipse cx="18" cy="84" rx="8" ry="5" fill="#222"/><ellipse cx="20" cy="82" rx="4" ry="3" fill="#fff"/><ellipse cx="56" cy="80" rx="6" ry="4" fill="#ddd"/><rect x="50" y="76" width="6" height="4" fill="#444"/><polygon points="60,60 90,70 88,94 70,92" fill="#f4f0e8"/></svg><span class="lb">Analysis...</span></div>
<div class="cell alt" style="left:1090px;top:444px"><svg class="th" style="left:18px;top:6px;background:#ffffff" width="34" height="61" viewBox="0 0 100 100" preserveAspectRatio="none"><rect x="10.2" y="4.5" width="13.6" height="4.9" fill="#a4cc80" opacity="0.6"/><rect x="32.2" y="4.5" width="13.6" height="4.9" fill="#a4cc80" opacity="0.6"/><rect x="54.2" y="4.5" width="13.6" height="4.9" fill="#a4cc80" opacity="0.6"/><rect x="76.2" y="4.5" width="13.6" height="4.9" fill="#a4cc80" opacity="0.6"/><rect x="10.2" y="12.4" width="13.6" height="4.9" fill="#a4cc80" opacity="0.6"/><rect x="32.2" y="12.4" width="13.6" height="4.9" fill="#a4cc80" opacity="0.6"/><rect x="54.2" y="12.4" width="13.6" height="4.9" fill="#a4cc80" opacity="0.6"/><rect x="76.2" y="12.4" width="13.6" height="4.9" fill="#a4cc80" opacity="0.6"/><rect x="10.2" y="20.3" width="13.6" height="4.9" fill="#a4cc80" opacity="0.6"/><rect x="32.2" y="20.3" width="13.6" height="4.9" fill="#a4cc80" opacity="0.6"/><rect x="54.2" y="20.3" width="13.6" height="4.9" fill="#a4cc80" opacity="0.6"/><rect x="76.2" y="20.3" width="13.6" height="4.9" fill="#a4cc80" opacity="0.6"/><rect x="10.2" y="28.3" width="13.6" height="4.9" fill="#a4cc80" opacity="0.6"/><rect x="32.2" y="28.3" width="13.6" height="4.9" fill="#a4cc80" opacity="0.6"/><rect x="54.2" y="28.3" width="13.6" height="4.9" fill="#a4cc80" opacity="0.6"/><rect x="76.2" y="28.3" width="13.6" height="4.9" fill="#a4cc80" opacity="0.6"/><rect x="10.2" y="36.2" width="13.6" height="4.9" fill="#a4cc80" opacity="0.6"/><rect x="32.2" y="36.2" width="13.6" height="4.9" fill="#a4cc80" opacity="0.6"/><rect x="54.2" y="36.2" width="13.6" height="4.9" fill="#a4cc80" opacity="0.6"/><rect x="76.2" y="36.2" width="13.6" height="4.9" fill="#a4cc80" opacity="0.6"/><rect x="10.2" y="44.1" width="13.6" height="4.9" fill="#a4cc80" opacity="0.6"/><rect x="32.2" y="44.1" width="13.6" height="4.9" fill="#a4cc80" opacity="0.6"/><rect x="54.2" y="44.1" width="13.6" height="4.9" fill="#a4cc80" opacity="0.6"/><rect x="76.2" y="44.1" width="13.6" height="4.9" fill="#a4cc80" opacity="0.6"/><rect x="10.2" y="52" width="13.6" height="4.9" fill="#a4cc80" opacity="0.6"/><rect x="32.2" y="52" width="13.6" height="4.9" fill="#a4cc80" opacity="0.6"/><rect x="54.2" y="52" width="13.6" height="4.9" fill="#a4cc80" opacity="0.6"/><rect x="76.2" y="52" width="13.6" height="4.9" fill="#a4cc80" opacity="0.6"/><rect x="10.2" y="59.9" width="13.6" height="4.9" fill="#a4cc80" opacity="0.6"/><rect x="32.2" y="59.9" width="13.6" height="4.9" fill="#a4cc80" opacity="0.6"/><rect x="54.2" y="59.9" width="13.6" height="4.9" fill="#a4cc80" opacity="0.6"/><rect x="76.2" y="59.9" width="13.6" height="4.9" fill="#a4cc80" opacity="0.6"/><rect x="10.2" y="67.8" width="13.6" height="4.9" fill="#a4cc80" opacity="0.6"/><rect x="32.2" y="67.8" width="13.6" height="4.9" fill="#a4cc80" opacity="0.6"/><rect x="54.2" y="67.8" width="13.6" height="4.9" fill="#a4cc80" opacity="0.6"/><rect x="76.2" y="67.8" width="13.6" height="4.9" fill="#a4cc80" opacity="0.6"/><rect x="10.2" y="75.8" width="13.6" height="4.9" fill="#a4cc80" opacity="0.6"/><rect x="32.2" y="75.8" width="13.6" height="4.9" fill="#a4cc80" opacity="0.6"/><rect x="54.2" y="75.8" width="13.6" height="4.9" fill="#a4cc80" opacity="0.6"/><rect x="76.2" y="75.8" width="13.6" height="4.9" fill="#a4cc80" opacity="0.6"/><rect x="10.2" y="83.7" width="13.6" height="4.9" fill="#a4cc80" opacity="0.6"/><rect x="32.2" y="83.7" width="13.6" height="4.9" fill="#a4cc80" opacity="0.6"/><rect x="54.2" y="83.7" width="13.6" height="4.9" fill="#a4cc80" opacity="0.6"/><rect x="76.2" y="83.7" width="13.6" height="4.9" fill="#a4cc80" opacity="0.6"/><rect x="10.2" y="91.6" width="13.6" height="4.9" fill="#a4cc80" opacity="0.6"/><rect x="32.2" y="91.6" width="13.6" height="4.9" fill="#a4cc80" opacity="0.6"/><rect x="54.2" y="91.6" width="13.6" height="4.9" fill="#a4cc80" opacity="0.6"/><rect x="76.2" y="91.6" width="13.6" height="4.9" fill="#a4cc80" opacity="0.6"/><rect x="8" y="43.8" width="12.7" height="2.4" fill="#f4f8ee"/><rect x="44.5" y="15.3" width="8.4" height="2.6" fill="#f4f8ee"/><rect x="20.7" y="61.4" width="9.3" height="3.3" fill="#f4f8ee"/><rect x="54.6" y="59.3" width="13.1" height="3.8" fill="#f4f8ee"/><rect x="20.2" y="59.5" width="9.2" height="2.7" fill="#f4f8ee"/><rect x="58.8" y="71.8" width="11.1" height="2.2" fill="#f4f8ee"/><rect x="20.4" y="84.8" width="7.6" height="3" fill="#f4f8ee"/><rect x="73.5" y="14.1" width="9" height="3.7" fill="#f4f8ee"/><rect x="20.1" y="84" width="8" height="2.6" fill="#f4f8ee"/><rect x="24.5" y="69.9" width="11.5" height="3.1" fill="#f4f8ee"/><rect x="51.6" y="65.8" width="13.9" height="3.2" fill="#f4f8ee"/><rect x="32.9" y="17.5" width="11.1" height="3.9" fill="#f4f8ee"/><rect x="44.3" y="79.3" width="7.2" height="2.4" fill="#f4f8ee"/><rect x="48" y="24.4" width="12.1" height="3.8" fill="#f4f8ee"/><rect x="8" y="12" width="30" height="1.5" fill="#555"/><rect x="8" y="44" width="30" height="1.5" fill="#555"/><rect x="8" y="76" width="30" height="1.5" fill="#555"/></svg><span class="lb">Analysis...</span></div>
<div class="cell" style="left:1161px;top:444px"><svg class="th" style="left:5px;top:8px;background:#ffffff" width="61" height="57" viewBox="0 0 100 100" preserveAspectRatio="none"><polygon points="40,8 60,4 70,10 50,16" fill="#222"/><polyline points="24,14 24,44" fill="none" stroke="#999" stroke-width="1" vector-effect="non-scaling-stroke"/><polyline points="40,10 40,36" fill="none" stroke="#aaa" stroke-width="1" vector-effect="non-scaling-stroke"/><polyline points="24,14 40,10" fill="none" stroke="#999" stroke-width="1" vector-effect="non-scaling-stroke"/><polygon points="30,46 56,36 76,48 50,60" fill="#dcc8a8"/><polygon points="30,46 50,60 50,84 30,70" fill="#a4a4a4"/><polygon points="50,60 76,48 76,72 50,84" fill="#e4e4e4"/><rect x="36" y="56" width="8" height="8" fill="#555"/><polygon points="20,84 40,76 46,90 26,98" fill="#d0d0d0"/><rect x="80" y="60" width="14" height="22" fill="none" stroke="#999" stroke-width="1" vector-effect="non-scaling-stroke"/><rect x="58" y="58" width="10" height="12" fill="#f6f6f6"/><polyline points="70,20 76,30" fill="none" stroke="#888" stroke-width="1" vector-effect="non-scaling-stroke"/><rect x="28" y="72" width="10" height="10" fill="#ccc"/></svg><span class="lb">Analysis...</span></div>
<div class="cell alt" style="left:1232px;top:444px"><svg class="th" style="left:15px;top:6px;background:#f6f6f6" width="42" height="61" viewBox="0 0 100 100" preserveAspectRatio="none"><polyline points="10,8 90,4" fill="none" stroke="#bbb" stroke-width="1.2" vector-effect="non-scaling-stroke"/><polyline points="30,6 30,96" fill="none" stroke="#d4d4d4" stroke-width="1" vector-effect="non-scaling-stroke"/><polyline points="60,6 60,96" fill="none" stroke="#d0d0d0" stroke-width="1" vector-effect="non-scaling-stroke"/><rect x="0" y="66" width="100" height="2" fill="#ccc"/><rect x="0" y="70" width="100" height="30" fill="#ececec"/><rect x="6" y="74" width="40" height="22" fill="#f8f8f8"/><rect x="62" y="20" width="20" height="40" fill="#ececec"/><polyline points="0,40 30,30" fill="none" stroke="#ddd" stroke-width="1" vector-effect="non-scaling-stroke"/><polyline points="60,10 100,30" fill="none" stroke="#ddd" stroke-width="1" vector-effect="non-scaling-stroke"/><rect x="10" y="84" width="6" height="10" fill="#ccc"/></svg><span class="lb">Analysis...</span></div>
<div class="cell" style="left:1304px;top:444px"><svg class="th" style="left:16px;top:6px;background:#cfcfea" width="39" height="61" viewBox="0 0 100 100" preserveAspectRatio="none"><polygon points="0,0 40,0 20,30 0,40" fill="#e0e0f2"/><polygon points="60,20 100,10 100,50 80,60" fill="#d8d8ec"/><polygon points="14,12 30,6 38,16 22,24" fill="#4a50d8"/><polygon points="14,44 36,38 44,52 22,60" fill="#3c44d4"/><polygon points="56,40 72,34 80,48 64,54" fill="#4a50d8"/><polygon points="40,74 62,68 70,84 48,92" fill="#3840d0"/><polygon points="76,66 94,62 96,78 82,82" fill="#5258dc"/><polygon points="10,80 26,76 30,90 14,94" fill="#8c90e4"/><ellipse cx="50" cy="22" rx="8" ry="6" fill="#b0b0e4"/><ellipse cx="24" cy="66" rx="8" ry="5" fill="#a8a8e0"/><polyline points="0,60 100,30" fill="none" stroke="#b8b8dc" stroke-width="1" vector-effect="non-scaling-stroke"/><polyline points="20,100 90,0" fill="none" stroke="#b8b8dc" stroke-width="1" vector-effect="non-scaling-stroke"/></svg><span class="lb">Analysis...</span></div>
<div class="cell alt" style="left:1375px;top:444px"><svg class="th" style="left:16px;top:6px;background:#d4d4e2" width="39" height="61" viewBox="0 0 100 100" preserveAspectRatio="none"><polygon points="0,0 100,0 100,20 60,34 0,22" fill="#e2e2ee"/><polygon points="26,46 54,32 84,50 56,70" fill="#5258d8"/><polygon points="32,46 54,36 76,50 56,64" fill="#8488e4"/><polygon points="14,56 30,50 36,62 20,68" fill="#4048d0"/><polygon points="0,70 50,86 40,100 0,100" fill="#e6e6f0"/><polygon points="60,80 100,66 100,100 70,100" fill="#dcdcec"/><ellipse cx="50" cy="14" rx="6" ry="3" fill="#3c44d0"/><rect x="10" y="6" width="22" height="2" fill="#6c70dc"/><rect x="10" y="11" width="16" height="2" fill="#8c90e4"/><polyline points="0,40 100,84" fill="none" stroke="#a8a8c8" stroke-width="1" vector-effect="non-scaling-stroke"/><polyline points="100,24 20,100" fill="none" stroke="#a8a8c8" stroke-width="1" vector-effect="non-scaling-stroke"/><polygon points="64,60 78,56 82,64 68,68" fill="#3038cc"/></svg><span class="lb">Analysis...</span></div>
<div class="cell" style="left:1447px;top:444px"><svg class="th" style="left:16px;top:6px;background:#cdcdec" width="39" height="61" viewBox="0 0 100 100" preserveAspectRatio="none"><polygon points="6,4 18,2 30,40 18,44" fill="#2430dc"/><polygon points="34,10 60,4 66,12 40,18" fill="#2c38de"/><polygon points="70,6 96,2 98,14 74,18" fill="#3a44e0"/><polygon points="40,36 60,26 70,40 50,50" fill="#2430dc"/><polygon points="4,60 30,50 34,60 8,72" fill="#4a52e2"/><polygon points="56,64 90,56 96,70 62,78" fill="#2c38de"/><polygon points="0,84 20,80 24,96 0,100" fill="#2430dc"/><polygon points="60,86 90,80 96,100 66,100" fill="#2c38de"/><polygon points="30,70 50,64 54,78 34,84" fill="#e6e6f6"/><ellipse cx="80" cy="32" rx="8" ry="6" fill="#e2e2f4"/><polygon points="20,22 36,20 50,60 40,62" fill="#7c84ea"/><polyline points="0,46 100,20" fill="none" stroke="#9aa0e8" stroke-width="1" vector-effect="non-scaling-stroke"/></svg><span class="lb">Analysis...</span></div>
<div class="cell alt" style="left:1518px;top:444px"><svg class="th" style="left:16px;top:6px;background:#d0d0ec" width="39" height="61" viewBox="0 0 100 100" preserveAspectRatio="none"><polygon points="18,30 50,16 84,32 84,50 50,68 18,50" fill="#3a42d4"/><polygon points="32,34 50,26 70,36 50,46" fill="#f0f0fa"/><polygon points="50,46 70,36 70,50 50,60" fill="#c4c4ec"/><polygon points="32,34 50,46 50,60 32,48" fill="#dcdcf4"/><polygon points="50,68 84,50 84,70 66,82 50,76" fill="#2c34cc"/><rect x="8" y="4" width="30" height="2" fill="#5a60dc"/><rect x="8" y="9" width="20" height="2" fill="#8488e4"/><polygon points="0,76 40,90 30,100 0,100" fill="#e2e2f4"/><polygon points="60,90 100,78 100,100 70,100" fill="#dcdcf2"/><polyline points="0,60 40,100" fill="none" stroke="#a8a8d8" stroke-width="1" vector-effect="non-scaling-stroke"/><polyline points="100,56 60,100" fill="none" stroke="#a8a8d8" stroke-width="1" vector-effect="non-scaling-stroke"/><ellipse cx="24" cy="70" rx="6" ry="4" fill="#6c72e0"/></svg><span class="lb">Analysis...</span></div>
<div class="cell" style="left:1589px;top:444px"><svg class="th" style="left:17px;top:6px;background:#d2d2ea" width="39" height="61" viewBox="0 0 100 100" preserveAspectRatio="none"><rect x="0" y="0" width="100" height="5" fill="#1c28e0"/><polygon points="10,5 40,5 34,12 14,10" fill="#1c28e0"/><rect x="44" y="8" width="50" height="18" fill="#eeeef8"/><rect x="8" y="14" width="30" height="2" fill="#6068e0"/><polygon points="14,44 44,34 52,44 22,54" fill="#2c36d8"/><rect x="60" y="30" width="34" height="30" fill="#e6e6f4"/><ellipse cx="56" cy="66" rx="6" ry="8" fill="#2c36d8"/><ellipse cx="26" cy="70" rx="8" ry="6" fill="#3a44dc"/><rect x="62" y="72" width="5" height="22" fill="#2832d4"/><rect x="72" y="74" width="5" height="22" fill="#2832d4"/><rect x="82" y="70" width="5" height="24" fill="#3a44dc"/><ellipse cx="64.5" cy="70" rx="3" ry="3" fill="#2832d4"/><ellipse cx="74.5" cy="72" rx="3" ry="3" fill="#2832d4"/><ellipse cx="84.5" cy="68" rx="3" ry="3" fill="#3a44dc"/><polygon points="0,84 50,92 50,100 0,100" fill="#e0e0f0"/><ellipse cx="18" cy="86" rx="8" ry="4" fill="#6c74e4"/><rect x="84" y="40" width="8" height="10" fill="#8088e4"/></svg><span class="lb">Analysis...</span></div>
<div class="cell" style="left:19px;top:533px"><svg class="th" style="left:5px;top:9px;background:#e1e1e1" width="61" height="54" viewBox="0 0 100 100" preserveAspectRatio="none"><polygon points="0,30 30,0 60,0 0,70" fill="#ececec"/><polygon points="40,100 100,30 100,70 70,100" fill="#ebebeb"/><polygon points="36,12 46,6 54,12 44,18" fill="#4e4e4e"/><polygon points="30,24 44,18 56,30 42,36" fill="#555"/><polygon points="52,22 60,16 68,22 60,28" fill="#5e5e5e"/><polygon points="44,48 62,42 76,60 56,70" fill="#6e6e62"/><polygon points="34,68 54,58 70,76 48,88" fill="#c8c8bc"/><polygon points="40,70 52,64 60,74 48,80" fill="#555"/><rect x="10" y="40" width="10" height="6" fill="#f4f4f4"/><rect x="74" y="36" width="12" height="6" fill="#f2f2f2"/><rect x="16" y="64" width="8" height="6" fill="#f0f0f0"/><rect x="80" y="70" width="10" height="8" fill="#f4f4f4"/></svg><span class="lb">Analysis...</span></div>
<div class="cell alt" style="left:90px;top:533px"><svg class="th" style="left:5px;top:15px;background:#ffffff" width="61" height="42" viewBox="0 0 100 100" preserveAspectRatio="none"><rect x="6" y="8" width="24" height="34" fill="#f0f0f0"/><polygon points="6,30 30,24 30,42 6,42" fill="#222"/><rect x="8" y="10" width="8" height="6" fill="#666"/><rect x="20" y="10" width="8" height="6" fill="#888"/><rect x="36" y="8" width="26" height="34" fill="#f6f6f6"/><polygon points="36,8 62,30 62,42 36,26" fill="#080808"/><polygon points="50,10 62,8 62,22" fill="#333"/><rect x="68" y="8" width="26" height="34" fill="#e8e8e8"/><polygon points="70,12 92,12 92,40 70,40 70,30 84,30 84,22 70,22" fill="#080808"/><rect x="6" y="52" width="24" height="40" fill="#f2f2f2"/><polygon points="6,70 20,64 30,78 30,92 6,92" fill="#080808"/><rect x="8" y="54" width="12" height="6" fill="#444"/><rect x="36" y="52" width="26" height="40" fill="#f0f0f0"/><polygon points="36,64 50,76 62,62 62,92 36,92" fill="#0c0c0c"/><rect x="40" y="54" width="3" height="20" fill="#222"/><rect x="68" y="52" width="26" height="40" fill="#d8d8d8"/><polygon points="84,90 94,80 94,92" fill="#080808"/><rect x="69.5" y="71" width="5" height="2.7" fill="#555"/><rect x="79.4" y="64" width="4.3" height="3.4" fill="#555"/><rect x="80.6" y="83.2" width="4.3" height="2.7" fill="#555"/><rect x="76" y="72.3" width="4.2" height="2.4" fill="#555"/><rect x="85" y="66.3" width="4.4" height="2.2" fill="#555"/><rect x="74.7" y="52.6" width="3.5" height="2.5" fill="#555"/><rect x="75.3" y="59.1" width="4.6" height="3.3" fill="#555"/><rect x="75.3" y="67.9" width="3" height="3.9" fill="#555"/><rect x="87" y="70.3" width="2.9" height="3.9" fill="#555"/><rect x="72.5" y="53.8" width="3.5" height="2.8" fill="#555"/><rect x="85.9" y="56.7" width="2.7" height="2.9" fill="#555"/><rect x="68.9" y="73.2" width="3.7" height="3.7" fill="#555"/></svg><span class="lb">Analysis...</span></div>
</div>
<div class="ab" style="left:1669px;top:250px;width:12px;height:604px;background:#333136"></div><div class="ab" style="left:1673px;top:263px;width:4px;height:546px;background:#6b6a6e;border-radius:2px"></div><svg class="ab" style="left:1669px;top:250px" width="12" height="12" viewBox="0 0 12 12" fill="none" stroke="#8a898d" stroke-width="1.4"><path d="M2.500 8.500l3.500-3.500 3.500 3.500"/></svg><svg class="ab" style="left:1669px;top:820px" width="12" height="34" viewBox="0 0 12 34" fill="none" stroke="#8a898d" stroke-width="1.2"><path d="M3 6.500l3.500 3 3.500-3M3 10l3.500 3 3.500-3M3 24.500l3.500 3.500 3.500-3.500"/></svg>
<div id="bottom"></div>
<svg class="ab" style="left:360px;top:870px" width="140" height="170" viewBox="360 870 140 170"><defs><linearGradient id="fg" x1="0" y1="0" x2="1" y2="0"><stop offset="0" stop-color="#f6d67a"/><stop offset="1" stop-color="#fbe29a"/></linearGradient><linearGradient id="fb" x1="0" y1="0" x2="1" y2="1"><stop offset="0" stop-color="#f3cf6c"/><stop offset="1" stop-color="#e4b84e"/></linearGradient></defs><path d="M370 879h90q3 0 3 3v120h-93z" fill="url(#fb)"/><path d="M392.500 887L451 905.500L451.500 1035L402.500 1016z" fill="#fdfdfd"/><path d="M404 894l4 1 18 34-2 1z" fill="#444" opacity=".7"/><path d="M412 894l5-3 5 6-5 3z" fill="#b0651e"/><path d="M421 930l10-8 14 12-10 10z" fill="#c9c9c9"/><path d="M428 932l4-3 2 10-3 2zM436 930l3-2 3 10-3 2z" fill="#555"/><path d="M408 936l4-3 24 26-3 4z" fill="#bbb"/><path d="M404 964l4-2 2 12-4 3z" fill="#666"/><path d="M406 986l24-18 6 50-16 6-16-24z" fill="#9a9a9a"/><path d="M410 990l12-8 6 18-12 8z" fill="#555"/><path d="M412 1006l10-4 4 12-8 4z" fill="#6e6e6e"/><path d="M432 964l4-2 2 8-4 3zM432 978l5-4v8l-4 6z" fill="#444"/><path d="M438 996v-14l6-6 6 2M446 1022v-20l4-6" stroke="#333" stroke-width="1" fill="none"/><path d="M450 895L484.500 899L484.500 1023.800L452 1021z" fill="#fbfbfb"/><path d="M450 895L452.500 896L453.500 1021L452 1021z" fill="#d8d8d8"/><path d="M451 899.500l30 3.500" stroke="#333" stroke-width="1.3"/><path d="M453 917.500l29 2M453 920l10 .5M453 939.500l27 2M453 942.500l12 .5M453 977.500l12 1" stroke="#777" stroke-width="1"/><path d="M453 994h8M453 997h10M453 1000h7M453 1003h9M453 1006h10M453 1009h8M453 1012h8" stroke="#666" stroke-width="1"/><path d="M370 879L404 906.500L402 1031L370 1010z" fill="url(#fg)"/></svg>
<div class="info" style="left:856px;top:859px">140 项目</div>
<div class="info" style="left:856px;top:884px">名称</div><div class="info" style="left:940px;top:884px">室内剖面</div>
<div class="info" style="left:856px;top:900px">类型</div><div class="info" style="left:940px;top:900px">文件夹</div>
<div class="info" style="left:856px;top:916px">创建时间</div><div class="info" style="left:940px;top:916px"><span style="font-size:12.8px">2022-02-03&nbsp;&nbsp;14:02</span></div>
<div class="info" style="left:856px;top:932px">修改时间</div><div class="info" style="left:940px;top:932px"><span style="font-size:12.8px">2022-02-05&nbsp;&nbsp;12:17</span></div>
<div class="info" style="left:856px;top:948px">距上次修改</div><div class="info" style="left:940px;top:948px">10 时</div>
<div class="info" style="left:1560px;width:110.500px;text-align:right;top:860px">45.92 MB</div>
<svg class="ab" style="left:1400px;top:910px;filter:drop-shadow(1px 1px 1px rgba(0,0,0,.45))" width="90" height="85" viewBox="1400 910 90 85" fill="none" stroke="#8e1619" stroke-width="2.3" stroke-linejoin="round" stroke-linecap="round"><path d="M1448.200 920.600L1414.500 952.300Q1413 953.800 1414.500 955.400L1435.500 976.600Q1438 979 1441.500 977.300L1451.500 970Q1453.800 968.600 1455.500 970.800L1465.400 983.600Q1469 988 1474 984.500Q1479 980.500 1475.500 975.800L1461.500 963.500Q1459.500 961.800 1461 959.500Q1470 949 1471.300 946Q1472 944.500 1470.500 943Z"/><path d="M1430.300 967.200L1463 938.600" stroke-width="2.1"/><path d="M1416.800 953.300L1449.800 922.800" stroke-width="1.600"/><path d="M1448.200 925.900l5.400 10.700M1442.500 930.900l5.300 11M1436.800 936.200l4.900 10.200M1431.500 941.500l4.500 11M1426.200 946.400l4.500 10.200M1420.900 951.300l6.100 8.600" stroke-width="2"/></svg>
<div class="ab" style="left:1488px;top:917px;font-size:43px;line-height:46px;height:46px;font-weight:300;letter-spacing:12px;color:#b2b2b2;white-space:nowrap;font-family:'Noto Sans CJK SC',sans-serif;transform-origin:0 0;transform:scale(1,1.5);text-shadow:1px 1px 2px rgba(0,0,0,.55)">刷子库</div>
<div class="ab" style="left:1411px;top:996px;font-size:18.600px;line-height:26px;font-weight:200;font-family:'DejaVu Sans','Liberation Sans',sans-serif;color:#a8a8a8;white-space:nowrap;letter-spacing:2px;text-shadow:1px 1px 1px rgba(0,0,0,.5)">WWW.SHUAZIKU.COM</div>
<div class="ab" style="left:1622px;top:1029px;font-size:7px;line-height:10px;color:#d8d8d8">退出</div>
<svg class="ab" style="left:1640px;top:1028px" width="16" height="12" viewBox="0 0 16 12" fill="none" stroke="#aaa" stroke-width="1.2"><path d="M3 9l5-5 5 5"/></svg>
</body></html>
